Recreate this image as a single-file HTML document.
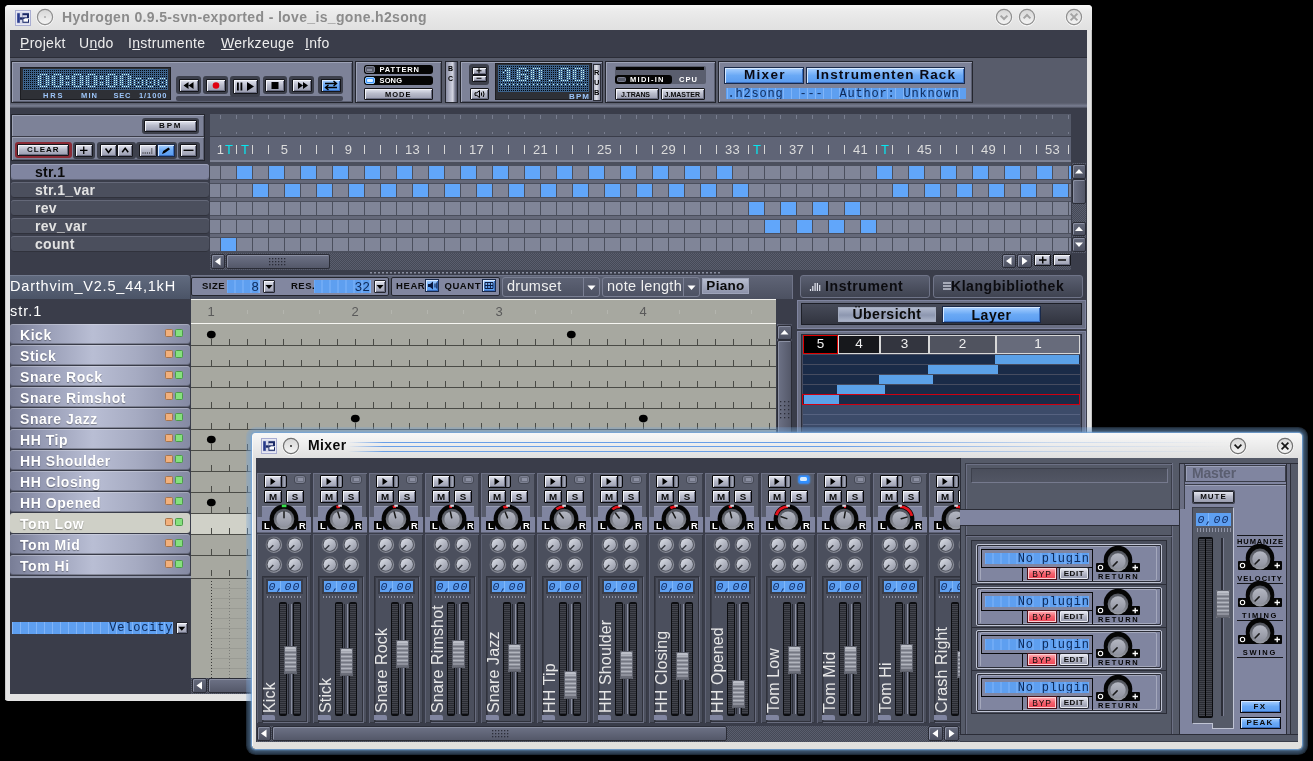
<!DOCTYPE html>
<html><head><meta charset="utf-8"><title>Hydrogen</title>
<style>
html,body{margin:0;padding:0;background:#000;}
body{width:1313px;height:761px;position:relative;overflow:hidden;font-family:"Liberation Sans",sans-serif;}
div,svg{position:absolute;box-sizing:border-box;}
.t{white-space:nowrap;line-height:1;}
.btn{background:linear-gradient(#e4e6f0,#b9bccb 45%,#9a9db0);border:1px solid #23252e;border-radius:1px;box-shadow:inset 1px 1px 0 #f4f5fa,inset -1px -1px 0 #6d7084;}
.bbtn{background:linear-gradient(#a9d0ff,#6aa9f5 50%,#5a9cf0);border:1px solid #1a2a4a;box-shadow:inset 1px 1px 0 #d6e8ff,inset -1px -1px 0 #3a6fc0;}
.px{font-weight:bold;font-size:8px;letter-spacing:1px;color:#0a0a0a;white-space:nowrap;line-height:1;text-align:center;}
.lcd{font-family:"Liberation Mono",monospace;color:#0d2a5a;white-space:nowrap;line-height:1;}
.panel{background:#7d8298;border:1px solid #24262e;box-shadow:inset 1px 1px 0 #9da2b6,inset -1px -1px 0 #5a5e70;}
</style></head>
<body>
<div id="w" style="left:0;top:0;width:1313px;height:761px;will-change:transform">
<svg width="0" height="0" style="left:0;top:0"><defs><linearGradient id="ko" x1="0" y1="0" x2="0" y2="1"><stop offset="0" stop-color="#50535c"/><stop offset="0.5" stop-color="#6a6d76"/><stop offset="1" stop-color="#9c9fa8"/></linearGradient><linearGradient id="ki" x1="0" y1="0" x2="0" y2="1"><stop offset="0" stop-color="#b4b7c2"/><stop offset="1" stop-color="#9093a0"/></linearGradient><linearGradient id="so" x1="0" y1="0" x2="1" y2="1"><stop offset="0" stop-color="#5a5d68"/><stop offset="1" stop-color="#9a9da8"/></linearGradient><linearGradient id="si" x1="0" y1="0" x2="1" y2="1"><stop offset="0" stop-color="#dfe2ea"/><stop offset="1" stop-color="#8f93a2"/></linearGradient></defs><defs><pattern id="dm" width="2" height="2" patternUnits="userSpaceOnUse"><rect width="1" height="1" fill="#04070b"/></pattern><pattern id="lit" width="2" height="2" patternUnits="userSpaceOnUse"><rect width="1" height="1" fill="#c8f6f6"/></pattern></defs></svg>
<div style="left:5px;top:5px;width:1087px;height:696px;background:#e3e3e3;border-radius:4px 4px 3px 3px;"></div>
<div style="left:5px;top:5px;width:1087px;height:25px;background:linear-gradient(#f8f8f8,#ebebeb 25%,#e6e6e6 60%,#e1e1e1);border-radius:4px 4px 0 0;"></div>
<div style="left:5px;top:30px;width:1px;height:670px;background:#c8c8c8;"></div>
<div style="left:1091px;top:30px;width:1px;height:670px;background:#c4c4c4;"></div>
<svg style="left:15px;top:10px;" width="16" height="16" viewBox="0 0 16 16"><rect x="0.5" y="0.5" width="15" height="15" fill="#d6d8ea" stroke="#a9add2"/><rect x="1.5" y="1.5" width="13" height="13" fill="none" stroke="#e8e9f4"/><rect x="2.2" y="3.2" width="2.6" height="9.6" fill="#283a8c"/><rect x="4.8" y="7.3" width="2.8" height="2.4" fill="#1a2866"/><rect x="7.4" y="3.2" width="6.6" height="9.6" fill="#1a2866"/><rect x="7.4" y="5.2" width="4.6" height="2.1" fill="#d6d8ea"/><rect x="8.4" y="8.9" width="4.6" height="2.8" fill="#ffffff"/><rect x="9.6" y="8.3" width="4.4" height="0.9" fill="#ffffff"/></svg>
<svg style="left:35px;top:7px;" width="20" height="21" viewBox="0 0 20 21"><defs><linearGradient id="cg4517" x1="0" y1="0" x2="0" y2="1"><stop offset="0" stop-color="#d6d6d6"/><stop offset="1" stop-color="#f6f6f6"/></linearGradient></defs><circle cx="10" cy="10.6" r="8.3" fill="none" stroke="#fafafa" stroke-width="1"/><circle cx="10" cy="10" r="7.6" fill="url(#cg4517)" stroke="#8e8e8e" stroke-width="1.2"/><circle cx="10" cy="10" r="0.9" fill="#a4a4a4"/></svg>
<div class="t" style="left:62px;top:10px;font-weight:bold;font-size:14px;color:#8b8b8b;letter-spacing:0.35px;">Hydrogen 0.9.5-svn-exported - love_is_gone.h2song</div>
<svg style="left:993.5px;top:7px;" width="20" height="21" viewBox="0 0 20 21"><defs><linearGradient id="cg100317" x1="0" y1="0" x2="0" y2="1"><stop offset="0" stop-color="#d6d6d6"/><stop offset="1" stop-color="#f6f6f6"/></linearGradient></defs><circle cx="10" cy="10.6" r="8.3" fill="none" stroke="#fafafa" stroke-width="1"/><circle cx="10" cy="10" r="7.6" fill="url(#cg100317)" stroke="#8e8e8e" stroke-width="1.2"/><path d="M6.6 8.6 L10 12 L13.4 8.6" fill="none" stroke="#a4a4a4" stroke-width="2.0"/></svg>
<svg style="left:1016.5px;top:7px;" width="20" height="21" viewBox="0 0 20 21"><defs><linearGradient id="cg102617" x1="0" y1="0" x2="0" y2="1"><stop offset="0" stop-color="#d6d6d6"/><stop offset="1" stop-color="#f6f6f6"/></linearGradient></defs><circle cx="10" cy="10.6" r="8.3" fill="none" stroke="#fafafa" stroke-width="1"/><circle cx="10" cy="10" r="7.6" fill="url(#cg102617)" stroke="#8e8e8e" stroke-width="1.2"/><path d="M6.6 11.4 L10 8 L13.4 11.4" fill="none" stroke="#a4a4a4" stroke-width="2.0"/></svg>
<svg style="left:1063.5px;top:7px;" width="20" height="21" viewBox="0 0 20 21"><defs><linearGradient id="cg107317" x1="0" y1="0" x2="0" y2="1"><stop offset="0" stop-color="#d6d6d6"/><stop offset="1" stop-color="#f6f6f6"/></linearGradient></defs><circle cx="10" cy="10.6" r="8.3" fill="none" stroke="#fafafa" stroke-width="1"/><circle cx="10" cy="10" r="7.6" fill="url(#cg107317)" stroke="#8e8e8e" stroke-width="1.2"/><path d="M6.6 6.6 L13.4 13.4 M13.4 6.6 L6.6 13.4" fill="none" stroke="#a4a4a4" stroke-width="2.0"/></svg>
<div style="left:10px;top:30px;width:1077px;height:664px;background:#3a3d4a;"></div>
<div class="t" style="left:20px;top:36px;font-size:14px;color:#eeeeee;letter-spacing:0.3px;"><u>P</u>rojekt</div>
<div class="t" style="left:79px;top:36px;font-size:14px;color:#eeeeee;letter-spacing:0.3px;">U<u>n</u>do</div>
<div class="t" style="left:128px;top:36px;font-size:14px;color:#eeeeee;letter-spacing:0.3px;">I<u>n</u>strumente</div>
<div class="t" style="left:221px;top:36px;font-size:14px;color:#eeeeee;letter-spacing:0.3px;"><u>W</u>erkzeuge</div>
<div class="t" style="left:305px;top:36px;font-size:14px;color:#eeeeee;letter-spacing:0.3px;"><u>I</u>nfo</div>
<div style="left:10px;top:57px;width:1077px;height:51px;background:#585c6b;"></div>
<div style="left:10px;top:57px;width:1077px;height:1px;background:#2b2d37;"></div>
<div style="left:10px;top:103px;width:1077px;height:5px;background:linear-gradient(#585c6b,#7a7f92 60%,#4a4e5c);"></div>
<div class="panel" style="left:11px;top:61px;width:342px;height:42px;"></div>
<div style="left:20px;top:67px;width:151px;height:33px;background:#2e3036;border:1px solid #1c1d22;"></div>
<div style="left:23px;top:69px;width:145px;height:21px;background:#3d628a;"></div>
<svg style="left:24px;top:70px;shape-rendering:crispEdges;" width="144" height="20" viewBox="0 0 144 20"><rect width="144" height="20" fill="url(#dm)"/><rect x="16" y="4" width="8" height="2" fill="url(#lit)"/><rect x="16" y="16" width="8" height="2" fill="url(#lit)"/><rect x="14" y="6" width="4" height="10" fill="url(#lit)"/><rect x="22" y="6" width="4" height="10" fill="url(#lit)"/><rect x="30" y="4" width="8" height="2" fill="url(#lit)"/><rect x="30" y="16" width="8" height="2" fill="url(#lit)"/><rect x="28" y="6" width="4" height="10" fill="url(#lit)"/><rect x="36" y="6" width="4" height="10" fill="url(#lit)"/><rect x="50" y="4" width="8" height="2" fill="url(#lit)"/><rect x="50" y="16" width="8" height="2" fill="url(#lit)"/><rect x="48" y="6" width="4" height="10" fill="url(#lit)"/><rect x="56" y="6" width="4" height="10" fill="url(#lit)"/><rect x="64" y="4" width="8" height="2" fill="url(#lit)"/><rect x="64" y="16" width="8" height="2" fill="url(#lit)"/><rect x="62" y="6" width="4" height="10" fill="url(#lit)"/><rect x="70" y="6" width="4" height="10" fill="url(#lit)"/><rect x="84" y="4" width="8" height="2" fill="url(#lit)"/><rect x="84" y="16" width="8" height="2" fill="url(#lit)"/><rect x="82" y="6" width="4" height="10" fill="url(#lit)"/><rect x="90" y="6" width="4" height="10" fill="url(#lit)"/><rect x="98" y="4" width="8" height="2" fill="url(#lit)"/><rect x="98" y="16" width="8" height="2" fill="url(#lit)"/><rect x="96" y="6" width="4" height="10" fill="url(#lit)"/><rect x="104" y="6" width="4" height="10" fill="url(#lit)"/><rect x="42" y="6" width="4" height="4" fill="url(#lit)"/><rect x="42" y="12" width="4" height="4" fill="url(#lit)"/><rect x="76" y="6" width="4" height="4" fill="url(#lit)"/><rect x="76" y="12" width="4" height="4" fill="url(#lit)"/><rect x="112" y="8" width="6" height="2" fill="url(#lit)"/><rect x="112" y="16" width="6" height="2" fill="url(#lit)"/><rect x="110" y="10" width="2" height="6" fill="url(#lit)"/><rect x="118" y="10" width="2" height="6" fill="url(#lit)"/><rect x="114" y="12" width="2" height="2" fill="url(#lit)"/><rect x="124" y="8" width="6" height="2" fill="url(#lit)"/><rect x="124" y="16" width="6" height="2" fill="url(#lit)"/><rect x="122" y="10" width="2" height="6" fill="url(#lit)"/><rect x="130" y="10" width="2" height="6" fill="url(#lit)"/><rect x="126" y="12" width="2" height="2" fill="url(#lit)"/><rect x="136" y="8" width="6" height="2" fill="url(#lit)"/><rect x="136" y="16" width="6" height="2" fill="url(#lit)"/><rect x="134" y="10" width="2" height="6" fill="url(#lit)"/><rect x="142" y="10" width="2" height="6" fill="url(#lit)"/><rect x="138" y="12" width="2" height="2" fill="url(#lit)"/></svg>
<div class="t" style="left:43px;top:92px;font-size:7.5px;font-weight:bold;color:#9cc4f8;letter-spacing:1.83px;">HRS</div>
<div class="t" style="left:81px;top:92px;font-size:7.5px;font-weight:bold;color:#9cc4f8;letter-spacing:1.13px;">MIN</div>
<div class="t" style="left:113.5px;top:92px;font-size:7.5px;font-weight:bold;color:#9cc4f8;letter-spacing:0.79px;">SEC</div>
<div class="t" style="left:139px;top:92px;font-size:7.5px;font-weight:bold;color:#9cc4f8;letter-spacing:0.91px;">1/1000</div>
<div style="left:176px;top:96px;width:167px;height:5px;background:#454857;border-radius:2px;"></div>
<div style="left:176.0px;top:76px;width:25px;height:18px;background:#3d404c;border-radius:3px;"></div>
<div class="btn" style="left:178.5px;top:79px;width:20px;height:13px;border-color:#15161b;"></div>
<svg style="left:178.5px;top:79px;" width="20" height="13" viewBox="0 0 20 13"><path d="M9.5 3 L9.5 10 L4.5 6.5z M14.5 3 L14.5 10 L9.5 6.5z" fill="#000"/></svg>
<div style="left:203.0px;top:76px;width:25px;height:18px;background:#3d404c;border-radius:3px;"></div>
<div class="btn" style="left:205.5px;top:79px;width:20px;height:13px;border-color:#15161b;"></div>
<svg style="left:205.5px;top:79px;" width="20" height="13" viewBox="0 0 20 13"><circle cx="10" cy="6.5" r="3.3" fill="#e00010"/></svg>
<div style="left:230.0px;top:76px;width:30px;height:21px;background:#3d404c;border-radius:3px;"></div>
<div class="btn" style="left:232.5px;top:79px;width:25px;height:15px;border-color:#15161b;"></div>
<svg style="left:232.5px;top:79px;" width="25" height="15" viewBox="0 0 25 15"><path d="M4 3.5h1.8v8H4z M7.5 3.5h1.8v8H7.5z M14 3 L21 7.5 L14 12z" fill="#000"/></svg>
<div style="left:262.5px;top:76px;width:24.5px;height:18px;background:#3d404c;border-radius:3px;"></div>
<div class="btn" style="left:265px;top:79px;width:19.5px;height:13px;border-color:#15161b;"></div>
<svg style="left:265px;top:79px;" width="19.5" height="13" viewBox="0 0 19.5 13"><rect x="6.5" y="3" width="7" height="7" fill="#000"/></svg>
<div style="left:289.0px;top:76px;width:25px;height:18px;background:#3d404c;border-radius:3px;"></div>
<div class="btn" style="left:291.5px;top:79px;width:20px;height:13px;border-color:#15161b;"></div>
<svg style="left:291.5px;top:79px;" width="20" height="13" viewBox="0 0 20 13"><path d="M6 3 L6 10 L11 6.5z M11 3 L11 10 L16 6.5z" fill="#000"/></svg>
<div style="left:318.0px;top:76px;width:25px;height:18px;background:#3d404c;border-radius:3px;"></div>
<div class="bbtn" style="left:320.5px;top:79px;width:20px;height:13px;border-color:#15161b;"></div>
<svg style="left:320.5px;top:79px;" width="20" height="13" viewBox="0 0 20 13"><path d="M4 4.5h10.5M12.5 2l3 2.5l-3 2.5 M16 8.5h-10.5M7.5 6l-3 2.5l3 2.5" fill="none" stroke="#000" stroke-width="1.4"/></svg>
<div class="panel" style="left:355px;top:61px;width:87px;height:42px;"></div>
<div style="left:364px;top:65px;width:69px;height:9px;background:#050505;border-radius:3px;"></div>
<div style="left:364px;top:76px;width:69px;height:9px;background:#050505;border-radius:3px;"></div>
<div style="left:364.5px;top:66px;width:10.5px;height:7px;background:#565a69;border:1px solid #7c8092;border-radius:2px;"></div>
<div style="left:367px;top:69px;width:5px;height:1.5px;background:#8a8ea0;"></div>
<div style="left:364.5px;top:77px;width:10.5px;height:7px;background:#3f98ff;border:1px solid #9fd0ff;border-radius:2px;"></div>
<div style="left:367px;top:79px;width:6px;height:3px;background:#dff0ff;border-radius:1px;"></div>
<div class="t" style="left:379.5px;top:66px;font-size:7.5px;font-weight:bold;color:#fff;letter-spacing:0.87px;">PATTERN</div>
<div class="t" style="left:379.5px;top:77px;font-size:7.5px;font-weight:bold;color:#fff;letter-spacing:0.14px;">SONG</div>
<div class="btn" style="left:364px;top:88px;width:69px;height:12px;border-color:#15161b;"></div>
<div class="t" style="left:385px;top:90.5px;font-size:7.5px;font-weight:bold;color:#0a0a0a;letter-spacing:1.00px;">MODE</div>
<div style="left:444.5px;top:61px;width:13px;height:42px;background:linear-gradient(90deg,#8a8ea4,#b4b7c8 35%,#d4d6e2 62%,#8a8da0 78%,#4d5062);border:1px solid #24262e;"></div>
<div class="t" style="left:448px;top:65px;font-size:7px;font-weight:bold;color:#000;">B</div>
<div class="t" style="left:448px;top:75px;font-size:7px;font-weight:bold;color:#000;">C</div>
<div class="panel" style="left:459.5px;top:61px;width:143px;height:42px;"></div>
<div style="left:469px;top:64px;width:20px;height:21px;background:#3d404c;border-radius:3px;"></div>
<div class="btn" style="left:471.5px;top:67px;width:15px;height:7.5px;border-color:#15161b;"></div>
<div class="btn" style="left:471.5px;top:74.5px;width:15px;height:7.5px;border-color:#15161b;"></div>
<svg style="left:471px;top:66px;" width="16" height="17" viewBox="0 0 16 17"><path d="M5.5 4.7h5M8 2.2v5M5.5 12.2h5" stroke="#000" stroke-width="1.1"/></svg>
<div class="btn" style="left:469.5px;top:88px;width:19px;height:12px;border-color:#15161b;"></div>
<svg style="left:469.5px;top:88px;" width="19" height="12" viewBox="0 0 19 12"><path d="M5 4.8h1.8l2.7-2.2v7L6.8 7.4H5z" fill="none" stroke="#000" stroke-width="1"/><path d="M11.5 4.5v3.2M13.2 3.2q1.6 2.8 0 5.8" fill="none" stroke="#000" stroke-width="1"/></svg>
<div style="left:495px;top:63px;width:97px;height:37px;background:#2e3036;border:1px solid #1c1d22;"></div>
<div style="left:498px;top:65px;width:91px;height:27px;background:#3d628a;"></div>
<svg style="left:499px;top:66px;shape-rendering:crispEdges;" width="90" height="26" viewBox="0 0 90 26"><rect width="90" height="26" fill="url(#dm)"/><rect x="8" y="2" width="4" height="12" fill="url(#lit)"/><rect x="6" y="4" width="2" height="2" fill="url(#lit)"/><rect x="4" y="6" width="2" height="2" fill="url(#lit)"/><rect x="4" y="14" width="12" height="2" fill="url(#lit)"/><rect x="20" y="2" width="8" height="2" fill="url(#lit)"/><rect x="18" y="4" width="4" height="10" fill="url(#lit)"/><rect x="26" y="4" width="4" height="2" fill="url(#lit)"/><rect x="22" y="8" width="6" height="2" fill="url(#lit)"/><rect x="26" y="10" width="4" height="4" fill="url(#lit)"/><rect x="20" y="14" width="8" height="2" fill="url(#lit)"/><rect x="34" y="2" width="8" height="2" fill="url(#lit)"/><rect x="34" y="14" width="8" height="2" fill="url(#lit)"/><rect x="32" y="4" width="4" height="10" fill="url(#lit)"/><rect x="40" y="4" width="4" height="10" fill="url(#lit)"/><rect x="50" y="14" width="4" height="2" fill="url(#lit)"/><rect x="62" y="2" width="8" height="2" fill="url(#lit)"/><rect x="62" y="14" width="8" height="2" fill="url(#lit)"/><rect x="60" y="4" width="4" height="10" fill="url(#lit)"/><rect x="68" y="4" width="4" height="10" fill="url(#lit)"/><rect x="76" y="2" width="8" height="2" fill="url(#lit)"/><rect x="76" y="14" width="8" height="2" fill="url(#lit)"/><rect x="74" y="4" width="4" height="10" fill="url(#lit)"/><rect x="82" y="4" width="4" height="10" fill="url(#lit)"/><rect x="2" y="18" width="2" height="2" fill="url(#lit)"/><rect x="6" y="18" width="2" height="2" fill="url(#lit)"/><rect x="10" y="18" width="2" height="2" fill="url(#lit)"/><rect x="14" y="18" width="2" height="2" fill="url(#lit)"/><rect x="18" y="18" width="2" height="2" fill="url(#lit)"/><rect x="22" y="18" width="2" height="2" fill="url(#lit)"/><rect x="26" y="18" width="2" height="2" fill="url(#lit)"/><rect x="30" y="18" width="2" height="2" fill="url(#lit)"/><rect x="34" y="18" width="2" height="2" fill="url(#lit)"/><rect x="38" y="18" width="2" height="2" fill="url(#lit)"/><rect x="42" y="18" width="2" height="2" fill="url(#lit)"/><rect x="46" y="18" width="2" height="2" fill="url(#lit)"/><rect x="50" y="18" width="2" height="2" fill="url(#lit)"/><rect x="54" y="18" width="2" height="2" fill="url(#lit)"/><rect x="58" y="18" width="2" height="2" fill="url(#lit)"/><rect x="62" y="18" width="2" height="2" fill="url(#lit)"/><rect x="66" y="18" width="2" height="2" fill="url(#lit)"/><rect x="70" y="18" width="2" height="2" fill="url(#lit)"/><rect x="74" y="18" width="2" height="2" fill="url(#lit)"/><rect x="78" y="18" width="2" height="2" fill="url(#lit)"/><rect x="82" y="18" width="2" height="2" fill="url(#lit)"/><rect x="86" y="18" width="2" height="2" fill="url(#lit)"/></svg>
<div class="t" style="left:569px;top:92.5px;font-size:8px;font-weight:bold;color:#9cc4f8;letter-spacing:1.11px;">BPM</div>
<div style="left:592.5px;top:64px;width:8px;height:36.5px;background:linear-gradient(90deg,#b9bccb,#e0e2ea 45%,#8f92a6);border:1px solid #2a2c36;"></div>
<div class="t" style="left:594px;top:69px;font-size:7.5px;font-weight:bold;color:#000;">R</div>
<div class="t" style="left:594px;top:79px;font-size:7.5px;font-weight:bold;color:#000;">U</div>
<div class="t" style="left:594px;top:89px;font-size:7.5px;font-weight:bold;color:#000;">B</div>
<div class="panel" style="left:604.5px;top:61px;width:111px;height:42px;"></div>
<div style="left:614.5px;top:65.5px;width:91px;height:18px;background:#5a5e6e;border-radius:2px;"></div>
<div style="left:616px;top:66.5px;width:88px;height:3.5px;background:#050505;"></div>
<div style="left:614.5px;top:74.5px;width:57px;height:9px;background:#050505;border-radius:3px;"></div>
<div style="left:617px;top:76.5px;width:8.5px;height:5.5px;background:#565a69;border:1px solid #7c8092;border-radius:1.5px;"></div>
<div class="t" style="left:630px;top:75.5px;font-size:7.5px;font-weight:bold;color:#fff;letter-spacing:1.28px;">MIDI-IN</div>
<div class="t" style="left:679px;top:75.5px;font-size:7.5px;font-weight:bold;color:#fff;letter-spacing:1.08px;">CPU</div>
<div class="btn" style="left:614.5px;top:88px;width:44px;height:11.5px;border-color:#15161b;"></div>
<div class="t" style="left:621px;top:90.5px;font-size:7px;font-weight:bold;color:#0a0a0a;letter-spacing:-0.16px;">J.TRANS</div>
<div class="btn" style="left:660.5px;top:88px;width:44px;height:11.5px;border-color:#15161b;"></div>
<div class="t" style="left:664.5px;top:90.5px;font-size:7px;font-weight:bold;color:#0a0a0a;letter-spacing:0.02px;">J.MASTER</div>
<div class="panel" style="left:717.5px;top:61px;width:255px;height:42px;"></div>
<div class="bbtn" style="left:724px;top:67px;width:80px;height:17px;"></div>
<div class="t" style="left:744px;top:68px;font-size:13.5px;font-weight:bold;color:#0a0a14;letter-spacing:1.31px;">Mixer</div>
<div class="bbtn" style="left:805.5px;top:67px;width:159.5px;height:17px;"></div>
<div class="t" style="left:816px;top:68px;font-size:13.5px;font-weight:bold;color:#0a0a14;letter-spacing:1.09px;">Instrumenten Rack</div>
<div style="left:726px;top:88px;width:239.5px;height:11px;background:#5e9ff0;background-image:repeating-linear-gradient(90deg,rgba(150,195,255,0.6) 0 1px,transparent 1px 8px);background-position:1.0px 0;overflow:hidden;"><div class="lcd" style="left:1.5px;right:0.7px;top:0.0px;font-size:12px;letter-spacing:0.8px;text-align:left">.h2song&nbsp;&nbsp;---&nbsp;&nbsp;Author:&nbsp;Unknown</div></div>
<div style="left:10px;top:108px;width:1077px;height:167px;background:#3a3d4a;"></div>
<div class="panel" style="left:11px;top:114px;width:194px;height:47px;"></div>
<div style="left:12px;top:136px;width:192px;height:1px;background:#3a3c48;"></div>
<div style="left:12px;top:137px;width:192px;height:1px;background:#9da2b6;"></div>
<div style="left:141.5px;top:117.5px;width:57px;height:16px;background:#3d404c;border-radius:3px;"></div>
<div class="btn" style="left:144px;top:120px;width:52.5px;height:11.5px;border-color:#15161b;"></div>
<div class="t" style="left:159px;top:122px;font-size:8px;font-weight:bold;color:#0a0a0a;letter-spacing:1.86px;">BPM</div>
<div style="left:14.5px;top:141.5px;width:57px;height:16px;background:#8a2b36;border-radius:3px;"></div>
<div class="btn" style="left:17px;top:144px;width:52px;height:11.5px;border-color:#15161b;"></div>
<div class="t" style="left:27px;top:146px;font-size:8px;font-weight:bold;color:#0a0a0a;letter-spacing:0.99px;">CLEAR</div>
<div style="left:72.5px;top:141.5px;width:22px;height:17px;background:#3d404c;border-radius:3px;"></div>
<div class="btn" style="left:75px;top:144px;width:17.5px;height:12.5px;border-color:#15161b;"></div>
<svg style="left:75px;top:144px;" width="17.5" height="12.5" viewBox="0 0 17.5 12.5"><path d="M5 6.3h7.5M8.75 2.6v7.4" stroke="#000" stroke-width="1.3"/></svg>
<div style="left:97px;top:141.5px;width:38.5px;height:17px;background:#3d404c;border-radius:3px;"></div>
<div class="btn" style="left:99.5px;top:144px;width:17px;height:12.5px;border-color:#15161b;"></div>
<div class="btn" style="left:116.5px;top:144px;width:16.5px;height:12.5px;border-color:#15161b;"></div>
<svg style="left:99.5px;top:144px;" width="17" height="12.5" viewBox="0 0 17 12.5"><path d="M5.5 4.5l3 4l3-4" fill="none" stroke="#000" stroke-width="1.5"/></svg>
<svg style="left:116.5px;top:144px;" width="16.5" height="12.5" viewBox="0 0 16.5 12.5"><path d="M5.2 8.3l3-4l3 4" fill="none" stroke="#000" stroke-width="1.5"/></svg>
<div style="left:136px;top:141.5px;width:41px;height:17px;background:#3d404c;border-radius:3px;"></div>
<div class="btn" style="left:138.5px;top:144px;width:18.5px;height:12.5px;border-color:#15161b;"></div>
<div class="bbtn" style="left:157px;top:144px;width:18px;height:12.5px;"></div>
<svg style="left:138.5px;top:144px;" width="18.5" height="12.5" viewBox="0 0 18.5 12.5"><path d="M3.5 9h1M5.7 9h1M7.9 9h1M10.1 9h1M12.3 9h1M12.3 7h1M12.3 5h1" stroke="#000" stroke-width="1.1"/></svg>
<svg style="left:157px;top:144px;" width="18" height="12.5" viewBox="0 0 18 12.5"><path d="M5 10l1.2-3l5.3-3.5l1.5 1.8l-5.3 3.6z" fill="#000"/></svg>
<div style="left:177.5px;top:141.5px;width:22px;height:17px;background:#3d404c;border-radius:3px;"></div>
<div class="btn" style="left:180px;top:144px;width:17px;height:12.5px;border-color:#15161b;"></div>
<svg style="left:180px;top:144px;" width="17" height="12.5" viewBox="0 0 17 12.5"><path d="M3.5 6.3h10" stroke="#000" stroke-width="1.3"/></svg>
<div style="left:210px;top:114px;width:861px;height:23px;background:#555a69;border-bottom:1px solid #3a3d4a;"></div>
<svg style="left:210px;top:114px;" width="861" height="23" viewBox="0 0 861 23"><path d="M10.5 1v4M10.5 18v2" stroke="#787d8e" stroke-width="1"/><path d="M26.5 1v4M26.5 18v2" stroke="#787d8e" stroke-width="1"/><path d="M42.5 1v4M42.5 18v2" stroke="#787d8e" stroke-width="1"/><path d="M58.5 1v4M58.5 18v2" stroke="#787d8e" stroke-width="1"/><path d="M74.5 1v4M74.5 18v2" stroke="#787d8e" stroke-width="1"/><path d="M90.5 1v4M90.5 18v2" stroke="#787d8e" stroke-width="1"/><path d="M106.5 1v4M106.5 18v2" stroke="#787d8e" stroke-width="1"/><path d="M122.5 1v4M122.5 18v2" stroke="#787d8e" stroke-width="1"/><path d="M138.5 1v4M138.5 18v2" stroke="#787d8e" stroke-width="1"/><path d="M154.5 1v4M154.5 18v2" stroke="#787d8e" stroke-width="1"/><path d="M170.5 1v4M170.5 18v2" stroke="#787d8e" stroke-width="1"/><path d="M186.5 1v4M186.5 18v2" stroke="#787d8e" stroke-width="1"/><path d="M202.5 1v4M202.5 18v2" stroke="#787d8e" stroke-width="1"/><path d="M218.5 1v4M218.5 18v2" stroke="#787d8e" stroke-width="1"/><path d="M234.5 1v4M234.5 18v2" stroke="#787d8e" stroke-width="1"/><path d="M250.5 1v4M250.5 18v2" stroke="#787d8e" stroke-width="1"/><path d="M266.5 1v4M266.5 18v2" stroke="#787d8e" stroke-width="1"/><path d="M282.5 1v4M282.5 18v2" stroke="#787d8e" stroke-width="1"/><path d="M298.5 1v4M298.5 18v2" stroke="#787d8e" stroke-width="1"/><path d="M314.5 1v4M314.5 18v2" stroke="#787d8e" stroke-width="1"/><path d="M330.5 1v4M330.5 18v2" stroke="#787d8e" stroke-width="1"/><path d="M346.5 1v4M346.5 18v2" stroke="#787d8e" stroke-width="1"/><path d="M362.5 1v4M362.5 18v2" stroke="#787d8e" stroke-width="1"/><path d="M378.5 1v4M378.5 18v2" stroke="#787d8e" stroke-width="1"/><path d="M394.5 1v4M394.5 18v2" stroke="#787d8e" stroke-width="1"/><path d="M410.5 1v4M410.5 18v2" stroke="#787d8e" stroke-width="1"/><path d="M426.5 1v4M426.5 18v2" stroke="#787d8e" stroke-width="1"/><path d="M442.5 1v4M442.5 18v2" stroke="#787d8e" stroke-width="1"/><path d="M458.5 1v4M458.5 18v2" stroke="#787d8e" stroke-width="1"/><path d="M474.5 1v4M474.5 18v2" stroke="#787d8e" stroke-width="1"/><path d="M490.5 1v4M490.5 18v2" stroke="#787d8e" stroke-width="1"/><path d="M506.5 1v4M506.5 18v2" stroke="#787d8e" stroke-width="1"/><path d="M522.5 1v4M522.5 18v2" stroke="#787d8e" stroke-width="1"/><path d="M538.5 1v4M538.5 18v2" stroke="#787d8e" stroke-width="1"/><path d="M554.5 1v4M554.5 18v2" stroke="#787d8e" stroke-width="1"/><path d="M570.5 1v4M570.5 18v2" stroke="#787d8e" stroke-width="1"/><path d="M586.5 1v4M586.5 18v2" stroke="#787d8e" stroke-width="1"/><path d="M602.5 1v4M602.5 18v2" stroke="#787d8e" stroke-width="1"/><path d="M618.5 1v4M618.5 18v2" stroke="#787d8e" stroke-width="1"/><path d="M634.5 1v4M634.5 18v2" stroke="#787d8e" stroke-width="1"/><path d="M650.5 1v4M650.5 18v2" stroke="#787d8e" stroke-width="1"/><path d="M666.5 1v4M666.5 18v2" stroke="#787d8e" stroke-width="1"/><path d="M682.5 1v4M682.5 18v2" stroke="#787d8e" stroke-width="1"/><path d="M698.5 1v4M698.5 18v2" stroke="#787d8e" stroke-width="1"/><path d="M714.5 1v4M714.5 18v2" stroke="#787d8e" stroke-width="1"/><path d="M730.5 1v4M730.5 18v2" stroke="#787d8e" stroke-width="1"/><path d="M746.5 1v4M746.5 18v2" stroke="#787d8e" stroke-width="1"/><path d="M762.5 1v4M762.5 18v2" stroke="#787d8e" stroke-width="1"/><path d="M778.5 1v4M778.5 18v2" stroke="#787d8e" stroke-width="1"/><path d="M794.5 1v4M794.5 18v2" stroke="#787d8e" stroke-width="1"/><path d="M810.5 1v4M810.5 18v2" stroke="#787d8e" stroke-width="1"/><path d="M826.5 1v4M826.5 18v2" stroke="#787d8e" stroke-width="1"/><path d="M842.5 1v4M842.5 18v2" stroke="#787d8e" stroke-width="1"/><path d="M858.5 1v4M858.5 18v2" stroke="#787d8e" stroke-width="1"/><path d="M874.5 1v4M874.5 18v2" stroke="#787d8e" stroke-width="1"/></svg>
<div style="left:210px;top:137px;width:861px;height:24px;background:#5f6476;"></div>
<div style="left:210px;top:160px;width:861px;height:2px;background:#7d8294;"></div>
<div class="t" style="left:204.5px;width:32px;text-align:center;top:143px;font-size:13px;color:#dcdcdc;letter-spacing:0.3px">1</div>
<div class="t" style="left:268.5px;width:32px;text-align:center;top:143px;font-size:13px;color:#dcdcdc;letter-spacing:0.3px">5</div>
<div class="t" style="left:332.5px;width:32px;text-align:center;top:143px;font-size:13px;color:#dcdcdc;letter-spacing:0.3px">9</div>
<div class="t" style="left:396.5px;width:32px;text-align:center;top:143px;font-size:13px;color:#dcdcdc;letter-spacing:0.3px">13</div>
<div class="t" style="left:460.5px;width:32px;text-align:center;top:143px;font-size:13px;color:#dcdcdc;letter-spacing:0.3px">17</div>
<div class="t" style="left:524.5px;width:32px;text-align:center;top:143px;font-size:13px;color:#dcdcdc;letter-spacing:0.3px">21</div>
<div class="t" style="left:588.5px;width:32px;text-align:center;top:143px;font-size:13px;color:#dcdcdc;letter-spacing:0.3px">25</div>
<div class="t" style="left:652.5px;width:32px;text-align:center;top:143px;font-size:13px;color:#dcdcdc;letter-spacing:0.3px">29</div>
<div class="t" style="left:716.5px;width:32px;text-align:center;top:143px;font-size:13px;color:#dcdcdc;letter-spacing:0.3px">33</div>
<div class="t" style="left:780.5px;width:32px;text-align:center;top:143px;font-size:13px;color:#dcdcdc;letter-spacing:0.3px">37</div>
<div class="t" style="left:844.5px;width:32px;text-align:center;top:143px;font-size:13px;color:#dcdcdc;letter-spacing:0.3px">41</div>
<div class="t" style="left:908.5px;width:32px;text-align:center;top:143px;font-size:13px;color:#dcdcdc;letter-spacing:0.3px">45</div>
<div class="t" style="left:972.5px;width:32px;text-align:center;top:143px;font-size:13px;color:#dcdcdc;letter-spacing:0.3px">49</div>
<div class="t" style="left:1036.5px;width:32px;text-align:center;top:143px;font-size:13px;color:#dcdcdc;letter-spacing:0.3px">53</div>
<svg style="left:210px;top:137px;" width="861" height="24" viewBox="0 0 861 24"><path d="M26.5 8v9" stroke="#d6d6d6" stroke-width="1"/><path d="M42.5 8v9" stroke="#d6d6d6" stroke-width="1"/><path d="M58.5 8v9" stroke="#d6d6d6" stroke-width="1"/><path d="M90.5 8v9" stroke="#d6d6d6" stroke-width="1"/><path d="M106.5 8v9" stroke="#d6d6d6" stroke-width="1"/><path d="M122.5 8v9" stroke="#d6d6d6" stroke-width="1"/><path d="M154.5 8v9" stroke="#d6d6d6" stroke-width="1"/><path d="M170.5 8v9" stroke="#d6d6d6" stroke-width="1"/><path d="M186.5 8v9" stroke="#d6d6d6" stroke-width="1"/><path d="M218.5 8v9" stroke="#d6d6d6" stroke-width="1"/><path d="M234.5 8v9" stroke="#d6d6d6" stroke-width="1"/><path d="M250.5 8v9" stroke="#d6d6d6" stroke-width="1"/><path d="M282.5 8v9" stroke="#d6d6d6" stroke-width="1"/><path d="M298.5 8v9" stroke="#d6d6d6" stroke-width="1"/><path d="M314.5 8v9" stroke="#d6d6d6" stroke-width="1"/><path d="M346.5 8v9" stroke="#d6d6d6" stroke-width="1"/><path d="M362.5 8v9" stroke="#d6d6d6" stroke-width="1"/><path d="M378.5 8v9" stroke="#d6d6d6" stroke-width="1"/><path d="M410.5 8v9" stroke="#d6d6d6" stroke-width="1"/><path d="M426.5 8v9" stroke="#d6d6d6" stroke-width="1"/><path d="M442.5 8v9" stroke="#d6d6d6" stroke-width="1"/><path d="M474.5 8v9" stroke="#d6d6d6" stroke-width="1"/><path d="M490.5 8v9" stroke="#d6d6d6" stroke-width="1"/><path d="M506.5 8v9" stroke="#d6d6d6" stroke-width="1"/><path d="M538.5 8v9" stroke="#d6d6d6" stroke-width="1"/><path d="M554.5 8v9" stroke="#d6d6d6" stroke-width="1"/><path d="M570.5 8v9" stroke="#d6d6d6" stroke-width="1"/><path d="M602.5 8v9" stroke="#d6d6d6" stroke-width="1"/><path d="M618.5 8v9" stroke="#d6d6d6" stroke-width="1"/><path d="M634.5 8v9" stroke="#d6d6d6" stroke-width="1"/><path d="M666.5 8v9" stroke="#d6d6d6" stroke-width="1"/><path d="M682.5 8v9" stroke="#d6d6d6" stroke-width="1"/><path d="M698.5 8v9" stroke="#d6d6d6" stroke-width="1"/><path d="M730.5 8v9" stroke="#d6d6d6" stroke-width="1"/><path d="M746.5 8v9" stroke="#d6d6d6" stroke-width="1"/><path d="M762.5 8v9" stroke="#d6d6d6" stroke-width="1"/><path d="M794.5 8v9" stroke="#d6d6d6" stroke-width="1"/><path d="M810.5 8v9" stroke="#d6d6d6" stroke-width="1"/><path d="M826.5 8v9" stroke="#d6d6d6" stroke-width="1"/><path d="M858.5 8v9" stroke="#d6d6d6" stroke-width="1"/></svg>
<div class="t" style="left:221px;width:16px;text-align:center;top:143px;font-size:13px;color:#08e6ee;">T</div>
<div class="t" style="left:237px;width:16px;text-align:center;top:143px;font-size:13px;color:#08e6ee;">T</div>
<div class="t" style="left:749px;width:16px;text-align:center;top:143px;font-size:13px;color:#08e6ee;">T</div>
<div class="t" style="left:877px;width:16px;text-align:center;top:143px;font-size:13px;color:#08e6ee;">T</div>
<div style="left:11px;top:164px;width:198px;height:16px;background:#8085a0;border-radius:3px;box-shadow:inset 0 1px 0 #9ba0b8,inset 0 -1px 0 #5c6074;"></div>
<div class="t" style="left:35px;top:165px;font-weight:bold;font-size:14px;color:#0a0a0a;letter-spacing:0.3px;">str.1</div>
<div style="left:11px;top:182px;width:198px;height:16px;background:#4b4f5d;border-radius:3px;box-shadow:inset 0 1px 0 #646878,inset 0 -1px 0 #30323c;"></div>
<div class="t" style="left:35px;top:183px;font-weight:bold;font-size:14px;color:#e2e2e2;letter-spacing:0.3px;">str.1_var</div>
<div style="left:11px;top:200px;width:198px;height:16px;background:#4b4f5d;border-radius:3px;box-shadow:inset 0 1px 0 #646878,inset 0 -1px 0 #30323c;"></div>
<div class="t" style="left:35px;top:201px;font-weight:bold;font-size:14px;color:#e2e2e2;letter-spacing:0.3px;">rev</div>
<div style="left:11px;top:218px;width:198px;height:16px;background:#4b4f5d;border-radius:3px;box-shadow:inset 0 1px 0 #646878,inset 0 -1px 0 #30323c;"></div>
<div class="t" style="left:35px;top:219px;font-weight:bold;font-size:14px;color:#e2e2e2;letter-spacing:0.3px;">rev_var</div>
<div style="left:11px;top:236px;width:198px;height:16px;background:#4b4f5d;border-radius:3px;box-shadow:inset 0 1px 0 #646878,inset 0 -1px 0 #30323c;"></div>
<div class="t" style="left:35px;top:237px;font-weight:bold;font-size:14px;color:#e2e2e2;letter-spacing:0.3px;">count</div>
<div style="left:210px;top:162px;width:861px;height:92px;background:#4b4f5d;"></div>
<svg style="left:210px;top:162px;" width="861" height="92" viewBox="0 0 861 92"><rect x="0" y="4" width="10" height="13" fill="#808598"/><rect x="11" y="4" width="15" height="13" fill="#808598"/><rect x="27" y="4" width="15" height="13" fill="#61a6fa"/><rect x="43" y="4" width="15" height="13" fill="#808598"/><rect x="59" y="4" width="15" height="13" fill="#61a6fa"/><rect x="75" y="4" width="15" height="13" fill="#808598"/><rect x="91" y="4" width="15" height="13" fill="#61a6fa"/><rect x="107" y="4" width="15" height="13" fill="#808598"/><rect x="123" y="4" width="15" height="13" fill="#61a6fa"/><rect x="139" y="4" width="15" height="13" fill="#808598"/><rect x="155" y="4" width="15" height="13" fill="#61a6fa"/><rect x="171" y="4" width="15" height="13" fill="#808598"/><rect x="187" y="4" width="15" height="13" fill="#61a6fa"/><rect x="203" y="4" width="15" height="13" fill="#808598"/><rect x="219" y="4" width="15" height="13" fill="#61a6fa"/><rect x="235" y="4" width="15" height="13" fill="#808598"/><rect x="251" y="4" width="15" height="13" fill="#61a6fa"/><rect x="267" y="4" width="15" height="13" fill="#808598"/><rect x="283" y="4" width="15" height="13" fill="#61a6fa"/><rect x="299" y="4" width="15" height="13" fill="#808598"/><rect x="315" y="4" width="15" height="13" fill="#61a6fa"/><rect x="331" y="4" width="15" height="13" fill="#808598"/><rect x="347" y="4" width="15" height="13" fill="#61a6fa"/><rect x="363" y="4" width="15" height="13" fill="#808598"/><rect x="379" y="4" width="15" height="13" fill="#61a6fa"/><rect x="395" y="4" width="15" height="13" fill="#808598"/><rect x="411" y="4" width="15" height="13" fill="#61a6fa"/><rect x="427" y="4" width="15" height="13" fill="#808598"/><rect x="443" y="4" width="15" height="13" fill="#61a6fa"/><rect x="459" y="4" width="15" height="13" fill="#808598"/><rect x="475" y="4" width="15" height="13" fill="#61a6fa"/><rect x="491" y="4" width="15" height="13" fill="#808598"/><rect x="507" y="4" width="15" height="13" fill="#61a6fa"/><rect x="523" y="4" width="15" height="13" fill="#808598"/><rect x="539" y="4" width="15" height="13" fill="#808598"/><rect x="555" y="4" width="15" height="13" fill="#808598"/><rect x="571" y="4" width="15" height="13" fill="#808598"/><rect x="587" y="4" width="15" height="13" fill="#808598"/><rect x="603" y="4" width="15" height="13" fill="#808598"/><rect x="619" y="4" width="15" height="13" fill="#808598"/><rect x="635" y="4" width="15" height="13" fill="#808598"/><rect x="651" y="4" width="15" height="13" fill="#808598"/><rect x="667" y="4" width="15" height="13" fill="#61a6fa"/><rect x="683" y="4" width="15" height="13" fill="#808598"/><rect x="699" y="4" width="15" height="13" fill="#61a6fa"/><rect x="715" y="4" width="15" height="13" fill="#808598"/><rect x="731" y="4" width="15" height="13" fill="#61a6fa"/><rect x="747" y="4" width="15" height="13" fill="#808598"/><rect x="763" y="4" width="15" height="13" fill="#61a6fa"/><rect x="779" y="4" width="15" height="13" fill="#808598"/><rect x="795" y="4" width="15" height="13" fill="#61a6fa"/><rect x="811" y="4" width="15" height="13" fill="#808598"/><rect x="827" y="4" width="15" height="13" fill="#61a6fa"/><rect x="843" y="4" width="15" height="13" fill="#808598"/><rect x="859" y="4" width="2" height="13" fill="#61a6fa"/><rect x="0" y="22" width="10" height="13" fill="#808598"/><rect x="11" y="22" width="15" height="13" fill="#808598"/><rect x="27" y="22" width="15" height="13" fill="#808598"/><rect x="43" y="22" width="15" height="13" fill="#61a6fa"/><rect x="59" y="22" width="15" height="13" fill="#808598"/><rect x="75" y="22" width="15" height="13" fill="#61a6fa"/><rect x="91" y="22" width="15" height="13" fill="#808598"/><rect x="107" y="22" width="15" height="13" fill="#61a6fa"/><rect x="123" y="22" width="15" height="13" fill="#808598"/><rect x="139" y="22" width="15" height="13" fill="#61a6fa"/><rect x="155" y="22" width="15" height="13" fill="#808598"/><rect x="171" y="22" width="15" height="13" fill="#61a6fa"/><rect x="187" y="22" width="15" height="13" fill="#808598"/><rect x="203" y="22" width="15" height="13" fill="#61a6fa"/><rect x="219" y="22" width="15" height="13" fill="#808598"/><rect x="235" y="22" width="15" height="13" fill="#61a6fa"/><rect x="251" y="22" width="15" height="13" fill="#808598"/><rect x="267" y="22" width="15" height="13" fill="#61a6fa"/><rect x="283" y="22" width="15" height="13" fill="#808598"/><rect x="299" y="22" width="15" height="13" fill="#61a6fa"/><rect x="315" y="22" width="15" height="13" fill="#808598"/><rect x="331" y="22" width="15" height="13" fill="#61a6fa"/><rect x="347" y="22" width="15" height="13" fill="#808598"/><rect x="363" y="22" width="15" height="13" fill="#61a6fa"/><rect x="379" y="22" width="15" height="13" fill="#808598"/><rect x="395" y="22" width="15" height="13" fill="#61a6fa"/><rect x="411" y="22" width="15" height="13" fill="#808598"/><rect x="427" y="22" width="15" height="13" fill="#61a6fa"/><rect x="443" y="22" width="15" height="13" fill="#808598"/><rect x="459" y="22" width="15" height="13" fill="#61a6fa"/><rect x="475" y="22" width="15" height="13" fill="#808598"/><rect x="491" y="22" width="15" height="13" fill="#61a6fa"/><rect x="507" y="22" width="15" height="13" fill="#808598"/><rect x="523" y="22" width="15" height="13" fill="#61a6fa"/><rect x="539" y="22" width="15" height="13" fill="#808598"/><rect x="555" y="22" width="15" height="13" fill="#808598"/><rect x="571" y="22" width="15" height="13" fill="#808598"/><rect x="587" y="22" width="15" height="13" fill="#808598"/><rect x="603" y="22" width="15" height="13" fill="#808598"/><rect x="619" y="22" width="15" height="13" fill="#808598"/><rect x="635" y="22" width="15" height="13" fill="#808598"/><rect x="651" y="22" width="15" height="13" fill="#808598"/><rect x="667" y="22" width="15" height="13" fill="#808598"/><rect x="683" y="22" width="15" height="13" fill="#61a6fa"/><rect x="699" y="22" width="15" height="13" fill="#808598"/><rect x="715" y="22" width="15" height="13" fill="#61a6fa"/><rect x="731" y="22" width="15" height="13" fill="#808598"/><rect x="747" y="22" width="15" height="13" fill="#61a6fa"/><rect x="763" y="22" width="15" height="13" fill="#808598"/><rect x="779" y="22" width="15" height="13" fill="#61a6fa"/><rect x="795" y="22" width="15" height="13" fill="#808598"/><rect x="811" y="22" width="15" height="13" fill="#61a6fa"/><rect x="827" y="22" width="15" height="13" fill="#808598"/><rect x="843" y="22" width="15" height="13" fill="#61a6fa"/><rect x="859" y="22" width="2" height="13" fill="#808598"/><rect x="0" y="40" width="10" height="13" fill="#808598"/><rect x="11" y="40" width="15" height="13" fill="#808598"/><rect x="27" y="40" width="15" height="13" fill="#808598"/><rect x="43" y="40" width="15" height="13" fill="#808598"/><rect x="59" y="40" width="15" height="13" fill="#808598"/><rect x="75" y="40" width="15" height="13" fill="#808598"/><rect x="91" y="40" width="15" height="13" fill="#808598"/><rect x="107" y="40" width="15" height="13" fill="#808598"/><rect x="123" y="40" width="15" height="13" fill="#808598"/><rect x="139" y="40" width="15" height="13" fill="#808598"/><rect x="155" y="40" width="15" height="13" fill="#808598"/><rect x="171" y="40" width="15" height="13" fill="#808598"/><rect x="187" y="40" width="15" height="13" fill="#808598"/><rect x="203" y="40" width="15" height="13" fill="#808598"/><rect x="219" y="40" width="15" height="13" fill="#808598"/><rect x="235" y="40" width="15" height="13" fill="#808598"/><rect x="251" y="40" width="15" height="13" fill="#808598"/><rect x="267" y="40" width="15" height="13" fill="#808598"/><rect x="283" y="40" width="15" height="13" fill="#808598"/><rect x="299" y="40" width="15" height="13" fill="#808598"/><rect x="315" y="40" width="15" height="13" fill="#808598"/><rect x="331" y="40" width="15" height="13" fill="#808598"/><rect x="347" y="40" width="15" height="13" fill="#808598"/><rect x="363" y="40" width="15" height="13" fill="#808598"/><rect x="379" y="40" width="15" height="13" fill="#808598"/><rect x="395" y="40" width="15" height="13" fill="#808598"/><rect x="411" y="40" width="15" height="13" fill="#808598"/><rect x="427" y="40" width="15" height="13" fill="#808598"/><rect x="443" y="40" width="15" height="13" fill="#808598"/><rect x="459" y="40" width="15" height="13" fill="#808598"/><rect x="475" y="40" width="15" height="13" fill="#808598"/><rect x="491" y="40" width="15" height="13" fill="#808598"/><rect x="507" y="40" width="15" height="13" fill="#808598"/><rect x="523" y="40" width="15" height="13" fill="#808598"/><rect x="539" y="40" width="15" height="13" fill="#61a6fa"/><rect x="555" y="40" width="15" height="13" fill="#808598"/><rect x="571" y="40" width="15" height="13" fill="#61a6fa"/><rect x="587" y="40" width="15" height="13" fill="#808598"/><rect x="603" y="40" width="15" height="13" fill="#61a6fa"/><rect x="619" y="40" width="15" height="13" fill="#808598"/><rect x="635" y="40" width="15" height="13" fill="#61a6fa"/><rect x="651" y="40" width="15" height="13" fill="#808598"/><rect x="667" y="40" width="15" height="13" fill="#808598"/><rect x="683" y="40" width="15" height="13" fill="#808598"/><rect x="699" y="40" width="15" height="13" fill="#808598"/><rect x="715" y="40" width="15" height="13" fill="#808598"/><rect x="731" y="40" width="15" height="13" fill="#808598"/><rect x="747" y="40" width="15" height="13" fill="#808598"/><rect x="763" y="40" width="15" height="13" fill="#808598"/><rect x="779" y="40" width="15" height="13" fill="#808598"/><rect x="795" y="40" width="15" height="13" fill="#808598"/><rect x="811" y="40" width="15" height="13" fill="#808598"/><rect x="827" y="40" width="15" height="13" fill="#808598"/><rect x="843" y="40" width="15" height="13" fill="#808598"/><rect x="859" y="40" width="2" height="13" fill="#808598"/><rect x="0" y="58" width="10" height="13" fill="#808598"/><rect x="11" y="58" width="15" height="13" fill="#808598"/><rect x="27" y="58" width="15" height="13" fill="#808598"/><rect x="43" y="58" width="15" height="13" fill="#808598"/><rect x="59" y="58" width="15" height="13" fill="#808598"/><rect x="75" y="58" width="15" height="13" fill="#808598"/><rect x="91" y="58" width="15" height="13" fill="#808598"/><rect x="107" y="58" width="15" height="13" fill="#808598"/><rect x="123" y="58" width="15" height="13" fill="#808598"/><rect x="139" y="58" width="15" height="13" fill="#808598"/><rect x="155" y="58" width="15" height="13" fill="#808598"/><rect x="171" y="58" width="15" height="13" fill="#808598"/><rect x="187" y="58" width="15" height="13" fill="#808598"/><rect x="203" y="58" width="15" height="13" fill="#808598"/><rect x="219" y="58" width="15" height="13" fill="#808598"/><rect x="235" y="58" width="15" height="13" fill="#808598"/><rect x="251" y="58" width="15" height="13" fill="#808598"/><rect x="267" y="58" width="15" height="13" fill="#808598"/><rect x="283" y="58" width="15" height="13" fill="#808598"/><rect x="299" y="58" width="15" height="13" fill="#808598"/><rect x="315" y="58" width="15" height="13" fill="#808598"/><rect x="331" y="58" width="15" height="13" fill="#808598"/><rect x="347" y="58" width="15" height="13" fill="#808598"/><rect x="363" y="58" width="15" height="13" fill="#808598"/><rect x="379" y="58" width="15" height="13" fill="#808598"/><rect x="395" y="58" width="15" height="13" fill="#808598"/><rect x="411" y="58" width="15" height="13" fill="#808598"/><rect x="427" y="58" width="15" height="13" fill="#808598"/><rect x="443" y="58" width="15" height="13" fill="#808598"/><rect x="459" y="58" width="15" height="13" fill="#808598"/><rect x="475" y="58" width="15" height="13" fill="#808598"/><rect x="491" y="58" width="15" height="13" fill="#808598"/><rect x="507" y="58" width="15" height="13" fill="#808598"/><rect x="523" y="58" width="15" height="13" fill="#808598"/><rect x="539" y="58" width="15" height="13" fill="#808598"/><rect x="555" y="58" width="15" height="13" fill="#61a6fa"/><rect x="571" y="58" width="15" height="13" fill="#808598"/><rect x="587" y="58" width="15" height="13" fill="#61a6fa"/><rect x="603" y="58" width="15" height="13" fill="#808598"/><rect x="619" y="58" width="15" height="13" fill="#61a6fa"/><rect x="635" y="58" width="15" height="13" fill="#808598"/><rect x="651" y="58" width="15" height="13" fill="#61a6fa"/><rect x="667" y="58" width="15" height="13" fill="#808598"/><rect x="683" y="58" width="15" height="13" fill="#808598"/><rect x="699" y="58" width="15" height="13" fill="#808598"/><rect x="715" y="58" width="15" height="13" fill="#808598"/><rect x="731" y="58" width="15" height="13" fill="#808598"/><rect x="747" y="58" width="15" height="13" fill="#808598"/><rect x="763" y="58" width="15" height="13" fill="#808598"/><rect x="779" y="58" width="15" height="13" fill="#808598"/><rect x="795" y="58" width="15" height="13" fill="#808598"/><rect x="811" y="58" width="15" height="13" fill="#808598"/><rect x="827" y="58" width="15" height="13" fill="#808598"/><rect x="843" y="58" width="15" height="13" fill="#808598"/><rect x="859" y="58" width="2" height="13" fill="#808598"/><rect x="0" y="76" width="10" height="13" fill="#808598"/><rect x="11" y="76" width="15" height="13" fill="#61a6fa"/><rect x="27" y="76" width="15" height="13" fill="#808598"/><rect x="43" y="76" width="15" height="13" fill="#808598"/><rect x="59" y="76" width="15" height="13" fill="#808598"/><rect x="75" y="76" width="15" height="13" fill="#808598"/><rect x="91" y="76" width="15" height="13" fill="#808598"/><rect x="107" y="76" width="15" height="13" fill="#808598"/><rect x="123" y="76" width="15" height="13" fill="#808598"/><rect x="139" y="76" width="15" height="13" fill="#808598"/><rect x="155" y="76" width="15" height="13" fill="#808598"/><rect x="171" y="76" width="15" height="13" fill="#808598"/><rect x="187" y="76" width="15" height="13" fill="#808598"/><rect x="203" y="76" width="15" height="13" fill="#808598"/><rect x="219" y="76" width="15" height="13" fill="#808598"/><rect x="235" y="76" width="15" height="13" fill="#808598"/><rect x="251" y="76" width="15" height="13" fill="#808598"/><rect x="267" y="76" width="15" height="13" fill="#808598"/><rect x="283" y="76" width="15" height="13" fill="#808598"/><rect x="299" y="76" width="15" height="13" fill="#808598"/><rect x="315" y="76" width="15" height="13" fill="#808598"/><rect x="331" y="76" width="15" height="13" fill="#808598"/><rect x="347" y="76" width="15" height="13" fill="#808598"/><rect x="363" y="76" width="15" height="13" fill="#808598"/><rect x="379" y="76" width="15" height="13" fill="#808598"/><rect x="395" y="76" width="15" height="13" fill="#808598"/><rect x="411" y="76" width="15" height="13" fill="#808598"/><rect x="427" y="76" width="15" height="13" fill="#808598"/><rect x="443" y="76" width="15" height="13" fill="#808598"/><rect x="459" y="76" width="15" height="13" fill="#808598"/><rect x="475" y="76" width="15" height="13" fill="#808598"/><rect x="491" y="76" width="15" height="13" fill="#808598"/><rect x="507" y="76" width="15" height="13" fill="#808598"/><rect x="523" y="76" width="15" height="13" fill="#808598"/><rect x="539" y="76" width="15" height="13" fill="#808598"/><rect x="555" y="76" width="15" height="13" fill="#808598"/><rect x="571" y="76" width="15" height="13" fill="#808598"/><rect x="587" y="76" width="15" height="13" fill="#808598"/><rect x="603" y="76" width="15" height="13" fill="#808598"/><rect x="619" y="76" width="15" height="13" fill="#808598"/><rect x="635" y="76" width="15" height="13" fill="#808598"/><rect x="651" y="76" width="15" height="13" fill="#808598"/><rect x="667" y="76" width="15" height="13" fill="#808598"/><rect x="683" y="76" width="15" height="13" fill="#808598"/><rect x="699" y="76" width="15" height="13" fill="#808598"/><rect x="715" y="76" width="15" height="13" fill="#808598"/><rect x="731" y="76" width="15" height="13" fill="#808598"/><rect x="747" y="76" width="15" height="13" fill="#808598"/><rect x="763" y="76" width="15" height="13" fill="#808598"/><rect x="779" y="76" width="15" height="13" fill="#808598"/><rect x="795" y="76" width="15" height="13" fill="#808598"/><rect x="811" y="76" width="15" height="13" fill="#808598"/><rect x="827" y="76" width="15" height="13" fill="#808598"/><rect x="843" y="76" width="15" height="13" fill="#808598"/><rect x="859" y="76" width="2" height="13" fill="#808598"/><rect x="0" y="18" width="861" height="3" fill="#646879"/><rect x="0" y="36" width="861" height="3" fill="#646879"/><rect x="0" y="54" width="861" height="3" fill="#646879"/><rect x="0" y="72" width="861" height="3" fill="#646879"/></svg>
<div style="left:210px;top:253px;width:861px;height:17px;background-color:#4c505e;background-image:repeating-conic-gradient(#5a5e6e 0 25%,#454956 0 50%);background-size:2px 2px;"></div>
<div style="left:211px;top:254px;width:14px;height:15px;background:linear-gradient(#666b7d,#4d5161);border:1px solid #2a2c36;border-radius:2px;box-shadow:inset 1px 1px 0 #8a8fa2;"></div>
<svg style="left:211px;top:254px;" width="14" height="15" viewBox="0 0 14 15"><path d="M9.5 3.5 L9.5 11.5 L4.0 7.5z" fill="#fff"/></svg>
<div style="left:226px;top:254px;width:104px;height:15px;background:linear-gradient(#6d7286,#545869);border:1px solid #2a2c36;border-radius:2px;box-shadow:inset 1px 1px 0 #8a8fa2;"></div>
<svg style="left:269px;top:258px;" width="18" height="9" viewBox="0 0 18 9"><rect x="0" y="0" width="1.3" height="1.3" fill="#2b2d38"/><rect x="3" y="0" width="1.3" height="1.3" fill="#2b2d38"/><rect x="6" y="0" width="1.3" height="1.3" fill="#2b2d38"/><rect x="9" y="0" width="1.3" height="1.3" fill="#2b2d38"/><rect x="12" y="0" width="1.3" height="1.3" fill="#2b2d38"/><rect x="15" y="0" width="1.3" height="1.3" fill="#2b2d38"/><rect x="0" y="3" width="1.3" height="1.3" fill="#2b2d38"/><rect x="3" y="3" width="1.3" height="1.3" fill="#2b2d38"/><rect x="6" y="3" width="1.3" height="1.3" fill="#2b2d38"/><rect x="9" y="3" width="1.3" height="1.3" fill="#2b2d38"/><rect x="12" y="3" width="1.3" height="1.3" fill="#2b2d38"/><rect x="15" y="3" width="1.3" height="1.3" fill="#2b2d38"/><rect x="0" y="6" width="1.3" height="1.3" fill="#2b2d38"/><rect x="3" y="6" width="1.3" height="1.3" fill="#2b2d38"/><rect x="6" y="6" width="1.3" height="1.3" fill="#2b2d38"/><rect x="9" y="6" width="1.3" height="1.3" fill="#2b2d38"/><rect x="12" y="6" width="1.3" height="1.3" fill="#2b2d38"/><rect x="15" y="6" width="1.3" height="1.3" fill="#2b2d38"/></svg>
<div style="left:1002px;top:254px;width:14px;height:14px;background:linear-gradient(#666b7d,#4d5161);border:1px solid #2a2c36;border-radius:2px;box-shadow:inset 1px 1px 0 #8a8fa2;"></div>
<svg style="left:1002px;top:254px;" width="14" height="14" viewBox="0 0 14 14"><path d="M9.5 3.0 L9.5 11.0 L4.0 7.0z" fill="#fff"/></svg>
<div style="left:1017px;top:254px;width:15px;height:14px;background:linear-gradient(#666b7d,#4d5161);border:1px solid #2a2c36;border-radius:2px;box-shadow:inset 1px 1px 0 #8a8fa2;"></div>
<svg style="left:1017px;top:254px;" width="15" height="14" viewBox="0 0 15 14"><path d="M5.0 3.0 L5.0 11.0 L10.5 7.0z" fill="#fff"/></svg>
<div class="btn" style="left:1034px;top:254px;width:17px;height:12px;border-color:#15161b;"></div>
<svg style="left:1034px;top:254px;" width="17" height="12" viewBox="0 0 17 12"><path d="M5 6h7.5M8.75 2.5v7" stroke="#000" stroke-width="1.4"/></svg>
<div class="btn" style="left:1053px;top:254px;width:18px;height:12px;border-color:#15161b;"></div>
<svg style="left:1053px;top:254px;" width="18" height="12" viewBox="0 0 18 12"><path d="M5 6h8" stroke="#000" stroke-width="1.4"/></svg>
<div style="left:1072px;top:163px;width:14px;height:90px;background-color:#4c505e;background-image:repeating-conic-gradient(#5a5e6e 0 25%,#454956 0 50%);background-size:2px 2px;"></div>
<div style="left:1072px;top:164px;width:14px;height:15px;background:linear-gradient(#666b7d,#4d5161);border:1px solid #2a2c36;border-radius:2px;box-shadow:inset 1px 1px 0 #8a8fa2;"></div>
<svg style="left:1072px;top:164px;" width="14" height="15" viewBox="0 0 14 15"><path d="M3.0 9.5 L11.0 9.5 L7.0 5.0z" fill="#fff"/></svg>
<div style="left:1072px;top:179px;width:14px;height:25px;background:linear-gradient(90deg,#6d7286,#545869);border:1px solid #2a2c36;border-radius:2px;box-shadow:inset 1px 1px 0 #8a8fa2;"></div>
<div style="left:1072px;top:222px;width:14px;height:14px;background:linear-gradient(#666b7d,#4d5161);border:1px solid #2a2c36;border-radius:2px;box-shadow:inset 1px 1px 0 #8a8fa2;"></div>
<svg style="left:1072px;top:222px;" width="14" height="14" viewBox="0 0 14 14"><path d="M3.0 9.0 L11.0 9.0 L7.0 4.5z" fill="#fff"/></svg>
<div style="left:1072px;top:237px;width:14px;height:15px;background:linear-gradient(#666b7d,#4d5161);border:1px solid #2a2c36;border-radius:2px;box-shadow:inset 1px 1px 0 #8a8fa2;"></div>
<svg style="left:1072px;top:237px;" width="14" height="15" viewBox="0 0 14 15"><path d="M3.0 5.5 L11.0 5.5 L7.0 10.0z" fill="#fff"/></svg>
<svg style="left:370px;top:272px;" width="352" height="2" viewBox="0 0 352 2"><rect x="0" y="0" width="2" height="1.5" fill="#8a8fa0"/><rect x="4" y="0" width="2" height="1.5" fill="#8a8fa0"/><rect x="8" y="0" width="2" height="1.5" fill="#8a8fa0"/><rect x="12" y="0" width="2" height="1.5" fill="#8a8fa0"/><rect x="16" y="0" width="2" height="1.5" fill="#8a8fa0"/><rect x="20" y="0" width="2" height="1.5" fill="#8a8fa0"/><rect x="24" y="0" width="2" height="1.5" fill="#8a8fa0"/><rect x="28" y="0" width="2" height="1.5" fill="#8a8fa0"/><rect x="32" y="0" width="2" height="1.5" fill="#8a8fa0"/><rect x="36" y="0" width="2" height="1.5" fill="#8a8fa0"/><rect x="40" y="0" width="2" height="1.5" fill="#8a8fa0"/><rect x="44" y="0" width="2" height="1.5" fill="#8a8fa0"/><rect x="48" y="0" width="2" height="1.5" fill="#8a8fa0"/><rect x="52" y="0" width="2" height="1.5" fill="#8a8fa0"/><rect x="56" y="0" width="2" height="1.5" fill="#8a8fa0"/><rect x="60" y="0" width="2" height="1.5" fill="#8a8fa0"/><rect x="64" y="0" width="2" height="1.5" fill="#8a8fa0"/><rect x="68" y="0" width="2" height="1.5" fill="#8a8fa0"/><rect x="72" y="0" width="2" height="1.5" fill="#8a8fa0"/><rect x="76" y="0" width="2" height="1.5" fill="#8a8fa0"/><rect x="80" y="0" width="2" height="1.5" fill="#8a8fa0"/><rect x="84" y="0" width="2" height="1.5" fill="#8a8fa0"/><rect x="88" y="0" width="2" height="1.5" fill="#8a8fa0"/><rect x="92" y="0" width="2" height="1.5" fill="#8a8fa0"/><rect x="96" y="0" width="2" height="1.5" fill="#8a8fa0"/><rect x="100" y="0" width="2" height="1.5" fill="#8a8fa0"/><rect x="104" y="0" width="2" height="1.5" fill="#8a8fa0"/><rect x="108" y="0" width="2" height="1.5" fill="#8a8fa0"/><rect x="112" y="0" width="2" height="1.5" fill="#8a8fa0"/><rect x="116" y="0" width="2" height="1.5" fill="#8a8fa0"/><rect x="120" y="0" width="2" height="1.5" fill="#8a8fa0"/><rect x="124" y="0" width="2" height="1.5" fill="#8a8fa0"/><rect x="128" y="0" width="2" height="1.5" fill="#8a8fa0"/><rect x="132" y="0" width="2" height="1.5" fill="#8a8fa0"/><rect x="136" y="0" width="2" height="1.5" fill="#8a8fa0"/><rect x="140" y="0" width="2" height="1.5" fill="#8a8fa0"/><rect x="144" y="0" width="2" height="1.5" fill="#8a8fa0"/><rect x="148" y="0" width="2" height="1.5" fill="#8a8fa0"/><rect x="152" y="0" width="2" height="1.5" fill="#8a8fa0"/><rect x="156" y="0" width="2" height="1.5" fill="#8a8fa0"/><rect x="160" y="0" width="2" height="1.5" fill="#8a8fa0"/><rect x="164" y="0" width="2" height="1.5" fill="#8a8fa0"/><rect x="168" y="0" width="2" height="1.5" fill="#8a8fa0"/><rect x="172" y="0" width="2" height="1.5" fill="#8a8fa0"/><rect x="176" y="0" width="2" height="1.5" fill="#8a8fa0"/><rect x="180" y="0" width="2" height="1.5" fill="#8a8fa0"/><rect x="184" y="0" width="2" height="1.5" fill="#8a8fa0"/><rect x="188" y="0" width="2" height="1.5" fill="#8a8fa0"/><rect x="192" y="0" width="2" height="1.5" fill="#8a8fa0"/><rect x="196" y="0" width="2" height="1.5" fill="#8a8fa0"/><rect x="200" y="0" width="2" height="1.5" fill="#8a8fa0"/><rect x="204" y="0" width="2" height="1.5" fill="#8a8fa0"/><rect x="208" y="0" width="2" height="1.5" fill="#8a8fa0"/><rect x="212" y="0" width="2" height="1.5" fill="#8a8fa0"/><rect x="216" y="0" width="2" height="1.5" fill="#8a8fa0"/><rect x="220" y="0" width="2" height="1.5" fill="#8a8fa0"/><rect x="224" y="0" width="2" height="1.5" fill="#8a8fa0"/><rect x="228" y="0" width="2" height="1.5" fill="#8a8fa0"/><rect x="232" y="0" width="2" height="1.5" fill="#8a8fa0"/><rect x="236" y="0" width="2" height="1.5" fill="#8a8fa0"/><rect x="240" y="0" width="2" height="1.5" fill="#8a8fa0"/><rect x="244" y="0" width="2" height="1.5" fill="#8a8fa0"/><rect x="248" y="0" width="2" height="1.5" fill="#8a8fa0"/><rect x="252" y="0" width="2" height="1.5" fill="#8a8fa0"/><rect x="256" y="0" width="2" height="1.5" fill="#8a8fa0"/><rect x="260" y="0" width="2" height="1.5" fill="#8a8fa0"/><rect x="264" y="0" width="2" height="1.5" fill="#8a8fa0"/><rect x="268" y="0" width="2" height="1.5" fill="#8a8fa0"/><rect x="272" y="0" width="2" height="1.5" fill="#8a8fa0"/><rect x="276" y="0" width="2" height="1.5" fill="#8a8fa0"/><rect x="280" y="0" width="2" height="1.5" fill="#8a8fa0"/><rect x="284" y="0" width="2" height="1.5" fill="#8a8fa0"/><rect x="288" y="0" width="2" height="1.5" fill="#8a8fa0"/><rect x="292" y="0" width="2" height="1.5" fill="#8a8fa0"/><rect x="296" y="0" width="2" height="1.5" fill="#8a8fa0"/><rect x="300" y="0" width="2" height="1.5" fill="#8a8fa0"/><rect x="304" y="0" width="2" height="1.5" fill="#8a8fa0"/><rect x="308" y="0" width="2" height="1.5" fill="#8a8fa0"/><rect x="312" y="0" width="2" height="1.5" fill="#8a8fa0"/><rect x="316" y="0" width="2" height="1.5" fill="#8a8fa0"/><rect x="320" y="0" width="2" height="1.5" fill="#8a8fa0"/><rect x="324" y="0" width="2" height="1.5" fill="#8a8fa0"/><rect x="328" y="0" width="2" height="1.5" fill="#8a8fa0"/><rect x="332" y="0" width="2" height="1.5" fill="#8a8fa0"/><rect x="336" y="0" width="2" height="1.5" fill="#8a8fa0"/><rect x="340" y="0" width="2" height="1.5" fill="#8a8fa0"/><rect x="344" y="0" width="2" height="1.5" fill="#8a8fa0"/><rect x="348" y="0" width="2" height="1.5" fill="#8a8fa0"/></svg>
<div style="left:10px;top:275px;width:1077px;height:419px;background:#3a3d4a;"></div>
<div style="left:10px;top:275px;width:180px;height:24px;background:linear-gradient(#606a7e,#4b5467);border-top:1px solid #737c90;border-radius:0 3px 0 0;"></div>
<div class="t" style="left:10px;top:279px;font-size:14.5px;color:#fff;letter-spacing:0.8px;">Darthvim_V2.5_44,1kH</div>
<div class="t" style="left:10px;top:304px;font-size:14.5px;color:#fff;letter-spacing:1px;">str.1</div>
<div style="left:191px;top:275px;width:602px;height:24px;background:linear-gradient(#5f6476,#4c5161);border-top:1px solid #6f7488;border-right:1px solid #6f7488;"></div>
<div style="left:191px;top:277px;width:198px;height:19px;background:#8287a0;border:1px solid #24262e;border-radius:2px;"></div>
<div class="t" style="left:202px;top:281px;font-size:9.5px;font-weight:bold;color:#0a0a0a;letter-spacing:0.5px;">SIZE</div>
<div style="left:227px;top:280px;width:33px;height:13px;background:#5e9ff0;background-image:repeating-linear-gradient(90deg,rgba(150,195,255,0.6) 0 1px,transparent 1px 8px);background-position:-0.5px 0;overflow:hidden;"><div class="lcd" style="left:1px;right:1px;top:0.5px;font-size:13px;letter-spacing:0px;text-align:right">8</div></div>
<div class="btn" style="left:263px;top:280px;width:12px;height:13px;"></div>
<svg style="left:263px;top:280px;" width="12" height="13" viewBox="0 0 12 13"><path d="M2.5 5.0 L9.5 5.0 L6.0 9.0z" fill="#000"/></svg>
<div class="t" style="left:291px;top:281px;font-size:9.5px;font-weight:bold;color:#0a0a0a;letter-spacing:0.5px;">RES.</div>
<div style="left:314px;top:280px;width:57px;height:13px;background:#5e9ff0;background-image:repeating-linear-gradient(90deg,rgba(150,195,255,0.6) 0 1px,transparent 1px 8px);background-position:-0.5px 0;overflow:hidden;"><div class="lcd" style="left:1px;right:1px;top:0.5px;font-size:13px;letter-spacing:0px;text-align:right">32</div></div>
<div class="btn" style="left:374px;top:280px;width:12px;height:13px;"></div>
<svg style="left:374px;top:280px;" width="12" height="13" viewBox="0 0 12 13"><path d="M2.5 5.0 L9.5 5.0 L6.0 9.0z" fill="#000"/></svg>
<div style="left:391px;top:277px;width:109px;height:19px;background:#8287a0;border:1px solid #24262e;border-radius:2px;"></div>
<div class="t" style="left:396px;top:281px;font-size:9.5px;font-weight:bold;color:#0a0a0a;letter-spacing:0.6px;">HEAR</div>
<div class="bbtn" style="left:425px;top:279px;width:14px;height:13px;"></div>
<svg style="left:425px;top:279px;" width="14" height="13" viewBox="0 0 14 13"><path d="M3 5h2l3-2.5v8L5 8H3z" fill="#0a1a40"/><path d="M10 4.5v4M11.8 3.5v6" stroke="#0a1a40" stroke-width="1"/></svg>
<div class="t" style="left:444.5px;top:281px;font-size:9.5px;font-weight:bold;color:#0a0a0a;letter-spacing:0.55px;">QUANT</div>
<div class="bbtn" style="left:482px;top:279px;width:14px;height:13px;"></div>
<svg style="left:482px;top:279px;" width="14" height="13" viewBox="0 0 14 13"><path d="M3 3.5h8v6h-8zM3 6.5h8M5.7 3.5v6M8.4 3.5v6" fill="none" stroke="#0a1a40" stroke-width="1"/></svg>
<div style="left:502px;top:277px;width:98px;height:20px;background:linear-gradient(#5d6274,#4d5263);border:1px solid #7b8094;border-radius:3px;"></div>
<div style="left:583px;top:278px;width:1px;height:18px;background:#7b8094;"></div>
<svg style="left:584px;top:277px;" width="16" height="20" viewBox="0 0 16 20"><path d="M3.5 8.5h8l-4 4.5z" fill="#fff"/></svg>
<div class="t" style="left:507px;top:279px;font-size:14.5px;color:#f0f0f0;letter-spacing:0.3px;">drumset</div>
<div style="left:602px;top:277px;width:98px;height:20px;background:linear-gradient(#5d6274,#4d5263);border:1px solid #7b8094;border-radius:3px;"></div>
<div style="left:683px;top:278px;width:1px;height:18px;background:#7b8094;"></div>
<svg style="left:684px;top:277px;" width="16" height="20" viewBox="0 0 16 20"><path d="M3.5 8.5h8l-4 4.5z" fill="#fff"/></svg>
<div class="t" style="left:607px;top:279px;font-size:14.5px;color:#f0f0f0;letter-spacing:0.3px;">note length</div>
<div style="left:702px;top:278px;width:47px;height:16px;background:linear-gradient(#b8bed0,#8d93aa);border:1px solid #9fa5ba;"><div class="t" style="left:0;width:45px;text-align:center;top:0px;font-weight:bold;font-size:13.5px;color:#0a0a0a;letter-spacing:0.3px">Piano</div></div>
<div style="left:191px;top:299px;width:585px;height:25px;background:#a7a8a0;border-top:1px solid #f0f0ec;"></div>
<div style="left:191px;top:323px;width:585px;height:1px;background:#f6f6f2;"></div>
<div class="t" style="left:201px;width:20px;text-align:center;top:305px;font-size:13px;color:#5a5a5a;">1</div>
<div class="t" style="left:345px;width:20px;text-align:center;top:305px;font-size:13px;color:#5a5a5a;">2</div>
<div class="t" style="left:489px;width:20px;text-align:center;top:305px;font-size:13px;color:#5a5a5a;">3</div>
<div class="t" style="left:633px;width:20px;text-align:center;top:305px;font-size:13px;color:#5a5a5a;">4</div>
<svg style="left:191px;top:299px;" width="585" height="25" viewBox="0 0 585 25"><path d="M56.5 11v4" stroke="#b4b5ae" stroke-width="1"/><path d="M92.5 11v4" stroke="#b4b5ae" stroke-width="1"/><path d="M128.5 11v4" stroke="#b4b5ae" stroke-width="1"/><path d="M200.5 11v4" stroke="#b4b5ae" stroke-width="1"/><path d="M236.5 11v4" stroke="#b4b5ae" stroke-width="1"/><path d="M272.5 11v4" stroke="#b4b5ae" stroke-width="1"/><path d="M344.5 11v4" stroke="#b4b5ae" stroke-width="1"/><path d="M380.5 11v4" stroke="#b4b5ae" stroke-width="1"/><path d="M416.5 11v4" stroke="#b4b5ae" stroke-width="1"/><path d="M488.5 11v4" stroke="#b4b5ae" stroke-width="1"/><path d="M524.5 11v4" stroke="#b4b5ae" stroke-width="1"/><path d="M560.5 11v4" stroke="#b4b5ae" stroke-width="1"/></svg>
<div style="left:10px;top:324px;width:180px;height:20px;background:linear-gradient(90deg,#787d96,#969bb4 18%,#b9bed4 46%,#a6abc2 70%,#858aa3);border-radius:3px;box-shadow:inset 0 1px 0 rgba(255,255,255,0.25),inset 0 -1px 0 rgba(0,0,0,0.25);"></div>
<div class="t" style="left:20px;top:328px;font-weight:bold;font-size:14px;color:#fff;letter-spacing:0.55px;text-shadow:0 1px 1px rgba(0,0,0,0.35);">Kick</div>
<div style="left:165px;top:329px;width:8px;height:8px;background:#f2b07c;border:1px solid #a8754c;border-radius:1.5px;"></div>
<div style="left:175px;top:329px;width:8px;height:8px;background:#86e07e;border:1px solid #4c9a4a;border-radius:1.5px;"></div>
<div style="left:10px;top:345px;width:180px;height:20px;background:linear-gradient(90deg,#787d96,#969bb4 18%,#b9bed4 46%,#a6abc2 70%,#858aa3);border-radius:3px;box-shadow:inset 0 1px 0 rgba(255,255,255,0.25),inset 0 -1px 0 rgba(0,0,0,0.25);"></div>
<div class="t" style="left:20px;top:349px;font-weight:bold;font-size:14px;color:#fff;letter-spacing:0.55px;text-shadow:0 1px 1px rgba(0,0,0,0.35);">Stick</div>
<div style="left:165px;top:350px;width:8px;height:8px;background:#f2b07c;border:1px solid #a8754c;border-radius:1.5px;"></div>
<div style="left:175px;top:350px;width:8px;height:8px;background:#86e07e;border:1px solid #4c9a4a;border-radius:1.5px;"></div>
<div style="left:10px;top:366px;width:180px;height:20px;background:linear-gradient(90deg,#787d96,#969bb4 18%,#b9bed4 46%,#a6abc2 70%,#858aa3);border-radius:3px;box-shadow:inset 0 1px 0 rgba(255,255,255,0.25),inset 0 -1px 0 rgba(0,0,0,0.25);"></div>
<div class="t" style="left:20px;top:370px;font-weight:bold;font-size:14px;color:#fff;letter-spacing:0.55px;text-shadow:0 1px 1px rgba(0,0,0,0.35);">Snare Rock</div>
<div style="left:165px;top:371px;width:8px;height:8px;background:#f2b07c;border:1px solid #a8754c;border-radius:1.5px;"></div>
<div style="left:175px;top:371px;width:8px;height:8px;background:#86e07e;border:1px solid #4c9a4a;border-radius:1.5px;"></div>
<div style="left:10px;top:387px;width:180px;height:20px;background:linear-gradient(90deg,#787d96,#969bb4 18%,#b9bed4 46%,#a6abc2 70%,#858aa3);border-radius:3px;box-shadow:inset 0 1px 0 rgba(255,255,255,0.25),inset 0 -1px 0 rgba(0,0,0,0.25);"></div>
<div class="t" style="left:20px;top:391px;font-weight:bold;font-size:14px;color:#fff;letter-spacing:0.55px;text-shadow:0 1px 1px rgba(0,0,0,0.35);">Snare Rimshot</div>
<div style="left:165px;top:392px;width:8px;height:8px;background:#f2b07c;border:1px solid #a8754c;border-radius:1.5px;"></div>
<div style="left:175px;top:392px;width:8px;height:8px;background:#86e07e;border:1px solid #4c9a4a;border-radius:1.5px;"></div>
<div style="left:10px;top:408px;width:180px;height:20px;background:linear-gradient(90deg,#787d96,#969bb4 18%,#b9bed4 46%,#a6abc2 70%,#858aa3);border-radius:3px;box-shadow:inset 0 1px 0 rgba(255,255,255,0.25),inset 0 -1px 0 rgba(0,0,0,0.25);"></div>
<div class="t" style="left:20px;top:412px;font-weight:bold;font-size:14px;color:#fff;letter-spacing:0.55px;text-shadow:0 1px 1px rgba(0,0,0,0.35);">Snare Jazz</div>
<div style="left:165px;top:413px;width:8px;height:8px;background:#f2b07c;border:1px solid #a8754c;border-radius:1.5px;"></div>
<div style="left:175px;top:413px;width:8px;height:8px;background:#86e07e;border:1px solid #4c9a4a;border-radius:1.5px;"></div>
<div style="left:10px;top:429px;width:180px;height:20px;background:linear-gradient(90deg,#787d96,#969bb4 18%,#b9bed4 46%,#a6abc2 70%,#858aa3);border-radius:3px;box-shadow:inset 0 1px 0 rgba(255,255,255,0.25),inset 0 -1px 0 rgba(0,0,0,0.25);"></div>
<div class="t" style="left:20px;top:433px;font-weight:bold;font-size:14px;color:#fff;letter-spacing:0.55px;text-shadow:0 1px 1px rgba(0,0,0,0.35);">HH Tip</div>
<div style="left:165px;top:434px;width:8px;height:8px;background:#f2b07c;border:1px solid #a8754c;border-radius:1.5px;"></div>
<div style="left:175px;top:434px;width:8px;height:8px;background:#86e07e;border:1px solid #4c9a4a;border-radius:1.5px;"></div>
<div style="left:10px;top:450px;width:180px;height:20px;background:linear-gradient(90deg,#787d96,#969bb4 18%,#b9bed4 46%,#a6abc2 70%,#858aa3);border-radius:3px;box-shadow:inset 0 1px 0 rgba(255,255,255,0.25),inset 0 -1px 0 rgba(0,0,0,0.25);"></div>
<div class="t" style="left:20px;top:454px;font-weight:bold;font-size:14px;color:#fff;letter-spacing:0.55px;text-shadow:0 1px 1px rgba(0,0,0,0.35);">HH Shoulder</div>
<div style="left:165px;top:455px;width:8px;height:8px;background:#f2b07c;border:1px solid #a8754c;border-radius:1.5px;"></div>
<div style="left:175px;top:455px;width:8px;height:8px;background:#86e07e;border:1px solid #4c9a4a;border-radius:1.5px;"></div>
<div style="left:10px;top:471px;width:180px;height:20px;background:linear-gradient(90deg,#787d96,#969bb4 18%,#b9bed4 46%,#a6abc2 70%,#858aa3);border-radius:3px;box-shadow:inset 0 1px 0 rgba(255,255,255,0.25),inset 0 -1px 0 rgba(0,0,0,0.25);"></div>
<div class="t" style="left:20px;top:475px;font-weight:bold;font-size:14px;color:#fff;letter-spacing:0.55px;text-shadow:0 1px 1px rgba(0,0,0,0.35);">HH Closing</div>
<div style="left:165px;top:476px;width:8px;height:8px;background:#f2b07c;border:1px solid #a8754c;border-radius:1.5px;"></div>
<div style="left:175px;top:476px;width:8px;height:8px;background:#86e07e;border:1px solid #4c9a4a;border-radius:1.5px;"></div>
<div style="left:10px;top:492px;width:180px;height:20px;background:linear-gradient(90deg,#787d96,#969bb4 18%,#b9bed4 46%,#a6abc2 70%,#858aa3);border-radius:3px;box-shadow:inset 0 1px 0 rgba(255,255,255,0.25),inset 0 -1px 0 rgba(0,0,0,0.25);"></div>
<div class="t" style="left:20px;top:496px;font-weight:bold;font-size:14px;color:#fff;letter-spacing:0.55px;text-shadow:0 1px 1px rgba(0,0,0,0.35);">HH Opened</div>
<div style="left:165px;top:497px;width:8px;height:8px;background:#f2b07c;border:1px solid #a8754c;border-radius:1.5px;"></div>
<div style="left:175px;top:497px;width:8px;height:8px;background:#86e07e;border:1px solid #4c9a4a;border-radius:1.5px;"></div>
<div style="left:10px;top:513px;width:180px;height:20px;background:#cfd0c7;border-radius:3px;"></div>
<div class="t" style="left:20px;top:517px;font-weight:bold;font-size:14px;color:#fff;letter-spacing:0.55px;text-shadow:0 1px 1px rgba(0,0,0,0.35);">Tom Low</div>
<div style="left:165px;top:518px;width:8px;height:8px;background:#f2b07c;border:1px solid #a8754c;border-radius:1.5px;"></div>
<div style="left:175px;top:518px;width:8px;height:8px;background:#86e07e;border:1px solid #4c9a4a;border-radius:1.5px;"></div>
<div style="left:10px;top:534px;width:180px;height:20px;background:linear-gradient(90deg,#787d96,#969bb4 18%,#b9bed4 46%,#a6abc2 70%,#858aa3);border-radius:3px;box-shadow:inset 0 1px 0 rgba(255,255,255,0.25),inset 0 -1px 0 rgba(0,0,0,0.25);"></div>
<div class="t" style="left:20px;top:538px;font-weight:bold;font-size:14px;color:#fff;letter-spacing:0.55px;text-shadow:0 1px 1px rgba(0,0,0,0.35);">Tom Mid</div>
<div style="left:165px;top:539px;width:8px;height:8px;background:#f2b07c;border:1px solid #a8754c;border-radius:1.5px;"></div>
<div style="left:175px;top:539px;width:8px;height:8px;background:#86e07e;border:1px solid #4c9a4a;border-radius:1.5px;"></div>
<div style="left:10px;top:555px;width:180px;height:20px;background:linear-gradient(90deg,#787d96,#969bb4 18%,#b9bed4 46%,#a6abc2 70%,#858aa3);border-radius:3px;box-shadow:inset 0 1px 0 rgba(255,255,255,0.25),inset 0 -1px 0 rgba(0,0,0,0.25);"></div>
<div class="t" style="left:20px;top:559px;font-weight:bold;font-size:14px;color:#fff;letter-spacing:0.55px;text-shadow:0 1px 1px rgba(0,0,0,0.35);">Tom Hi</div>
<div style="left:165px;top:560px;width:8px;height:8px;background:#f2b07c;border:1px solid #a8754c;border-radius:1.5px;"></div>
<div style="left:175px;top:560px;width:8px;height:8px;background:#86e07e;border:1px solid #4c9a4a;border-radius:1.5px;"></div>
<div style="left:10px;top:576px;width:181px;height:2px;background:#9096aa;"></div>
<svg style="left:191px;top:324px;" width="585" height="253" viewBox="0 0 585 253"><rect x="0" y="0" width="586" height="253" fill="#a7a8a0"/><rect x="0" y="190" width="586" height="20" fill="#d0d1c8"/><rect x="0" y="21" width="586" height="1" fill="#4a4b46"/><rect x="20" y="15" width="1" height="6" fill="#4a4b46"/><rect x="38" y="15" width="1" height="6" fill="#4a4b46"/><rect x="56" y="15" width="1" height="6" fill="#4a4b46"/><rect x="74" y="15" width="1" height="6" fill="#4a4b46"/><rect x="92" y="15" width="1" height="6" fill="#4a4b46"/><rect x="110" y="15" width="1" height="6" fill="#4a4b46"/><rect x="128" y="15" width="1" height="6" fill="#4a4b46"/><rect x="146" y="15" width="1" height="6" fill="#4a4b46"/><rect x="164" y="15" width="1" height="6" fill="#4a4b46"/><rect x="182" y="15" width="1" height="6" fill="#4a4b46"/><rect x="200" y="15" width="1" height="6" fill="#4a4b46"/><rect x="218" y="15" width="1" height="6" fill="#4a4b46"/><rect x="236" y="15" width="1" height="6" fill="#4a4b46"/><rect x="254" y="15" width="1" height="6" fill="#4a4b46"/><rect x="272" y="15" width="1" height="6" fill="#4a4b46"/><rect x="290" y="15" width="1" height="6" fill="#4a4b46"/><rect x="308" y="15" width="1" height="6" fill="#4a4b46"/><rect x="326" y="15" width="1" height="6" fill="#4a4b46"/><rect x="344" y="15" width="1" height="6" fill="#4a4b46"/><rect x="362" y="15" width="1" height="6" fill="#4a4b46"/><rect x="380" y="15" width="1" height="6" fill="#4a4b46"/><rect x="398" y="15" width="1" height="6" fill="#4a4b46"/><rect x="416" y="15" width="1" height="6" fill="#4a4b46"/><rect x="434" y="15" width="1" height="6" fill="#4a4b46"/><rect x="452" y="15" width="1" height="6" fill="#4a4b46"/><rect x="470" y="15" width="1" height="6" fill="#4a4b46"/><rect x="488" y="15" width="1" height="6" fill="#4a4b46"/><rect x="506" y="15" width="1" height="6" fill="#4a4b46"/><rect x="524" y="15" width="1" height="6" fill="#4a4b46"/><rect x="542" y="15" width="1" height="6" fill="#4a4b46"/><rect x="560" y="15" width="1" height="6" fill="#4a4b46"/><rect x="578" y="15" width="1" height="6" fill="#4a4b46"/><rect x="0" y="42" width="586" height="1" fill="#4a4b46"/><rect x="20" y="36" width="1" height="6" fill="#4a4b46"/><rect x="38" y="36" width="1" height="6" fill="#4a4b46"/><rect x="56" y="36" width="1" height="6" fill="#4a4b46"/><rect x="74" y="36" width="1" height="6" fill="#4a4b46"/><rect x="92" y="36" width="1" height="6" fill="#4a4b46"/><rect x="110" y="36" width="1" height="6" fill="#4a4b46"/><rect x="128" y="36" width="1" height="6" fill="#4a4b46"/><rect x="146" y="36" width="1" height="6" fill="#4a4b46"/><rect x="164" y="36" width="1" height="6" fill="#4a4b46"/><rect x="182" y="36" width="1" height="6" fill="#4a4b46"/><rect x="200" y="36" width="1" height="6" fill="#4a4b46"/><rect x="218" y="36" width="1" height="6" fill="#4a4b46"/><rect x="236" y="36" width="1" height="6" fill="#4a4b46"/><rect x="254" y="36" width="1" height="6" fill="#4a4b46"/><rect x="272" y="36" width="1" height="6" fill="#4a4b46"/><rect x="290" y="36" width="1" height="6" fill="#4a4b46"/><rect x="308" y="36" width="1" height="6" fill="#4a4b46"/><rect x="326" y="36" width="1" height="6" fill="#4a4b46"/><rect x="344" y="36" width="1" height="6" fill="#4a4b46"/><rect x="362" y="36" width="1" height="6" fill="#4a4b46"/><rect x="380" y="36" width="1" height="6" fill="#4a4b46"/><rect x="398" y="36" width="1" height="6" fill="#4a4b46"/><rect x="416" y="36" width="1" height="6" fill="#4a4b46"/><rect x="434" y="36" width="1" height="6" fill="#4a4b46"/><rect x="452" y="36" width="1" height="6" fill="#4a4b46"/><rect x="470" y="36" width="1" height="6" fill="#4a4b46"/><rect x="488" y="36" width="1" height="6" fill="#4a4b46"/><rect x="506" y="36" width="1" height="6" fill="#4a4b46"/><rect x="524" y="36" width="1" height="6" fill="#4a4b46"/><rect x="542" y="36" width="1" height="6" fill="#4a4b46"/><rect x="560" y="36" width="1" height="6" fill="#4a4b46"/><rect x="578" y="36" width="1" height="6" fill="#4a4b46"/><rect x="0" y="63" width="586" height="1" fill="#4a4b46"/><rect x="20" y="57" width="1" height="6" fill="#4a4b46"/><rect x="38" y="57" width="1" height="6" fill="#4a4b46"/><rect x="56" y="57" width="1" height="6" fill="#4a4b46"/><rect x="74" y="57" width="1" height="6" fill="#4a4b46"/><rect x="92" y="57" width="1" height="6" fill="#4a4b46"/><rect x="110" y="57" width="1" height="6" fill="#4a4b46"/><rect x="128" y="57" width="1" height="6" fill="#4a4b46"/><rect x="146" y="57" width="1" height="6" fill="#4a4b46"/><rect x="164" y="57" width="1" height="6" fill="#4a4b46"/><rect x="182" y="57" width="1" height="6" fill="#4a4b46"/><rect x="200" y="57" width="1" height="6" fill="#4a4b46"/><rect x="218" y="57" width="1" height="6" fill="#4a4b46"/><rect x="236" y="57" width="1" height="6" fill="#4a4b46"/><rect x="254" y="57" width="1" height="6" fill="#4a4b46"/><rect x="272" y="57" width="1" height="6" fill="#4a4b46"/><rect x="290" y="57" width="1" height="6" fill="#4a4b46"/><rect x="308" y="57" width="1" height="6" fill="#4a4b46"/><rect x="326" y="57" width="1" height="6" fill="#4a4b46"/><rect x="344" y="57" width="1" height="6" fill="#4a4b46"/><rect x="362" y="57" width="1" height="6" fill="#4a4b46"/><rect x="380" y="57" width="1" height="6" fill="#4a4b46"/><rect x="398" y="57" width="1" height="6" fill="#4a4b46"/><rect x="416" y="57" width="1" height="6" fill="#4a4b46"/><rect x="434" y="57" width="1" height="6" fill="#4a4b46"/><rect x="452" y="57" width="1" height="6" fill="#4a4b46"/><rect x="470" y="57" width="1" height="6" fill="#4a4b46"/><rect x="488" y="57" width="1" height="6" fill="#4a4b46"/><rect x="506" y="57" width="1" height="6" fill="#4a4b46"/><rect x="524" y="57" width="1" height="6" fill="#4a4b46"/><rect x="542" y="57" width="1" height="6" fill="#4a4b46"/><rect x="560" y="57" width="1" height="6" fill="#4a4b46"/><rect x="578" y="57" width="1" height="6" fill="#4a4b46"/><rect x="0" y="84" width="586" height="1" fill="#4a4b46"/><rect x="20" y="78" width="1" height="6" fill="#4a4b46"/><rect x="38" y="78" width="1" height="6" fill="#4a4b46"/><rect x="56" y="78" width="1" height="6" fill="#4a4b46"/><rect x="74" y="78" width="1" height="6" fill="#4a4b46"/><rect x="92" y="78" width="1" height="6" fill="#4a4b46"/><rect x="110" y="78" width="1" height="6" fill="#4a4b46"/><rect x="128" y="78" width="1" height="6" fill="#4a4b46"/><rect x="146" y="78" width="1" height="6" fill="#4a4b46"/><rect x="164" y="78" width="1" height="6" fill="#4a4b46"/><rect x="182" y="78" width="1" height="6" fill="#4a4b46"/><rect x="200" y="78" width="1" height="6" fill="#4a4b46"/><rect x="218" y="78" width="1" height="6" fill="#4a4b46"/><rect x="236" y="78" width="1" height="6" fill="#4a4b46"/><rect x="254" y="78" width="1" height="6" fill="#4a4b46"/><rect x="272" y="78" width="1" height="6" fill="#4a4b46"/><rect x="290" y="78" width="1" height="6" fill="#4a4b46"/><rect x="308" y="78" width="1" height="6" fill="#4a4b46"/><rect x="326" y="78" width="1" height="6" fill="#4a4b46"/><rect x="344" y="78" width="1" height="6" fill="#4a4b46"/><rect x="362" y="78" width="1" height="6" fill="#4a4b46"/><rect x="380" y="78" width="1" height="6" fill="#4a4b46"/><rect x="398" y="78" width="1" height="6" fill="#4a4b46"/><rect x="416" y="78" width="1" height="6" fill="#4a4b46"/><rect x="434" y="78" width="1" height="6" fill="#4a4b46"/><rect x="452" y="78" width="1" height="6" fill="#4a4b46"/><rect x="470" y="78" width="1" height="6" fill="#4a4b46"/><rect x="488" y="78" width="1" height="6" fill="#4a4b46"/><rect x="506" y="78" width="1" height="6" fill="#4a4b46"/><rect x="524" y="78" width="1" height="6" fill="#4a4b46"/><rect x="542" y="78" width="1" height="6" fill="#4a4b46"/><rect x="560" y="78" width="1" height="6" fill="#4a4b46"/><rect x="578" y="78" width="1" height="6" fill="#4a4b46"/><rect x="0" y="105" width="586" height="1" fill="#4a4b46"/><rect x="20" y="99" width="1" height="6" fill="#4a4b46"/><rect x="38" y="99" width="1" height="6" fill="#4a4b46"/><rect x="56" y="99" width="1" height="6" fill="#4a4b46"/><rect x="74" y="99" width="1" height="6" fill="#4a4b46"/><rect x="92" y="99" width="1" height="6" fill="#4a4b46"/><rect x="110" y="99" width="1" height="6" fill="#4a4b46"/><rect x="128" y="99" width="1" height="6" fill="#4a4b46"/><rect x="146" y="99" width="1" height="6" fill="#4a4b46"/><rect x="164" y="99" width="1" height="6" fill="#4a4b46"/><rect x="182" y="99" width="1" height="6" fill="#4a4b46"/><rect x="200" y="99" width="1" height="6" fill="#4a4b46"/><rect x="218" y="99" width="1" height="6" fill="#4a4b46"/><rect x="236" y="99" width="1" height="6" fill="#4a4b46"/><rect x="254" y="99" width="1" height="6" fill="#4a4b46"/><rect x="272" y="99" width="1" height="6" fill="#4a4b46"/><rect x="290" y="99" width="1" height="6" fill="#4a4b46"/><rect x="308" y="99" width="1" height="6" fill="#4a4b46"/><rect x="326" y="99" width="1" height="6" fill="#4a4b46"/><rect x="344" y="99" width="1" height="6" fill="#4a4b46"/><rect x="362" y="99" width="1" height="6" fill="#4a4b46"/><rect x="380" y="99" width="1" height="6" fill="#4a4b46"/><rect x="398" y="99" width="1" height="6" fill="#4a4b46"/><rect x="416" y="99" width="1" height="6" fill="#4a4b46"/><rect x="434" y="99" width="1" height="6" fill="#4a4b46"/><rect x="452" y="99" width="1" height="6" fill="#4a4b46"/><rect x="470" y="99" width="1" height="6" fill="#4a4b46"/><rect x="488" y="99" width="1" height="6" fill="#4a4b46"/><rect x="506" y="99" width="1" height="6" fill="#4a4b46"/><rect x="524" y="99" width="1" height="6" fill="#4a4b46"/><rect x="542" y="99" width="1" height="6" fill="#4a4b46"/><rect x="560" y="99" width="1" height="6" fill="#4a4b46"/><rect x="578" y="99" width="1" height="6" fill="#4a4b46"/><rect x="0" y="126" width="586" height="1" fill="#4a4b46"/><rect x="20" y="120" width="1" height="6" fill="#4a4b46"/><rect x="38" y="120" width="1" height="6" fill="#4a4b46"/><rect x="56" y="120" width="1" height="6" fill="#4a4b46"/><rect x="74" y="120" width="1" height="6" fill="#4a4b46"/><rect x="92" y="120" width="1" height="6" fill="#4a4b46"/><rect x="110" y="120" width="1" height="6" fill="#4a4b46"/><rect x="128" y="120" width="1" height="6" fill="#4a4b46"/><rect x="146" y="120" width="1" height="6" fill="#4a4b46"/><rect x="164" y="120" width="1" height="6" fill="#4a4b46"/><rect x="182" y="120" width="1" height="6" fill="#4a4b46"/><rect x="200" y="120" width="1" height="6" fill="#4a4b46"/><rect x="218" y="120" width="1" height="6" fill="#4a4b46"/><rect x="236" y="120" width="1" height="6" fill="#4a4b46"/><rect x="254" y="120" width="1" height="6" fill="#4a4b46"/><rect x="272" y="120" width="1" height="6" fill="#4a4b46"/><rect x="290" y="120" width="1" height="6" fill="#4a4b46"/><rect x="308" y="120" width="1" height="6" fill="#4a4b46"/><rect x="326" y="120" width="1" height="6" fill="#4a4b46"/><rect x="344" y="120" width="1" height="6" fill="#4a4b46"/><rect x="362" y="120" width="1" height="6" fill="#4a4b46"/><rect x="380" y="120" width="1" height="6" fill="#4a4b46"/><rect x="398" y="120" width="1" height="6" fill="#4a4b46"/><rect x="416" y="120" width="1" height="6" fill="#4a4b46"/><rect x="434" y="120" width="1" height="6" fill="#4a4b46"/><rect x="452" y="120" width="1" height="6" fill="#4a4b46"/><rect x="470" y="120" width="1" height="6" fill="#4a4b46"/><rect x="488" y="120" width="1" height="6" fill="#4a4b46"/><rect x="506" y="120" width="1" height="6" fill="#4a4b46"/><rect x="524" y="120" width="1" height="6" fill="#4a4b46"/><rect x="542" y="120" width="1" height="6" fill="#4a4b46"/><rect x="560" y="120" width="1" height="6" fill="#4a4b46"/><rect x="578" y="120" width="1" height="6" fill="#4a4b46"/><rect x="0" y="147" width="586" height="1" fill="#4a4b46"/><rect x="20" y="141" width="1" height="6" fill="#4a4b46"/><rect x="38" y="141" width="1" height="6" fill="#4a4b46"/><rect x="56" y="141" width="1" height="6" fill="#4a4b46"/><rect x="74" y="141" width="1" height="6" fill="#4a4b46"/><rect x="92" y="141" width="1" height="6" fill="#4a4b46"/><rect x="110" y="141" width="1" height="6" fill="#4a4b46"/><rect x="128" y="141" width="1" height="6" fill="#4a4b46"/><rect x="146" y="141" width="1" height="6" fill="#4a4b46"/><rect x="164" y="141" width="1" height="6" fill="#4a4b46"/><rect x="182" y="141" width="1" height="6" fill="#4a4b46"/><rect x="200" y="141" width="1" height="6" fill="#4a4b46"/><rect x="218" y="141" width="1" height="6" fill="#4a4b46"/><rect x="236" y="141" width="1" height="6" fill="#4a4b46"/><rect x="254" y="141" width="1" height="6" fill="#4a4b46"/><rect x="272" y="141" width="1" height="6" fill="#4a4b46"/><rect x="290" y="141" width="1" height="6" fill="#4a4b46"/><rect x="308" y="141" width="1" height="6" fill="#4a4b46"/><rect x="326" y="141" width="1" height="6" fill="#4a4b46"/><rect x="344" y="141" width="1" height="6" fill="#4a4b46"/><rect x="362" y="141" width="1" height="6" fill="#4a4b46"/><rect x="380" y="141" width="1" height="6" fill="#4a4b46"/><rect x="398" y="141" width="1" height="6" fill="#4a4b46"/><rect x="416" y="141" width="1" height="6" fill="#4a4b46"/><rect x="434" y="141" width="1" height="6" fill="#4a4b46"/><rect x="452" y="141" width="1" height="6" fill="#4a4b46"/><rect x="470" y="141" width="1" height="6" fill="#4a4b46"/><rect x="488" y="141" width="1" height="6" fill="#4a4b46"/><rect x="506" y="141" width="1" height="6" fill="#4a4b46"/><rect x="524" y="141" width="1" height="6" fill="#4a4b46"/><rect x="542" y="141" width="1" height="6" fill="#4a4b46"/><rect x="560" y="141" width="1" height="6" fill="#4a4b46"/><rect x="578" y="141" width="1" height="6" fill="#4a4b46"/><rect x="0" y="168" width="586" height="1" fill="#4a4b46"/><rect x="20" y="162" width="1" height="6" fill="#4a4b46"/><rect x="38" y="162" width="1" height="6" fill="#4a4b46"/><rect x="56" y="162" width="1" height="6" fill="#4a4b46"/><rect x="74" y="162" width="1" height="6" fill="#4a4b46"/><rect x="92" y="162" width="1" height="6" fill="#4a4b46"/><rect x="110" y="162" width="1" height="6" fill="#4a4b46"/><rect x="128" y="162" width="1" height="6" fill="#4a4b46"/><rect x="146" y="162" width="1" height="6" fill="#4a4b46"/><rect x="164" y="162" width="1" height="6" fill="#4a4b46"/><rect x="182" y="162" width="1" height="6" fill="#4a4b46"/><rect x="200" y="162" width="1" height="6" fill="#4a4b46"/><rect x="218" y="162" width="1" height="6" fill="#4a4b46"/><rect x="236" y="162" width="1" height="6" fill="#4a4b46"/><rect x="254" y="162" width="1" height="6" fill="#4a4b46"/><rect x="272" y="162" width="1" height="6" fill="#4a4b46"/><rect x="290" y="162" width="1" height="6" fill="#4a4b46"/><rect x="308" y="162" width="1" height="6" fill="#4a4b46"/><rect x="326" y="162" width="1" height="6" fill="#4a4b46"/><rect x="344" y="162" width="1" height="6" fill="#4a4b46"/><rect x="362" y="162" width="1" height="6" fill="#4a4b46"/><rect x="380" y="162" width="1" height="6" fill="#4a4b46"/><rect x="398" y="162" width="1" height="6" fill="#4a4b46"/><rect x="416" y="162" width="1" height="6" fill="#4a4b46"/><rect x="434" y="162" width="1" height="6" fill="#4a4b46"/><rect x="452" y="162" width="1" height="6" fill="#4a4b46"/><rect x="470" y="162" width="1" height="6" fill="#4a4b46"/><rect x="488" y="162" width="1" height="6" fill="#4a4b46"/><rect x="506" y="162" width="1" height="6" fill="#4a4b46"/><rect x="524" y="162" width="1" height="6" fill="#4a4b46"/><rect x="542" y="162" width="1" height="6" fill="#4a4b46"/><rect x="560" y="162" width="1" height="6" fill="#4a4b46"/><rect x="578" y="162" width="1" height="6" fill="#4a4b46"/><rect x="0" y="189" width="586" height="1" fill="#4a4b46"/><rect x="20" y="183" width="1" height="6" fill="#4a4b46"/><rect x="38" y="183" width="1" height="6" fill="#4a4b46"/><rect x="56" y="183" width="1" height="6" fill="#4a4b46"/><rect x="74" y="183" width="1" height="6" fill="#4a4b46"/><rect x="92" y="183" width="1" height="6" fill="#4a4b46"/><rect x="110" y="183" width="1" height="6" fill="#4a4b46"/><rect x="128" y="183" width="1" height="6" fill="#4a4b46"/><rect x="146" y="183" width="1" height="6" fill="#4a4b46"/><rect x="164" y="183" width="1" height="6" fill="#4a4b46"/><rect x="182" y="183" width="1" height="6" fill="#4a4b46"/><rect x="200" y="183" width="1" height="6" fill="#4a4b46"/><rect x="218" y="183" width="1" height="6" fill="#4a4b46"/><rect x="236" y="183" width="1" height="6" fill="#4a4b46"/><rect x="254" y="183" width="1" height="6" fill="#4a4b46"/><rect x="272" y="183" width="1" height="6" fill="#4a4b46"/><rect x="290" y="183" width="1" height="6" fill="#4a4b46"/><rect x="308" y="183" width="1" height="6" fill="#4a4b46"/><rect x="326" y="183" width="1" height="6" fill="#4a4b46"/><rect x="344" y="183" width="1" height="6" fill="#4a4b46"/><rect x="362" y="183" width="1" height="6" fill="#4a4b46"/><rect x="380" y="183" width="1" height="6" fill="#4a4b46"/><rect x="398" y="183" width="1" height="6" fill="#4a4b46"/><rect x="416" y="183" width="1" height="6" fill="#4a4b46"/><rect x="434" y="183" width="1" height="6" fill="#4a4b46"/><rect x="452" y="183" width="1" height="6" fill="#4a4b46"/><rect x="470" y="183" width="1" height="6" fill="#4a4b46"/><rect x="488" y="183" width="1" height="6" fill="#4a4b46"/><rect x="506" y="183" width="1" height="6" fill="#4a4b46"/><rect x="524" y="183" width="1" height="6" fill="#4a4b46"/><rect x="542" y="183" width="1" height="6" fill="#4a4b46"/><rect x="560" y="183" width="1" height="6" fill="#4a4b46"/><rect x="578" y="183" width="1" height="6" fill="#4a4b46"/><rect x="0" y="210" width="586" height="1" fill="#4a4b46"/><rect x="20" y="204" width="1" height="6" fill="#4a4b46"/><rect x="38" y="204" width="1" height="6" fill="#4a4b46"/><rect x="56" y="204" width="1" height="6" fill="#4a4b46"/><rect x="74" y="204" width="1" height="6" fill="#4a4b46"/><rect x="92" y="204" width="1" height="6" fill="#4a4b46"/><rect x="110" y="204" width="1" height="6" fill="#4a4b46"/><rect x="128" y="204" width="1" height="6" fill="#4a4b46"/><rect x="146" y="204" width="1" height="6" fill="#4a4b46"/><rect x="164" y="204" width="1" height="6" fill="#4a4b46"/><rect x="182" y="204" width="1" height="6" fill="#4a4b46"/><rect x="200" y="204" width="1" height="6" fill="#4a4b46"/><rect x="218" y="204" width="1" height="6" fill="#4a4b46"/><rect x="236" y="204" width="1" height="6" fill="#4a4b46"/><rect x="254" y="204" width="1" height="6" fill="#4a4b46"/><rect x="272" y="204" width="1" height="6" fill="#4a4b46"/><rect x="290" y="204" width="1" height="6" fill="#4a4b46"/><rect x="308" y="204" width="1" height="6" fill="#4a4b46"/><rect x="326" y="204" width="1" height="6" fill="#4a4b46"/><rect x="344" y="204" width="1" height="6" fill="#4a4b46"/><rect x="362" y="204" width="1" height="6" fill="#4a4b46"/><rect x="380" y="204" width="1" height="6" fill="#4a4b46"/><rect x="398" y="204" width="1" height="6" fill="#4a4b46"/><rect x="416" y="204" width="1" height="6" fill="#4a4b46"/><rect x="434" y="204" width="1" height="6" fill="#4a4b46"/><rect x="452" y="204" width="1" height="6" fill="#4a4b46"/><rect x="470" y="204" width="1" height="6" fill="#4a4b46"/><rect x="488" y="204" width="1" height="6" fill="#4a4b46"/><rect x="506" y="204" width="1" height="6" fill="#4a4b46"/><rect x="524" y="204" width="1" height="6" fill="#4a4b46"/><rect x="542" y="204" width="1" height="6" fill="#4a4b46"/><rect x="560" y="204" width="1" height="6" fill="#4a4b46"/><rect x="578" y="204" width="1" height="6" fill="#4a4b46"/><rect x="0" y="231" width="586" height="1" fill="#4a4b46"/><rect x="20" y="225" width="1" height="6" fill="#4a4b46"/><rect x="38" y="225" width="1" height="6" fill="#4a4b46"/><rect x="56" y="225" width="1" height="6" fill="#4a4b46"/><rect x="74" y="225" width="1" height="6" fill="#4a4b46"/><rect x="92" y="225" width="1" height="6" fill="#4a4b46"/><rect x="110" y="225" width="1" height="6" fill="#4a4b46"/><rect x="128" y="225" width="1" height="6" fill="#4a4b46"/><rect x="146" y="225" width="1" height="6" fill="#4a4b46"/><rect x="164" y="225" width="1" height="6" fill="#4a4b46"/><rect x="182" y="225" width="1" height="6" fill="#4a4b46"/><rect x="200" y="225" width="1" height="6" fill="#4a4b46"/><rect x="218" y="225" width="1" height="6" fill="#4a4b46"/><rect x="236" y="225" width="1" height="6" fill="#4a4b46"/><rect x="254" y="225" width="1" height="6" fill="#4a4b46"/><rect x="272" y="225" width="1" height="6" fill="#4a4b46"/><rect x="290" y="225" width="1" height="6" fill="#4a4b46"/><rect x="308" y="225" width="1" height="6" fill="#4a4b46"/><rect x="326" y="225" width="1" height="6" fill="#4a4b46"/><rect x="344" y="225" width="1" height="6" fill="#4a4b46"/><rect x="362" y="225" width="1" height="6" fill="#4a4b46"/><rect x="380" y="225" width="1" height="6" fill="#4a4b46"/><rect x="398" y="225" width="1" height="6" fill="#4a4b46"/><rect x="416" y="225" width="1" height="6" fill="#4a4b46"/><rect x="434" y="225" width="1" height="6" fill="#4a4b46"/><rect x="452" y="225" width="1" height="6" fill="#4a4b46"/><rect x="470" y="225" width="1" height="6" fill="#4a4b46"/><rect x="488" y="225" width="1" height="6" fill="#4a4b46"/><rect x="506" y="225" width="1" height="6" fill="#4a4b46"/><rect x="524" y="225" width="1" height="6" fill="#4a4b46"/><rect x="542" y="225" width="1" height="6" fill="#4a4b46"/><rect x="560" y="225" width="1" height="6" fill="#4a4b46"/><rect x="578" y="225" width="1" height="6" fill="#4a4b46"/><rect x="0" y="252" width="586" height="1" fill="#4a4b46"/><rect x="20" y="246" width="1" height="6" fill="#4a4b46"/><rect x="38" y="246" width="1" height="6" fill="#4a4b46"/><rect x="56" y="246" width="1" height="6" fill="#4a4b46"/><rect x="74" y="246" width="1" height="6" fill="#4a4b46"/><rect x="92" y="246" width="1" height="6" fill="#4a4b46"/><rect x="110" y="246" width="1" height="6" fill="#4a4b46"/><rect x="128" y="246" width="1" height="6" fill="#4a4b46"/><rect x="146" y="246" width="1" height="6" fill="#4a4b46"/><rect x="164" y="246" width="1" height="6" fill="#4a4b46"/><rect x="182" y="246" width="1" height="6" fill="#4a4b46"/><rect x="200" y="246" width="1" height="6" fill="#4a4b46"/><rect x="218" y="246" width="1" height="6" fill="#4a4b46"/><rect x="236" y="246" width="1" height="6" fill="#4a4b46"/><rect x="254" y="246" width="1" height="6" fill="#4a4b46"/><rect x="272" y="246" width="1" height="6" fill="#4a4b46"/><rect x="290" y="246" width="1" height="6" fill="#4a4b46"/><rect x="308" y="246" width="1" height="6" fill="#4a4b46"/><rect x="326" y="246" width="1" height="6" fill="#4a4b46"/><rect x="344" y="246" width="1" height="6" fill="#4a4b46"/><rect x="362" y="246" width="1" height="6" fill="#4a4b46"/><rect x="380" y="246" width="1" height="6" fill="#4a4b46"/><rect x="398" y="246" width="1" height="6" fill="#4a4b46"/><rect x="416" y="246" width="1" height="6" fill="#4a4b46"/><rect x="434" y="246" width="1" height="6" fill="#4a4b46"/><rect x="452" y="246" width="1" height="6" fill="#4a4b46"/><rect x="470" y="246" width="1" height="6" fill="#4a4b46"/><rect x="488" y="246" width="1" height="6" fill="#4a4b46"/><rect x="506" y="246" width="1" height="6" fill="#4a4b46"/><rect x="524" y="246" width="1" height="6" fill="#4a4b46"/><rect x="542" y="246" width="1" height="6" fill="#4a4b46"/><rect x="560" y="246" width="1" height="6" fill="#4a4b46"/><rect x="578" y="246" width="1" height="6" fill="#4a4b46"/><ellipse cx="20.3" cy="10.6" rx="4.4" ry="3.8" fill="#000"/><ellipse cx="380.3" cy="10.6" rx="4.4" ry="3.8" fill="#000"/><ellipse cx="164.3" cy="94.6" rx="4.4" ry="3.8" fill="#000"/><ellipse cx="452.3" cy="94.6" rx="4.4" ry="3.8" fill="#000"/><ellipse cx="20.3" cy="115.6" rx="4.4" ry="3.8" fill="#000"/><ellipse cx="20.3" cy="178.6" rx="4.4" ry="3.8" fill="#000"/></svg>
<div style="left:777px;top:324px;width:15px;height:370px;background:linear-gradient(90deg,#646879,#4c5060);"></div>
<div style="left:777px;top:325px;width:15px;height:15px;background:linear-gradient(#666b7d,#4d5161);border:1px solid #2a2c36;border-radius:2px;box-shadow:inset 1px 1px 0 #8a8fa2;"></div>
<svg style="left:777px;top:325px;" width="15" height="15" viewBox="0 0 15 15"><path d="M3.5 9.5 L11.5 9.5 L7.5 5.0z" fill="#fff"/></svg>
<div style="left:777px;top:340px;width:15px;height:340px;background:linear-gradient(90deg,#6d7286,#545869);border:1px solid #2a2c36;border-radius:2px;box-shadow:inset 1px 1px 0 #8a8fa2;"></div>
<svg style="left:780px;top:401px;" width="12" height="20" viewBox="0 0 12 20"><rect x="0" y="0" width="1.3" height="1.3" fill="#2b2d38"/><rect x="4" y="0" width="1.3" height="1.3" fill="#2b2d38"/><rect x="8" y="0" width="1.3" height="1.3" fill="#2b2d38"/><rect x="0" y="4" width="1.3" height="1.3" fill="#2b2d38"/><rect x="4" y="4" width="1.3" height="1.3" fill="#2b2d38"/><rect x="8" y="4" width="1.3" height="1.3" fill="#2b2d38"/><rect x="0" y="8" width="1.3" height="1.3" fill="#2b2d38"/><rect x="4" y="8" width="1.3" height="1.3" fill="#2b2d38"/><rect x="8" y="8" width="1.3" height="1.3" fill="#2b2d38"/><rect x="0" y="12" width="1.3" height="1.3" fill="#2b2d38"/><rect x="4" y="12" width="1.3" height="1.3" fill="#2b2d38"/><rect x="8" y="12" width="1.3" height="1.3" fill="#2b2d38"/><rect x="0" y="16" width="1.3" height="1.3" fill="#2b2d38"/><rect x="4" y="16" width="1.3" height="1.3" fill="#2b2d38"/><rect x="8" y="16" width="1.3" height="1.3" fill="#2b2d38"/></svg>
<div style="left:191px;top:576px;width:585px;height:102px;background:#a7a8a0;"></div>
<div style="left:191px;top:578px;width:585px;height:1px;background:#4a4b46;"></div>
<svg style="left:191px;top:576px;shape-rendering:crispEdges;" width="585" height="102" viewBox="0 0 585 102"><path d="M20 12.5h566" stroke="#9a9b94" stroke-width="1"/><path d="M20 22.5h566" stroke="#9a9b94" stroke-width="1"/><path d="M20 32.5h566" stroke="#9a9b94" stroke-width="1"/><path d="M20 42.5h566" stroke="#9a9b94" stroke-width="1"/><path d="M20 52.5h566" stroke="#9a9b94" stroke-width="1"/><path d="M20 62.5h566" stroke="#9a9b94" stroke-width="1"/><path d="M20 72.5h566" stroke="#9a9b94" stroke-width="1"/><path d="M20 82.5h566" stroke="#9a9b94" stroke-width="1"/><path d="M20 92.5h566" stroke="#9a9b94" stroke-width="1"/><path d="M20.5 5v97" stroke="#3a3a38" stroke-width="1" stroke-dasharray="1 2"/><path d="M38.5 5v97" stroke="#7b7c78" stroke-width="1" stroke-dasharray="1 2"/><path d="M56.5 5v97" stroke="#7b7c78" stroke-width="1" stroke-dasharray="1 2"/><path d="M74.5 5v97" stroke="#7b7c78" stroke-width="1" stroke-dasharray="1 2"/><path d="M92.5 5v97" stroke="#7b7c78" stroke-width="1" stroke-dasharray="1 2"/><path d="M110.5 5v97" stroke="#7b7c78" stroke-width="1" stroke-dasharray="1 2"/><path d="M128.5 5v97" stroke="#7b7c78" stroke-width="1" stroke-dasharray="1 2"/><path d="M146.5 5v97" stroke="#7b7c78" stroke-width="1" stroke-dasharray="1 2"/><path d="M164.5 5v97" stroke="#3a3a38" stroke-width="1" stroke-dasharray="1 2"/><path d="M182.5 5v97" stroke="#7b7c78" stroke-width="1" stroke-dasharray="1 2"/><path d="M200.5 5v97" stroke="#7b7c78" stroke-width="1" stroke-dasharray="1 2"/><path d="M218.5 5v97" stroke="#7b7c78" stroke-width="1" stroke-dasharray="1 2"/><path d="M236.5 5v97" stroke="#7b7c78" stroke-width="1" stroke-dasharray="1 2"/><path d="M254.5 5v97" stroke="#7b7c78" stroke-width="1" stroke-dasharray="1 2"/><path d="M272.5 5v97" stroke="#7b7c78" stroke-width="1" stroke-dasharray="1 2"/><path d="M290.5 5v97" stroke="#7b7c78" stroke-width="1" stroke-dasharray="1 2"/><path d="M308.5 5v97" stroke="#3a3a38" stroke-width="1" stroke-dasharray="1 2"/><path d="M326.5 5v97" stroke="#7b7c78" stroke-width="1" stroke-dasharray="1 2"/><path d="M344.5 5v97" stroke="#7b7c78" stroke-width="1" stroke-dasharray="1 2"/><path d="M362.5 5v97" stroke="#7b7c78" stroke-width="1" stroke-dasharray="1 2"/><path d="M380.5 5v97" stroke="#7b7c78" stroke-width="1" stroke-dasharray="1 2"/><path d="M398.5 5v97" stroke="#7b7c78" stroke-width="1" stroke-dasharray="1 2"/><path d="M416.5 5v97" stroke="#7b7c78" stroke-width="1" stroke-dasharray="1 2"/><path d="M434.5 5v97" stroke="#7b7c78" stroke-width="1" stroke-dasharray="1 2"/><path d="M452.5 5v97" stroke="#3a3a38" stroke-width="1" stroke-dasharray="1 2"/><path d="M470.5 5v97" stroke="#7b7c78" stroke-width="1" stroke-dasharray="1 2"/><path d="M488.5 5v97" stroke="#7b7c78" stroke-width="1" stroke-dasharray="1 2"/><path d="M506.5 5v97" stroke="#7b7c78" stroke-width="1" stroke-dasharray="1 2"/><path d="M524.5 5v97" stroke="#7b7c78" stroke-width="1" stroke-dasharray="1 2"/><path d="M542.5 5v97" stroke="#7b7c78" stroke-width="1" stroke-dasharray="1 2"/><path d="M560.5 5v97" stroke="#7b7c78" stroke-width="1" stroke-dasharray="1 2"/><path d="M578.5 5v97" stroke="#7b7c78" stroke-width="1" stroke-dasharray="1 2"/></svg>
<div style="left:12px;top:622px;width:161px;height:11.5px;background:#5e9ff0;background-image:repeating-linear-gradient(90deg,rgba(150,195,255,0.6) 0 1px,transparent 1px 8px);background-position:0.0px 0;overflow:hidden;"><div class="lcd" style="left:0.5px;right:-0.30000000000000004px;top:0.25px;font-size:12px;letter-spacing:0.8px;text-align:right">Velocity</div></div>
<div class="btn" style="left:176px;top:621.5px;width:11.5px;height:12.5px;"></div>
<svg style="left:176px;top:621.5px;" width="11.5" height="12.5" viewBox="0 0 11.5 12.5"><path d="M2.25 4.75 L9.25 4.75 L5.75 8.75z" fill="#000"/></svg>
<div style="left:191px;top:678px;width:586px;height:16px;background-color:#4c505e;background-image:repeating-conic-gradient(#5a5e6e 0 25%,#454956 0 50%);background-size:2px 2px;"></div>
<div style="left:192px;top:678px;width:15px;height:15px;background:linear-gradient(#666b7d,#4d5161);border:1px solid #2a2c36;border-radius:2px;box-shadow:inset 1px 1px 0 #8a8fa2;"></div>
<svg style="left:192px;top:678px;" width="15" height="15" viewBox="0 0 15 15"><path d="M10.0 3.5 L10.0 11.5 L4.5 7.5z" fill="#fff"/></svg>
<div style="left:208px;top:678px;width:500px;height:15px;background:linear-gradient(#6d7286,#545869);border:1px solid #2a2c36;border-radius:2px;box-shadow:inset 1px 1px 0 #8a8fa2;"></div>
<div style="left:795px;top:275px;width:292px;height:419px;background:#3a3d4a;"></div>
<div style="left:800px;top:275px;width:130px;height:23px;background:linear-gradient(#5a5f70,#3f4351);border:1px solid #6f7488;border-radius:3px;"></div>
<svg style="left:809px;top:280px;" width="14" height="14" viewBox="0 0 14 14"><path d="M1.5 11v-2M3.8 11v-5M6.1 11v-8M8.4 11v-8M10.7 11v-6" stroke="#e4e6f0" stroke-width="1.2"/></svg>
<div class="t" style="left:825px;top:279px;font-weight:bold;font-size:14px;color:#0c0c10;letter-spacing:0.6px;">Instrument</div>
<div style="left:933px;top:275px;width:150px;height:23px;background:linear-gradient(#5a5f70,#3f4351);border:1px solid #6f7488;border-radius:3px;"></div>
<svg style="left:943px;top:281px;" width="9" height="12" viewBox="0 0 9 12"><path d="M0 2h8M0 5h8M0 8h8" stroke="#c4c7d4" stroke-width="1.7"/></svg>
<div class="t" style="left:951px;top:279px;font-weight:bold;font-size:14px;color:#0c0c10;letter-spacing:0.55px;">Klangbibliothek</div>
<div style="left:797px;top:300px;width:289px;height:29px;background:#6a6f83;border:1px solid #8085a0;"></div>
<div style="left:801px;top:303px;width:281px;height:22px;background:linear-gradient(#474b59,#31343f);border:1px solid #1d1f27;"></div>
<div style="left:838px;top:307px;width:97.5px;height:14.5px;background:linear-gradient(#b0b8cc,#8d97b0 55%,#aab3c8);border:1px solid #a3abbf;"><div class="t" style="left:0;width:96px;text-align:center;top:-1px;font-weight:bold;font-size:14px;color:#0a0a0a;letter-spacing:0.5px">Übersicht</div></div>
<div class="bbtn" style="left:942px;top:306px;width:99px;height:17px;"><div class="t" style="left:0;width:97px;text-align:center;top:0.5px;font-weight:bold;font-size:14px;color:#0a0a0a;letter-spacing:0.5px">Layer</div></div>
<div style="left:797px;top:331px;width:289px;height:120px;background:#6a6f83;border:1px solid #8085a0;border-bottom:none;"></div>
<div style="left:801px;top:334px;width:281px;height:117px;background:#464c60;border:1px solid #2a2d3a;border-bottom:none;"></div>
<div style="left:803px;top:335px;width:35px;height:19px;background:#000;border:1px solid #d00;"><div class="t" style="left:0;width:33px;text-align:center;top:1px;font-size:13.5px;color:#f0f0f0">5</div></div>
<div style="left:838px;top:335px;width:42px;height:19px;background:#17181c;border:1px solid #d8d8d8;"><div class="t" style="left:0;width:40px;text-align:center;top:1px;font-size:13.5px;color:#f0f0f0">4</div></div>
<div style="left:880px;top:335px;width:49px;height:19px;background:#33353f;border:1px solid #d8d8d8;"><div class="t" style="left:0;width:47px;text-align:center;top:1px;font-size:13.5px;color:#f0f0f0">3</div></div>
<div style="left:929px;top:335px;width:67px;height:19px;background:#50535f;border:1px solid #d8d8d8;"><div class="t" style="left:0;width:65px;text-align:center;top:1px;font-size:13.5px;color:#f0f0f0">2</div></div>
<div style="left:996px;top:335px;width:84px;height:19px;background:#676b7b;border:1px solid #d8d8d8;"><div class="t" style="left:0;width:82px;text-align:center;top:1px;font-size:13.5px;color:#f0f0f0">1</div></div>
<div style="left:803px;top:355px;width:277px;height:9px;background:#1a2b48;"></div>
<div style="left:995px;top:355px;width:84px;height:9px;background:#5ba1e8;"></div>
<div style="left:803px;top:365px;width:277px;height:9px;background:#1a2b48;"></div>
<div style="left:928px;top:365px;width:70px;height:9px;background:#5ba1e8;"></div>
<div style="left:803px;top:375px;width:277px;height:9px;background:#1a2b48;"></div>
<div style="left:879px;top:375px;width:54px;height:9px;background:#5ba1e8;"></div>
<div style="left:803px;top:385px;width:277px;height:9px;background:#1a2b48;"></div>
<div style="left:837px;top:385px;width:48px;height:9px;background:#5ba1e8;"></div>
<div style="left:803px;top:395px;width:277px;height:9px;background:#1a2b48;"></div>
<div style="left:804px;top:395px;width:35px;height:9px;background:#5ba1e8;"></div>
<div style="left:802px;top:394px;width:278px;height:11px;border:1px solid #d00010;"></div>
<div style="left:803px;top:405px;width:277px;height:9px;background:#3c4b69;"></div>
<div style="left:803px;top:414px;width:277px;height:1px;background:#566280;"></div>
<div style="left:803px;top:415px;width:277px;height:9px;background:#3c4b69;"></div>
<div style="left:803px;top:424px;width:277px;height:1px;background:#566280;"></div>
<div style="left:803px;top:425px;width:277px;height:9px;background:#3c4b69;"></div>
<div style="left:803px;top:434px;width:277px;height:1px;background:#566280;"></div>
<div style="left:803px;top:435px;width:277px;height:9px;background:#3c4b69;"></div>
<div style="left:803px;top:444px;width:277px;height:1px;background:#566280;"></div>
<div style="left:803px;top:445px;width:277px;height:9px;background:#3c4b69;"></div>
<div style="left:803px;top:454px;width:277px;height:1px;background:#566280;"></div>
<div style="left:252px;top:433px;width:1050px;height:316px;border-radius:4px;box-shadow:0 0 0 1px rgba(118,165,216,.74),0 0 0 2px rgba(118,165,216,.27),0 0 0 3px rgba(118,165,216,.10),0 0 0 4px rgba(118,165,216,.09),0 0 0 5px rgba(118,165,216,.135),0 0 0 6px rgba(118,165,216,.26);"></div>
<div style="left:252px;top:433px;width:1050px;height:316px;background:#e1e0de;border-radius:4px;"></div>
<div style="left:252px;top:433px;width:1050px;height:25px;background:linear-gradient(#f8f8f8,#ececec 50%,#e0e0e0);border-radius:4px 4px 0 0;"></div>
<div style="left:252px;top:436px;width:1px;height:310px;background:#fbfaf8;"></div>
<div style="left:348px;top:442px;width:882px;height:1px;background:linear-gradient(90deg,rgba(90,150,230,0),rgba(90,150,230,0.9) 4%,rgba(90,150,230,0.9) 55%,rgba(90,150,230,0.25) 80%,rgba(90,150,230,0));"></div>
<div style="left:348px;top:446px;width:882px;height:1px;background:linear-gradient(90deg,rgba(90,150,230,0),rgba(90,150,230,0.9) 4%,rgba(90,150,230,0.9) 55%,rgba(90,150,230,0.25) 80%,rgba(90,150,230,0));"></div>
<div style="left:348px;top:451px;width:882px;height:1px;background:linear-gradient(90deg,rgba(90,150,230,0),rgba(90,150,230,0.9) 4%,rgba(90,150,230,0.9) 55%,rgba(90,150,230,0.25) 80%,rgba(90,150,230,0));"></div>
<svg style="left:261px;top:438px;" width="16" height="16" viewBox="0 0 16 16"><rect x="0.5" y="0.5" width="15" height="15" fill="#d6d8ea" stroke="#a9add2"/><rect x="1.5" y="1.5" width="13" height="13" fill="none" stroke="#e8e9f4"/><rect x="2.2" y="3.2" width="2.6" height="9.6" fill="#283a8c"/><rect x="4.8" y="7.3" width="2.8" height="2.4" fill="#1a2866"/><rect x="7.4" y="3.2" width="6.6" height="9.6" fill="#1a2866"/><rect x="7.4" y="5.2" width="4.6" height="2.1" fill="#d6d8ea"/><rect x="8.4" y="8.9" width="4.6" height="2.8" fill="#ffffff"/><rect x="9.6" y="8.3" width="4.4" height="0.9" fill="#ffffff"/></svg>
<svg style="left:281px;top:435.5px;" width="20" height="21" viewBox="0 0 20 21"><defs><linearGradient id="cg291445" x1="0" y1="0" x2="0" y2="1"><stop offset="0" stop-color="#d6d6d6"/><stop offset="1" stop-color="#f6f6f6"/></linearGradient></defs><circle cx="10" cy="10.6" r="8.3" fill="none" stroke="#fafafa" stroke-width="1"/><circle cx="10" cy="10" r="7.6" fill="url(#cg291445)" stroke="#707070" stroke-width="1.2"/><circle cx="10" cy="10" r="0.9" fill="#161616"/></svg>
<div class="t" style="left:308px;top:438px;font-weight:bold;font-size:14px;color:#0a0a0a;letter-spacing:0.4px;">Mixer</div>
<svg style="left:1228px;top:435.5px;" width="20" height="21" viewBox="0 0 20 21"><defs><linearGradient id="cg1238445" x1="0" y1="0" x2="0" y2="1"><stop offset="0" stop-color="#d6d6d6"/><stop offset="1" stop-color="#f6f6f6"/></linearGradient></defs><circle cx="10" cy="10.6" r="8.3" fill="none" stroke="#fafafa" stroke-width="1"/><circle cx="10" cy="10" r="7.6" fill="url(#cg1238445)" stroke="#707070" stroke-width="1.2"/><path d="M6.6 8.6 L10 12 L13.4 8.6" fill="none" stroke="#161616" stroke-width="1.7"/></svg>
<svg style="left:1274.5px;top:435.5px;" width="20" height="21" viewBox="0 0 20 21"><defs><linearGradient id="cg1284445" x1="0" y1="0" x2="0" y2="1"><stop offset="0" stop-color="#d6d6d6"/><stop offset="1" stop-color="#f6f6f6"/></linearGradient></defs><circle cx="10" cy="10.6" r="8.3" fill="none" stroke="#fafafa" stroke-width="1"/><circle cx="10" cy="10" r="7.6" fill="url(#cg1284445)" stroke="#707070" stroke-width="1.2"/><path d="M6.6 6.6 L13.4 13.4 M13.4 6.6 L6.6 13.4" fill="none" stroke="#161616" stroke-width="1.7"/></svg>
<div style="left:256px;top:458px;width:1042px;height:284px;background:#3a3d4a;"></div>
<div style="left:257px;top:473px;width:54px;height:250px;overflow:hidden;">
<div style="left:0px;top:0px;width:54px;height:60px;background:#585c6b;box-shadow:inset 1px 1px 0 #6c7084,inset -1px -1px 0 #3c3f4b;"></div>
<div class="btn" style="left:7px;top:2px;width:18px;height:13px;border-color:#08080a;"></div>
<svg style="left:7px;top:2px;" width="18" height="13" viewBox="0 0 18 13"><path d="M6.5 3L11.5 6.5L6.5 10z" fill="#000"/></svg>
<div style="left:24px;top:2px;width:6px;height:13px;background:linear-gradient(90deg,#5d6172,#a9adbd 55%,#6c7082);border:1px solid #08080a;border-radius:0 2px 2px 0;"></div>
<div style="left:37px;top:2px;width:12px;height:9px;background:#6a6e7e;border:1px solid #444854;border-radius:3px;box-shadow:inset 0 0 0 1px #7c8092;"></div>
<div style="left:41px;top:5px;width:5px;height:3px;background:#8c90a2;"></div>
<div class="btn" style="left:7px;top:17px;width:18px;height:13px;border-color:#08080a;"><div class="px" style="left:0;top:1.5px;width:16px;letter-spacing:0;font-weight:bold;font-size:8.5px;transform:scaleX(1.15)">M</div></div>
<div class="btn" style="left:29px;top:17px;width:18px;height:13px;border-color:#08080a;"><div class="px" style="left:0;top:1.5px;width:16px;letter-spacing:0;font-weight:bold;font-size:8.5px;transform:scaleX(1.15)">S</div></div>
<div style="left:5px;top:33px;width:44px;height:12px;background:#8085a0;border-top:1px solid #969bb2;"></div>
<div style="left:0px;top:44px;width:54px;height:15px;background:#8085a0;"></div>
<div style="left:0px;top:59px;width:54px;height:1px;background:#5e6276;"></div>
<svg style="left:0px;top:0px;" width="54" height="62" viewBox="0 0 54 62"><clipPath id="pc0"><rect x="0" y="30" width="54" height="26.8"/></clipPath><circle cx="27" cy="46" r="14.4" fill="#050505" clip-path="url(#pc0)"/><circle cx="27" cy="46" r="10.3" fill="url(#ko)"/><circle cx="27" cy="46" r="7.62" fill="url(#ki)"/><path d="M27.00 44.76L27.00 38.80" stroke="#1a1a1a" stroke-width="1.5" stroke-linecap="round"/><rect x="24.8" y="31.6" width="4.6" height="2.6" fill="#35e04a"/></svg>
<div style="left:5px;top:48px;width:9px;height:9px;background:#050505;"><div class="t" style="left:1.5px;top:0.5px;font-size:8.5px;font-weight:bold;color:#fff;transform:scaleX(1.1);transform-origin:0 0">L</div></div>
<div style="left:40px;top:48px;width:9px;height:9px;background:#050505;"><div class="t" style="left:1.5px;top:0.5px;font-size:8.5px;font-weight:bold;color:#fff;transform:scaleX(1.1);transform-origin:0 0">R</div></div>
<div style="left:0px;top:61px;width:54px;height:189px;background:#4b4f5d;box-shadow:inset 1px 1px 0 #5e6274,inset -1px -1px 0 #363944;"></div>
<svg style="left:0px;top:0px;" width="54" height="110" viewBox="0 0 54 110"><circle cx="16.8" cy="71.7" r="8.3" fill="url(#so)"/><circle cx="16.8" cy="71.7" r="7" fill="#474a54"/><circle cx="16.8" cy="71.7" r="6.2" fill="url(#si)"/><path d="M16.3 72.2L12.200000000000001 76.3" stroke="#33363e" stroke-width="1.4"/><circle cx="37.8" cy="71.7" r="8.3" fill="url(#so)"/><circle cx="37.8" cy="71.7" r="7" fill="#474a54"/><circle cx="37.8" cy="71.7" r="6.2" fill="url(#si)"/><path d="M37.3 72.2L33.199999999999996 76.3" stroke="#33363e" stroke-width="1.4"/><circle cx="16.8" cy="91.6" r="8.3" fill="url(#so)"/><circle cx="16.8" cy="91.6" r="7" fill="#474a54"/><circle cx="16.8" cy="91.6" r="6.2" fill="url(#si)"/><path d="M16.3 92.1L12.200000000000001 96.19999999999999" stroke="#33363e" stroke-width="1.4"/><circle cx="37.8" cy="91.6" r="8.3" fill="url(#so)"/><circle cx="37.8" cy="91.6" r="7" fill="#474a54"/><circle cx="37.8" cy="91.6" r="6.2" fill="url(#si)"/><path d="M37.3 92.1L33.199999999999996 96.19999999999999" stroke="#33363e" stroke-width="1.4"/></svg>
<div style="left:5px;top:103px;width:45px;height:146px;border:1px solid #30323c;box-shadow:inset 1px 1px 0 #3a3d48, 1px 1px 0 #686c7e;background:#4b4f5d;"></div>
<div style="left:9px;top:106px;width:37px;height:15px;background:#3a3d49;"></div>
<div style="left:11px;top:108px;width:33px;height:11px;background:#5ea0f2;overflow:hidden;background-image:linear-gradient(90deg,transparent 12px,rgba(160,205,255,.5) 12px 13px,transparent 13px);"><div class="lcd" style="left:0;width:33px;text-align:center;top:0.0px;font-size:11.5px;letter-spacing:1.1px;font-style:italic;color:#12306a">0,00</div></div>
<div style="left:10px;top:123px;width:35px;height:2px;background:repeating-linear-gradient(90deg,#8d91a3 0 1px,transparent 1px 3px);"></div>
<div style="left:22px;top:129px;width:8px;height:114px;background:#0c0d10;border-radius:2px;"></div>
<div style="left:23px;top:131px;width:6px;height:110px;background:repeating-linear-gradient(#42444c 0 1px,#2a2c33 1px 2px);"></div>
<div style="left:36px;top:129px;width:8px;height:114px;background:#0c0d10;border-radius:2px;"></div>
<div style="left:37px;top:131px;width:6px;height:110px;background:repeating-linear-gradient(#42444c 0 1px,#2a2c33 1px 2px);"></div>
<div style="left:31px;top:131px;width:1px;height:110px;background:#2a2c35;"></div>
<div style="left:34px;top:131px;width:1px;height:110px;background:#8a8ea0;"></div>
</div>
<svg style="left:284px;top:646px;" width="13" height="28" viewBox="0 0 13 28"><rect x="0" y="0" width="13" height="28" rx="1.5" fill="#8e919c"/><rect x="1" y="4" width="11" height="1" fill="#b2b5be"/><rect x="1" y="6" width="11" height="1" fill="#747782"/><rect x="1" y="8" width="11" height="1" fill="#b2b5be"/><rect x="1" y="10" width="11" height="1" fill="#747782"/><rect x="1" y="12" width="11" height="1" fill="#b2b5be"/><rect x="1" y="14" width="11" height="1" fill="#747782"/><rect x="1" y="16" width="11" height="1" fill="#b2b5be"/><rect x="1" y="18" width="11" height="1" fill="#747782"/><rect x="1" y="20" width="11" height="1" fill="#b2b5be"/><rect x="1" y="22" width="11" height="1" fill="#747782"/><rect x="1" y="24" width="11" height="1" fill="#b2b5be"/><rect x="1" y="1" width="11" height="2.5" fill="#bcbfc8"/><rect x="1" y="24.5" width="11" height="2.5" fill="#6c6f7a"/><rect x="0.5" y="0.5" width="12" height="27" rx="1.5" fill="none" stroke="#5c5f6a" stroke-width="1"/></svg>
<div style="left:257px;top:473px;width:54px;height:250px;overflow:hidden;pointer-events:none">
<div class="t" style="left:5px;top:240px;transform-origin:0 0;transform:rotate(-90deg);font-size:16px;color:#e6e6e6;letter-spacing:0.15px;">Kick</div>
<div style="left:5px;top:242px;width:13px;height:5px;background:#8085a0;border-radius:0 2px 0 0;"></div>
</div>
<div style="left:313px;top:473px;width:54px;height:250px;overflow:hidden;">
<div style="left:0px;top:0px;width:54px;height:60px;background:#585c6b;box-shadow:inset 1px 1px 0 #6c7084,inset -1px -1px 0 #3c3f4b;"></div>
<div class="btn" style="left:7px;top:2px;width:18px;height:13px;border-color:#08080a;"></div>
<svg style="left:7px;top:2px;" width="18" height="13" viewBox="0 0 18 13"><path d="M6.5 3L11.5 6.5L6.5 10z" fill="#000"/></svg>
<div style="left:24px;top:2px;width:6px;height:13px;background:linear-gradient(90deg,#5d6172,#a9adbd 55%,#6c7082);border:1px solid #08080a;border-radius:0 2px 2px 0;"></div>
<div style="left:37px;top:2px;width:12px;height:9px;background:#6a6e7e;border:1px solid #444854;border-radius:3px;box-shadow:inset 0 0 0 1px #7c8092;"></div>
<div style="left:41px;top:5px;width:5px;height:3px;background:#8c90a2;"></div>
<div class="btn" style="left:7px;top:17px;width:18px;height:13px;border-color:#08080a;"><div class="px" style="left:0;top:1.5px;width:16px;letter-spacing:0;font-weight:bold;font-size:8.5px;transform:scaleX(1.15)">M</div></div>
<div class="btn" style="left:29px;top:17px;width:18px;height:13px;border-color:#08080a;"><div class="px" style="left:0;top:1.5px;width:16px;letter-spacing:0;font-weight:bold;font-size:8.5px;transform:scaleX(1.15)">S</div></div>
<div style="left:5px;top:33px;width:44px;height:12px;background:#8085a0;border-top:1px solid #969bb2;"></div>
<div style="left:0px;top:44px;width:54px;height:15px;background:#8085a0;"></div>
<div style="left:0px;top:59px;width:54px;height:1px;background:#5e6276;"></div>
<svg style="left:0px;top:0px;" width="54" height="62" viewBox="0 0 54 62"><clipPath id="pc1"><rect x="0" y="30" width="54" height="26.8"/></clipPath><circle cx="27" cy="46" r="14.4" fill="#050505" clip-path="url(#pc1)"/><path d="M27.00 33.60A12.4 12.4 0 0 0 23.37 34.14" fill="none" stroke="#e3121c" stroke-width="2.8"/><circle cx="27" cy="46" r="10.3" fill="url(#ko)"/><circle cx="27" cy="46" r="7.62" fill="url(#ki)"/><path d="M26.64 44.82L24.89 39.11" stroke="#1a1a1a" stroke-width="1.5" stroke-linecap="round"/><rect x="25.3" y="31.6" width="3.6" height="2.2" fill="#d8dae4"/></svg>
<div style="left:5px;top:48px;width:9px;height:9px;background:#050505;"><div class="t" style="left:1.5px;top:0.5px;font-size:8.5px;font-weight:bold;color:#fff;transform:scaleX(1.1);transform-origin:0 0">L</div></div>
<div style="left:40px;top:48px;width:9px;height:9px;background:#050505;"><div class="t" style="left:1.5px;top:0.5px;font-size:8.5px;font-weight:bold;color:#fff;transform:scaleX(1.1);transform-origin:0 0">R</div></div>
<div style="left:0px;top:61px;width:54px;height:189px;background:#4b4f5d;box-shadow:inset 1px 1px 0 #5e6274,inset -1px -1px 0 #363944;"></div>
<svg style="left:0px;top:0px;" width="54" height="110" viewBox="0 0 54 110"><circle cx="16.8" cy="71.7" r="8.3" fill="url(#so)"/><circle cx="16.8" cy="71.7" r="7" fill="#474a54"/><circle cx="16.8" cy="71.7" r="6.2" fill="url(#si)"/><path d="M16.3 72.2L12.200000000000001 76.3" stroke="#33363e" stroke-width="1.4"/><circle cx="37.8" cy="71.7" r="8.3" fill="url(#so)"/><circle cx="37.8" cy="71.7" r="7" fill="#474a54"/><circle cx="37.8" cy="71.7" r="6.2" fill="url(#si)"/><path d="M37.3 72.2L33.199999999999996 76.3" stroke="#33363e" stroke-width="1.4"/><circle cx="16.8" cy="91.6" r="8.3" fill="url(#so)"/><circle cx="16.8" cy="91.6" r="7" fill="#474a54"/><circle cx="16.8" cy="91.6" r="6.2" fill="url(#si)"/><path d="M16.3 92.1L12.200000000000001 96.19999999999999" stroke="#33363e" stroke-width="1.4"/><circle cx="37.8" cy="91.6" r="8.3" fill="url(#so)"/><circle cx="37.8" cy="91.6" r="7" fill="#474a54"/><circle cx="37.8" cy="91.6" r="6.2" fill="url(#si)"/><path d="M37.3 92.1L33.199999999999996 96.19999999999999" stroke="#33363e" stroke-width="1.4"/></svg>
<div style="left:5px;top:103px;width:45px;height:146px;border:1px solid #30323c;box-shadow:inset 1px 1px 0 #3a3d48, 1px 1px 0 #686c7e;background:#4b4f5d;"></div>
<div style="left:9px;top:106px;width:37px;height:15px;background:#3a3d49;"></div>
<div style="left:11px;top:108px;width:33px;height:11px;background:#5ea0f2;overflow:hidden;background-image:linear-gradient(90deg,transparent 12px,rgba(160,205,255,.5) 12px 13px,transparent 13px);"><div class="lcd" style="left:0;width:33px;text-align:center;top:0.0px;font-size:11.5px;letter-spacing:1.1px;font-style:italic;color:#12306a">0,00</div></div>
<div style="left:10px;top:123px;width:35px;height:2px;background:repeating-linear-gradient(90deg,#8d91a3 0 1px,transparent 1px 3px);"></div>
<div style="left:22px;top:129px;width:8px;height:114px;background:#0c0d10;border-radius:2px;"></div>
<div style="left:23px;top:131px;width:6px;height:110px;background:repeating-linear-gradient(#42444c 0 1px,#2a2c33 1px 2px);"></div>
<div style="left:36px;top:129px;width:8px;height:114px;background:#0c0d10;border-radius:2px;"></div>
<div style="left:37px;top:131px;width:6px;height:110px;background:repeating-linear-gradient(#42444c 0 1px,#2a2c33 1px 2px);"></div>
<div style="left:31px;top:131px;width:1px;height:110px;background:#2a2c35;"></div>
<div style="left:34px;top:131px;width:1px;height:110px;background:#8a8ea0;"></div>
</div>
<svg style="left:340px;top:648px;" width="13" height="28" viewBox="0 0 13 28"><rect x="0" y="0" width="13" height="28" rx="1.5" fill="#8e919c"/><rect x="1" y="4" width="11" height="1" fill="#b2b5be"/><rect x="1" y="6" width="11" height="1" fill="#747782"/><rect x="1" y="8" width="11" height="1" fill="#b2b5be"/><rect x="1" y="10" width="11" height="1" fill="#747782"/><rect x="1" y="12" width="11" height="1" fill="#b2b5be"/><rect x="1" y="14" width="11" height="1" fill="#747782"/><rect x="1" y="16" width="11" height="1" fill="#b2b5be"/><rect x="1" y="18" width="11" height="1" fill="#747782"/><rect x="1" y="20" width="11" height="1" fill="#b2b5be"/><rect x="1" y="22" width="11" height="1" fill="#747782"/><rect x="1" y="24" width="11" height="1" fill="#b2b5be"/><rect x="1" y="1" width="11" height="2.5" fill="#bcbfc8"/><rect x="1" y="24.5" width="11" height="2.5" fill="#6c6f7a"/><rect x="0.5" y="0.5" width="12" height="27" rx="1.5" fill="none" stroke="#5c5f6a" stroke-width="1"/></svg>
<div style="left:313px;top:473px;width:54px;height:250px;overflow:hidden;pointer-events:none">
<div class="t" style="left:5px;top:240px;transform-origin:0 0;transform:rotate(-90deg);font-size:16px;color:#e6e6e6;letter-spacing:0.15px;">Stick</div>
<div style="left:5px;top:242px;width:13px;height:5px;background:#8085a0;border-radius:0 2px 0 0;"></div>
</div>
<div style="left:369px;top:473px;width:54px;height:250px;overflow:hidden;">
<div style="left:0px;top:0px;width:54px;height:60px;background:#585c6b;box-shadow:inset 1px 1px 0 #6c7084,inset -1px -1px 0 #3c3f4b;"></div>
<div class="btn" style="left:7px;top:2px;width:18px;height:13px;border-color:#08080a;"></div>
<svg style="left:7px;top:2px;" width="18" height="13" viewBox="0 0 18 13"><path d="M6.5 3L11.5 6.5L6.5 10z" fill="#000"/></svg>
<div style="left:24px;top:2px;width:6px;height:13px;background:linear-gradient(90deg,#5d6172,#a9adbd 55%,#6c7082);border:1px solid #08080a;border-radius:0 2px 2px 0;"></div>
<div style="left:37px;top:2px;width:12px;height:9px;background:#6a6e7e;border:1px solid #444854;border-radius:3px;box-shadow:inset 0 0 0 1px #7c8092;"></div>
<div style="left:41px;top:5px;width:5px;height:3px;background:#8c90a2;"></div>
<div class="btn" style="left:7px;top:17px;width:18px;height:13px;border-color:#08080a;"><div class="px" style="left:0;top:1.5px;width:16px;letter-spacing:0;font-weight:bold;font-size:8.5px;transform:scaleX(1.15)">M</div></div>
<div class="btn" style="left:29px;top:17px;width:18px;height:13px;border-color:#08080a;"><div class="px" style="left:0;top:1.5px;width:16px;letter-spacing:0;font-weight:bold;font-size:8.5px;transform:scaleX(1.15)">S</div></div>
<div style="left:5px;top:33px;width:44px;height:12px;background:#8085a0;border-top:1px solid #969bb2;"></div>
<div style="left:0px;top:44px;width:54px;height:15px;background:#8085a0;"></div>
<div style="left:0px;top:59px;width:54px;height:1px;background:#5e6276;"></div>
<svg style="left:0px;top:0px;" width="54" height="62" viewBox="0 0 54 62"><clipPath id="pc2"><rect x="0" y="30" width="54" height="26.8"/></clipPath><circle cx="27" cy="46" r="14.4" fill="#050505" clip-path="url(#pc2)"/><path d="M27.00 33.60A12.4 12.4 0 0 0 23.79 34.02" fill="none" stroke="#e3121c" stroke-width="2.8"/><circle cx="27" cy="46" r="10.3" fill="url(#ko)"/><circle cx="27" cy="46" r="7.62" fill="url(#ki)"/><path d="M26.68 44.81L25.14 39.05" stroke="#1a1a1a" stroke-width="1.5" stroke-linecap="round"/><rect x="25.3" y="31.6" width="3.6" height="2.2" fill="#d8dae4"/></svg>
<div style="left:5px;top:48px;width:9px;height:9px;background:#050505;"><div class="t" style="left:1.5px;top:0.5px;font-size:8.5px;font-weight:bold;color:#fff;transform:scaleX(1.1);transform-origin:0 0">L</div></div>
<div style="left:40px;top:48px;width:9px;height:9px;background:#050505;"><div class="t" style="left:1.5px;top:0.5px;font-size:8.5px;font-weight:bold;color:#fff;transform:scaleX(1.1);transform-origin:0 0">R</div></div>
<div style="left:0px;top:61px;width:54px;height:189px;background:#4b4f5d;box-shadow:inset 1px 1px 0 #5e6274,inset -1px -1px 0 #363944;"></div>
<svg style="left:0px;top:0px;" width="54" height="110" viewBox="0 0 54 110"><circle cx="16.8" cy="71.7" r="8.3" fill="url(#so)"/><circle cx="16.8" cy="71.7" r="7" fill="#474a54"/><circle cx="16.8" cy="71.7" r="6.2" fill="url(#si)"/><path d="M16.3 72.2L12.200000000000001 76.3" stroke="#33363e" stroke-width="1.4"/><circle cx="37.8" cy="71.7" r="8.3" fill="url(#so)"/><circle cx="37.8" cy="71.7" r="7" fill="#474a54"/><circle cx="37.8" cy="71.7" r="6.2" fill="url(#si)"/><path d="M37.3 72.2L33.199999999999996 76.3" stroke="#33363e" stroke-width="1.4"/><circle cx="16.8" cy="91.6" r="8.3" fill="url(#so)"/><circle cx="16.8" cy="91.6" r="7" fill="#474a54"/><circle cx="16.8" cy="91.6" r="6.2" fill="url(#si)"/><path d="M16.3 92.1L12.200000000000001 96.19999999999999" stroke="#33363e" stroke-width="1.4"/><circle cx="37.8" cy="91.6" r="8.3" fill="url(#so)"/><circle cx="37.8" cy="91.6" r="7" fill="#474a54"/><circle cx="37.8" cy="91.6" r="6.2" fill="url(#si)"/><path d="M37.3 92.1L33.199999999999996 96.19999999999999" stroke="#33363e" stroke-width="1.4"/></svg>
<div style="left:5px;top:103px;width:45px;height:146px;border:1px solid #30323c;box-shadow:inset 1px 1px 0 #3a3d48, 1px 1px 0 #686c7e;background:#4b4f5d;"></div>
<div style="left:9px;top:106px;width:37px;height:15px;background:#3a3d49;"></div>
<div style="left:11px;top:108px;width:33px;height:11px;background:#5ea0f2;overflow:hidden;background-image:linear-gradient(90deg,transparent 12px,rgba(160,205,255,.5) 12px 13px,transparent 13px);"><div class="lcd" style="left:0;width:33px;text-align:center;top:0.0px;font-size:11.5px;letter-spacing:1.1px;font-style:italic;color:#12306a">0,00</div></div>
<div style="left:10px;top:123px;width:35px;height:2px;background:repeating-linear-gradient(90deg,#8d91a3 0 1px,transparent 1px 3px);"></div>
<div style="left:22px;top:129px;width:8px;height:114px;background:#0c0d10;border-radius:2px;"></div>
<div style="left:23px;top:131px;width:6px;height:110px;background:repeating-linear-gradient(#42444c 0 1px,#2a2c33 1px 2px);"></div>
<div style="left:36px;top:129px;width:8px;height:114px;background:#0c0d10;border-radius:2px;"></div>
<div style="left:37px;top:131px;width:6px;height:110px;background:repeating-linear-gradient(#42444c 0 1px,#2a2c33 1px 2px);"></div>
<div style="left:31px;top:131px;width:1px;height:110px;background:#2a2c35;"></div>
<div style="left:34px;top:131px;width:1px;height:110px;background:#8a8ea0;"></div>
</div>
<svg style="left:396px;top:640px;" width="13" height="28" viewBox="0 0 13 28"><rect x="0" y="0" width="13" height="28" rx="1.5" fill="#8e919c"/><rect x="1" y="4" width="11" height="1" fill="#b2b5be"/><rect x="1" y="6" width="11" height="1" fill="#747782"/><rect x="1" y="8" width="11" height="1" fill="#b2b5be"/><rect x="1" y="10" width="11" height="1" fill="#747782"/><rect x="1" y="12" width="11" height="1" fill="#b2b5be"/><rect x="1" y="14" width="11" height="1" fill="#747782"/><rect x="1" y="16" width="11" height="1" fill="#b2b5be"/><rect x="1" y="18" width="11" height="1" fill="#747782"/><rect x="1" y="20" width="11" height="1" fill="#b2b5be"/><rect x="1" y="22" width="11" height="1" fill="#747782"/><rect x="1" y="24" width="11" height="1" fill="#b2b5be"/><rect x="1" y="1" width="11" height="2.5" fill="#bcbfc8"/><rect x="1" y="24.5" width="11" height="2.5" fill="#6c6f7a"/><rect x="0.5" y="0.5" width="12" height="27" rx="1.5" fill="none" stroke="#5c5f6a" stroke-width="1"/></svg>
<div style="left:369px;top:473px;width:54px;height:250px;overflow:hidden;pointer-events:none">
<div class="t" style="left:5px;top:240px;transform-origin:0 0;transform:rotate(-90deg);font-size:16px;color:#e6e6e6;letter-spacing:0.15px;">Snare Rock</div>
<div style="left:5px;top:242px;width:13px;height:5px;background:#8085a0;border-radius:0 2px 0 0;"></div>
</div>
<div style="left:425px;top:473px;width:54px;height:250px;overflow:hidden;">
<div style="left:0px;top:0px;width:54px;height:60px;background:#585c6b;box-shadow:inset 1px 1px 0 #6c7084,inset -1px -1px 0 #3c3f4b;"></div>
<div class="btn" style="left:7px;top:2px;width:18px;height:13px;border-color:#08080a;"></div>
<svg style="left:7px;top:2px;" width="18" height="13" viewBox="0 0 18 13"><path d="M6.5 3L11.5 6.5L6.5 10z" fill="#000"/></svg>
<div style="left:24px;top:2px;width:6px;height:13px;background:linear-gradient(90deg,#5d6172,#a9adbd 55%,#6c7082);border:1px solid #08080a;border-radius:0 2px 2px 0;"></div>
<div style="left:37px;top:2px;width:12px;height:9px;background:#6a6e7e;border:1px solid #444854;border-radius:3px;box-shadow:inset 0 0 0 1px #7c8092;"></div>
<div style="left:41px;top:5px;width:5px;height:3px;background:#8c90a2;"></div>
<div class="btn" style="left:7px;top:17px;width:18px;height:13px;border-color:#08080a;"><div class="px" style="left:0;top:1.5px;width:16px;letter-spacing:0;font-weight:bold;font-size:8.5px;transform:scaleX(1.15)">M</div></div>
<div class="btn" style="left:29px;top:17px;width:18px;height:13px;border-color:#08080a;"><div class="px" style="left:0;top:1.5px;width:16px;letter-spacing:0;font-weight:bold;font-size:8.5px;transform:scaleX(1.15)">S</div></div>
<div style="left:5px;top:33px;width:44px;height:12px;background:#8085a0;border-top:1px solid #969bb2;"></div>
<div style="left:0px;top:44px;width:54px;height:15px;background:#8085a0;"></div>
<div style="left:0px;top:59px;width:54px;height:1px;background:#5e6276;"></div>
<svg style="left:0px;top:0px;" width="54" height="62" viewBox="0 0 54 62"><clipPath id="pc3"><rect x="0" y="30" width="54" height="26.8"/></clipPath><circle cx="27" cy="46" r="14.4" fill="#050505" clip-path="url(#pc3)"/><path d="M27.00 33.60A12.4 12.4 0 0 0 24.21 33.92" fill="none" stroke="#e3121c" stroke-width="2.8"/><circle cx="27" cy="46" r="10.3" fill="url(#ko)"/><circle cx="27" cy="46" r="7.62" fill="url(#ki)"/><path d="M26.72 44.80L25.38 38.98" stroke="#1a1a1a" stroke-width="1.5" stroke-linecap="round"/><rect x="25.3" y="31.6" width="3.6" height="2.2" fill="#d8dae4"/></svg>
<div style="left:5px;top:48px;width:9px;height:9px;background:#050505;"><div class="t" style="left:1.5px;top:0.5px;font-size:8.5px;font-weight:bold;color:#fff;transform:scaleX(1.1);transform-origin:0 0">L</div></div>
<div style="left:40px;top:48px;width:9px;height:9px;background:#050505;"><div class="t" style="left:1.5px;top:0.5px;font-size:8.5px;font-weight:bold;color:#fff;transform:scaleX(1.1);transform-origin:0 0">R</div></div>
<div style="left:0px;top:61px;width:54px;height:189px;background:#4b4f5d;box-shadow:inset 1px 1px 0 #5e6274,inset -1px -1px 0 #363944;"></div>
<svg style="left:0px;top:0px;" width="54" height="110" viewBox="0 0 54 110"><circle cx="16.8" cy="71.7" r="8.3" fill="url(#so)"/><circle cx="16.8" cy="71.7" r="7" fill="#474a54"/><circle cx="16.8" cy="71.7" r="6.2" fill="url(#si)"/><path d="M16.3 72.2L12.200000000000001 76.3" stroke="#33363e" stroke-width="1.4"/><circle cx="37.8" cy="71.7" r="8.3" fill="url(#so)"/><circle cx="37.8" cy="71.7" r="7" fill="#474a54"/><circle cx="37.8" cy="71.7" r="6.2" fill="url(#si)"/><path d="M37.3 72.2L33.199999999999996 76.3" stroke="#33363e" stroke-width="1.4"/><circle cx="16.8" cy="91.6" r="8.3" fill="url(#so)"/><circle cx="16.8" cy="91.6" r="7" fill="#474a54"/><circle cx="16.8" cy="91.6" r="6.2" fill="url(#si)"/><path d="M16.3 92.1L12.200000000000001 96.19999999999999" stroke="#33363e" stroke-width="1.4"/><circle cx="37.8" cy="91.6" r="8.3" fill="url(#so)"/><circle cx="37.8" cy="91.6" r="7" fill="#474a54"/><circle cx="37.8" cy="91.6" r="6.2" fill="url(#si)"/><path d="M37.3 92.1L33.199999999999996 96.19999999999999" stroke="#33363e" stroke-width="1.4"/></svg>
<div style="left:5px;top:103px;width:45px;height:146px;border:1px solid #30323c;box-shadow:inset 1px 1px 0 #3a3d48, 1px 1px 0 #686c7e;background:#4b4f5d;"></div>
<div style="left:9px;top:106px;width:37px;height:15px;background:#3a3d49;"></div>
<div style="left:11px;top:108px;width:33px;height:11px;background:#5ea0f2;overflow:hidden;background-image:linear-gradient(90deg,transparent 12px,rgba(160,205,255,.5) 12px 13px,transparent 13px);"><div class="lcd" style="left:0;width:33px;text-align:center;top:0.0px;font-size:11.5px;letter-spacing:1.1px;font-style:italic;color:#12306a">0,00</div></div>
<div style="left:10px;top:123px;width:35px;height:2px;background:repeating-linear-gradient(90deg,#8d91a3 0 1px,transparent 1px 3px);"></div>
<div style="left:22px;top:129px;width:8px;height:114px;background:#0c0d10;border-radius:2px;"></div>
<div style="left:23px;top:131px;width:6px;height:110px;background:repeating-linear-gradient(#42444c 0 1px,#2a2c33 1px 2px);"></div>
<div style="left:36px;top:129px;width:8px;height:114px;background:#0c0d10;border-radius:2px;"></div>
<div style="left:37px;top:131px;width:6px;height:110px;background:repeating-linear-gradient(#42444c 0 1px,#2a2c33 1px 2px);"></div>
<div style="left:31px;top:131px;width:1px;height:110px;background:#2a2c35;"></div>
<div style="left:34px;top:131px;width:1px;height:110px;background:#8a8ea0;"></div>
</div>
<svg style="left:452px;top:640px;" width="13" height="28" viewBox="0 0 13 28"><rect x="0" y="0" width="13" height="28" rx="1.5" fill="#8e919c"/><rect x="1" y="4" width="11" height="1" fill="#b2b5be"/><rect x="1" y="6" width="11" height="1" fill="#747782"/><rect x="1" y="8" width="11" height="1" fill="#b2b5be"/><rect x="1" y="10" width="11" height="1" fill="#747782"/><rect x="1" y="12" width="11" height="1" fill="#b2b5be"/><rect x="1" y="14" width="11" height="1" fill="#747782"/><rect x="1" y="16" width="11" height="1" fill="#b2b5be"/><rect x="1" y="18" width="11" height="1" fill="#747782"/><rect x="1" y="20" width="11" height="1" fill="#b2b5be"/><rect x="1" y="22" width="11" height="1" fill="#747782"/><rect x="1" y="24" width="11" height="1" fill="#b2b5be"/><rect x="1" y="1" width="11" height="2.5" fill="#bcbfc8"/><rect x="1" y="24.5" width="11" height="2.5" fill="#6c6f7a"/><rect x="0.5" y="0.5" width="12" height="27" rx="1.5" fill="none" stroke="#5c5f6a" stroke-width="1"/></svg>
<div style="left:425px;top:473px;width:54px;height:250px;overflow:hidden;pointer-events:none">
<div class="t" style="left:5px;top:240px;transform-origin:0 0;transform:rotate(-90deg);font-size:16px;color:#e6e6e6;letter-spacing:0.15px;">Snare Rimshot</div>
<div style="left:5px;top:242px;width:13px;height:5px;background:#8085a0;border-radius:0 2px 0 0;"></div>
</div>
<div style="left:481px;top:473px;width:54px;height:250px;overflow:hidden;">
<div style="left:0px;top:0px;width:54px;height:60px;background:#585c6b;box-shadow:inset 1px 1px 0 #6c7084,inset -1px -1px 0 #3c3f4b;"></div>
<div class="btn" style="left:7px;top:2px;width:18px;height:13px;border-color:#08080a;"></div>
<svg style="left:7px;top:2px;" width="18" height="13" viewBox="0 0 18 13"><path d="M6.5 3L11.5 6.5L6.5 10z" fill="#000"/></svg>
<div style="left:24px;top:2px;width:6px;height:13px;background:linear-gradient(90deg,#5d6172,#a9adbd 55%,#6c7082);border:1px solid #08080a;border-radius:0 2px 2px 0;"></div>
<div style="left:37px;top:2px;width:12px;height:9px;background:#6a6e7e;border:1px solid #444854;border-radius:3px;box-shadow:inset 0 0 0 1px #7c8092;"></div>
<div style="left:41px;top:5px;width:5px;height:3px;background:#8c90a2;"></div>
<div class="btn" style="left:7px;top:17px;width:18px;height:13px;border-color:#08080a;"><div class="px" style="left:0;top:1.5px;width:16px;letter-spacing:0;font-weight:bold;font-size:8.5px;transform:scaleX(1.15)">M</div></div>
<div class="btn" style="left:29px;top:17px;width:18px;height:13px;border-color:#08080a;"><div class="px" style="left:0;top:1.5px;width:16px;letter-spacing:0;font-weight:bold;font-size:8.5px;transform:scaleX(1.15)">S</div></div>
<div style="left:5px;top:33px;width:44px;height:12px;background:#8085a0;border-top:1px solid #969bb2;"></div>
<div style="left:0px;top:44px;width:54px;height:15px;background:#8085a0;"></div>
<div style="left:0px;top:59px;width:54px;height:1px;background:#5e6276;"></div>
<svg style="left:0px;top:0px;" width="54" height="62" viewBox="0 0 54 62"><clipPath id="pc4"><rect x="0" y="30" width="54" height="26.8"/></clipPath><circle cx="27" cy="46" r="14.4" fill="#050505" clip-path="url(#pc4)"/><path d="M27.00 33.60A12.4 12.4 0 0 0 22.35 34.50" fill="none" stroke="#e3121c" stroke-width="2.8"/><circle cx="27" cy="46" r="10.3" fill="url(#ko)"/><circle cx="27" cy="46" r="7.62" fill="url(#ki)"/><path d="M26.54 44.85L24.30 39.32" stroke="#1a1a1a" stroke-width="1.5" stroke-linecap="round"/><rect x="25.3" y="31.6" width="3.6" height="2.2" fill="#d8dae4"/></svg>
<div style="left:5px;top:48px;width:9px;height:9px;background:#050505;"><div class="t" style="left:1.5px;top:0.5px;font-size:8.5px;font-weight:bold;color:#fff;transform:scaleX(1.1);transform-origin:0 0">L</div></div>
<div style="left:40px;top:48px;width:9px;height:9px;background:#050505;"><div class="t" style="left:1.5px;top:0.5px;font-size:8.5px;font-weight:bold;color:#fff;transform:scaleX(1.1);transform-origin:0 0">R</div></div>
<div style="left:0px;top:61px;width:54px;height:189px;background:#4b4f5d;box-shadow:inset 1px 1px 0 #5e6274,inset -1px -1px 0 #363944;"></div>
<svg style="left:0px;top:0px;" width="54" height="110" viewBox="0 0 54 110"><circle cx="16.8" cy="71.7" r="8.3" fill="url(#so)"/><circle cx="16.8" cy="71.7" r="7" fill="#474a54"/><circle cx="16.8" cy="71.7" r="6.2" fill="url(#si)"/><path d="M16.3 72.2L12.200000000000001 76.3" stroke="#33363e" stroke-width="1.4"/><circle cx="37.8" cy="71.7" r="8.3" fill="url(#so)"/><circle cx="37.8" cy="71.7" r="7" fill="#474a54"/><circle cx="37.8" cy="71.7" r="6.2" fill="url(#si)"/><path d="M37.3 72.2L33.199999999999996 76.3" stroke="#33363e" stroke-width="1.4"/><circle cx="16.8" cy="91.6" r="8.3" fill="url(#so)"/><circle cx="16.8" cy="91.6" r="7" fill="#474a54"/><circle cx="16.8" cy="91.6" r="6.2" fill="url(#si)"/><path d="M16.3 92.1L12.200000000000001 96.19999999999999" stroke="#33363e" stroke-width="1.4"/><circle cx="37.8" cy="91.6" r="8.3" fill="url(#so)"/><circle cx="37.8" cy="91.6" r="7" fill="#474a54"/><circle cx="37.8" cy="91.6" r="6.2" fill="url(#si)"/><path d="M37.3 92.1L33.199999999999996 96.19999999999999" stroke="#33363e" stroke-width="1.4"/></svg>
<div style="left:5px;top:103px;width:45px;height:146px;border:1px solid #30323c;box-shadow:inset 1px 1px 0 #3a3d48, 1px 1px 0 #686c7e;background:#4b4f5d;"></div>
<div style="left:9px;top:106px;width:37px;height:15px;background:#3a3d49;"></div>
<div style="left:11px;top:108px;width:33px;height:11px;background:#5ea0f2;overflow:hidden;background-image:linear-gradient(90deg,transparent 12px,rgba(160,205,255,.5) 12px 13px,transparent 13px);"><div class="lcd" style="left:0;width:33px;text-align:center;top:0.0px;font-size:11.5px;letter-spacing:1.1px;font-style:italic;color:#12306a">0,00</div></div>
<div style="left:10px;top:123px;width:35px;height:2px;background:repeating-linear-gradient(90deg,#8d91a3 0 1px,transparent 1px 3px);"></div>
<div style="left:22px;top:129px;width:8px;height:114px;background:#0c0d10;border-radius:2px;"></div>
<div style="left:23px;top:131px;width:6px;height:110px;background:repeating-linear-gradient(#42444c 0 1px,#2a2c33 1px 2px);"></div>
<div style="left:36px;top:129px;width:8px;height:114px;background:#0c0d10;border-radius:2px;"></div>
<div style="left:37px;top:131px;width:6px;height:110px;background:repeating-linear-gradient(#42444c 0 1px,#2a2c33 1px 2px);"></div>
<div style="left:31px;top:131px;width:1px;height:110px;background:#2a2c35;"></div>
<div style="left:34px;top:131px;width:1px;height:110px;background:#8a8ea0;"></div>
</div>
<svg style="left:508px;top:644px;" width="13" height="28" viewBox="0 0 13 28"><rect x="0" y="0" width="13" height="28" rx="1.5" fill="#8e919c"/><rect x="1" y="4" width="11" height="1" fill="#b2b5be"/><rect x="1" y="6" width="11" height="1" fill="#747782"/><rect x="1" y="8" width="11" height="1" fill="#b2b5be"/><rect x="1" y="10" width="11" height="1" fill="#747782"/><rect x="1" y="12" width="11" height="1" fill="#b2b5be"/><rect x="1" y="14" width="11" height="1" fill="#747782"/><rect x="1" y="16" width="11" height="1" fill="#b2b5be"/><rect x="1" y="18" width="11" height="1" fill="#747782"/><rect x="1" y="20" width="11" height="1" fill="#b2b5be"/><rect x="1" y="22" width="11" height="1" fill="#747782"/><rect x="1" y="24" width="11" height="1" fill="#b2b5be"/><rect x="1" y="1" width="11" height="2.5" fill="#bcbfc8"/><rect x="1" y="24.5" width="11" height="2.5" fill="#6c6f7a"/><rect x="0.5" y="0.5" width="12" height="27" rx="1.5" fill="none" stroke="#5c5f6a" stroke-width="1"/></svg>
<div style="left:481px;top:473px;width:54px;height:250px;overflow:hidden;pointer-events:none">
<div class="t" style="left:5px;top:240px;transform-origin:0 0;transform:rotate(-90deg);font-size:16px;color:#e6e6e6;letter-spacing:0.15px;">Snare Jazz</div>
<div style="left:5px;top:242px;width:13px;height:5px;background:#8085a0;border-radius:0 2px 0 0;"></div>
</div>
<div style="left:537px;top:473px;width:54px;height:250px;overflow:hidden;">
<div style="left:0px;top:0px;width:54px;height:60px;background:#585c6b;box-shadow:inset 1px 1px 0 #6c7084,inset -1px -1px 0 #3c3f4b;"></div>
<div class="btn" style="left:7px;top:2px;width:18px;height:13px;border-color:#08080a;"></div>
<svg style="left:7px;top:2px;" width="18" height="13" viewBox="0 0 18 13"><path d="M6.5 3L11.5 6.5L6.5 10z" fill="#000"/></svg>
<div style="left:24px;top:2px;width:6px;height:13px;background:linear-gradient(90deg,#5d6172,#a9adbd 55%,#6c7082);border:1px solid #08080a;border-radius:0 2px 2px 0;"></div>
<div style="left:37px;top:2px;width:12px;height:9px;background:#6a6e7e;border:1px solid #444854;border-radius:3px;box-shadow:inset 0 0 0 1px #7c8092;"></div>
<div style="left:41px;top:5px;width:5px;height:3px;background:#8c90a2;"></div>
<div class="btn" style="left:7px;top:17px;width:18px;height:13px;border-color:#08080a;"><div class="px" style="left:0;top:1.5px;width:16px;letter-spacing:0;font-weight:bold;font-size:8.5px;transform:scaleX(1.15)">M</div></div>
<div class="btn" style="left:29px;top:17px;width:18px;height:13px;border-color:#08080a;"><div class="px" style="left:0;top:1.5px;width:16px;letter-spacing:0;font-weight:bold;font-size:8.5px;transform:scaleX(1.15)">S</div></div>
<div style="left:5px;top:33px;width:44px;height:12px;background:#8085a0;border-top:1px solid #969bb2;"></div>
<div style="left:0px;top:44px;width:54px;height:15px;background:#8085a0;"></div>
<div style="left:0px;top:59px;width:54px;height:1px;background:#5e6276;"></div>
<svg style="left:0px;top:0px;" width="54" height="62" viewBox="0 0 54 62"><clipPath id="pc5"><rect x="0" y="30" width="54" height="26.8"/></clipPath><circle cx="27" cy="46" r="14.4" fill="#050505" clip-path="url(#pc5)"/><path d="M27.00 33.60A12.4 12.4 0 0 0 19.37 36.23" fill="none" stroke="#e3121c" stroke-width="2.8"/><circle cx="27" cy="46" r="10.3" fill="url(#ko)"/><circle cx="27" cy="46" r="7.62" fill="url(#ki)"/><path d="M26.24 45.03L22.57 40.33" stroke="#1a1a1a" stroke-width="1.5" stroke-linecap="round"/><rect x="25.3" y="31.6" width="3.6" height="2.2" fill="#d8dae4"/></svg>
<div style="left:5px;top:48px;width:9px;height:9px;background:#050505;"><div class="t" style="left:1.5px;top:0.5px;font-size:8.5px;font-weight:bold;color:#fff;transform:scaleX(1.1);transform-origin:0 0">L</div></div>
<div style="left:40px;top:48px;width:9px;height:9px;background:#050505;"><div class="t" style="left:1.5px;top:0.5px;font-size:8.5px;font-weight:bold;color:#fff;transform:scaleX(1.1);transform-origin:0 0">R</div></div>
<div style="left:0px;top:61px;width:54px;height:189px;background:#4b4f5d;box-shadow:inset 1px 1px 0 #5e6274,inset -1px -1px 0 #363944;"></div>
<svg style="left:0px;top:0px;" width="54" height="110" viewBox="0 0 54 110"><circle cx="16.8" cy="71.7" r="8.3" fill="url(#so)"/><circle cx="16.8" cy="71.7" r="7" fill="#474a54"/><circle cx="16.8" cy="71.7" r="6.2" fill="url(#si)"/><path d="M16.3 72.2L12.200000000000001 76.3" stroke="#33363e" stroke-width="1.4"/><circle cx="37.8" cy="71.7" r="8.3" fill="url(#so)"/><circle cx="37.8" cy="71.7" r="7" fill="#474a54"/><circle cx="37.8" cy="71.7" r="6.2" fill="url(#si)"/><path d="M37.3 72.2L33.199999999999996 76.3" stroke="#33363e" stroke-width="1.4"/><circle cx="16.8" cy="91.6" r="8.3" fill="url(#so)"/><circle cx="16.8" cy="91.6" r="7" fill="#474a54"/><circle cx="16.8" cy="91.6" r="6.2" fill="url(#si)"/><path d="M16.3 92.1L12.200000000000001 96.19999999999999" stroke="#33363e" stroke-width="1.4"/><circle cx="37.8" cy="91.6" r="8.3" fill="url(#so)"/><circle cx="37.8" cy="91.6" r="7" fill="#474a54"/><circle cx="37.8" cy="91.6" r="6.2" fill="url(#si)"/><path d="M37.3 92.1L33.199999999999996 96.19999999999999" stroke="#33363e" stroke-width="1.4"/></svg>
<div style="left:5px;top:103px;width:45px;height:146px;border:1px solid #30323c;box-shadow:inset 1px 1px 0 #3a3d48, 1px 1px 0 #686c7e;background:#4b4f5d;"></div>
<div style="left:9px;top:106px;width:37px;height:15px;background:#3a3d49;"></div>
<div style="left:11px;top:108px;width:33px;height:11px;background:#5ea0f2;overflow:hidden;background-image:linear-gradient(90deg,transparent 12px,rgba(160,205,255,.5) 12px 13px,transparent 13px);"><div class="lcd" style="left:0;width:33px;text-align:center;top:0.0px;font-size:11.5px;letter-spacing:1.1px;font-style:italic;color:#12306a">0,00</div></div>
<div style="left:10px;top:123px;width:35px;height:2px;background:repeating-linear-gradient(90deg,#8d91a3 0 1px,transparent 1px 3px);"></div>
<div style="left:22px;top:129px;width:8px;height:114px;background:#0c0d10;border-radius:2px;"></div>
<div style="left:23px;top:131px;width:6px;height:110px;background:repeating-linear-gradient(#42444c 0 1px,#2a2c33 1px 2px);"></div>
<div style="left:36px;top:129px;width:8px;height:114px;background:#0c0d10;border-radius:2px;"></div>
<div style="left:37px;top:131px;width:6px;height:110px;background:repeating-linear-gradient(#42444c 0 1px,#2a2c33 1px 2px);"></div>
<div style="left:31px;top:131px;width:1px;height:110px;background:#2a2c35;"></div>
<div style="left:34px;top:131px;width:1px;height:110px;background:#8a8ea0;"></div>
</div>
<svg style="left:564px;top:671px;" width="13" height="28" viewBox="0 0 13 28"><rect x="0" y="0" width="13" height="28" rx="1.5" fill="#8e919c"/><rect x="1" y="4" width="11" height="1" fill="#b2b5be"/><rect x="1" y="6" width="11" height="1" fill="#747782"/><rect x="1" y="8" width="11" height="1" fill="#b2b5be"/><rect x="1" y="10" width="11" height="1" fill="#747782"/><rect x="1" y="12" width="11" height="1" fill="#b2b5be"/><rect x="1" y="14" width="11" height="1" fill="#747782"/><rect x="1" y="16" width="11" height="1" fill="#b2b5be"/><rect x="1" y="18" width="11" height="1" fill="#747782"/><rect x="1" y="20" width="11" height="1" fill="#b2b5be"/><rect x="1" y="22" width="11" height="1" fill="#747782"/><rect x="1" y="24" width="11" height="1" fill="#b2b5be"/><rect x="1" y="1" width="11" height="2.5" fill="#bcbfc8"/><rect x="1" y="24.5" width="11" height="2.5" fill="#6c6f7a"/><rect x="0.5" y="0.5" width="12" height="27" rx="1.5" fill="none" stroke="#5c5f6a" stroke-width="1"/></svg>
<div style="left:537px;top:473px;width:54px;height:250px;overflow:hidden;pointer-events:none">
<div class="t" style="left:5px;top:240px;transform-origin:0 0;transform:rotate(-90deg);font-size:16px;color:#e6e6e6;letter-spacing:0.15px;">HH Tip</div>
<div style="left:5px;top:242px;width:13px;height:5px;background:#8085a0;border-radius:0 2px 0 0;"></div>
</div>
<div style="left:593px;top:473px;width:54px;height:250px;overflow:hidden;">
<div style="left:0px;top:0px;width:54px;height:60px;background:#585c6b;box-shadow:inset 1px 1px 0 #6c7084,inset -1px -1px 0 #3c3f4b;"></div>
<div class="btn" style="left:7px;top:2px;width:18px;height:13px;border-color:#08080a;"></div>
<svg style="left:7px;top:2px;" width="18" height="13" viewBox="0 0 18 13"><path d="M6.5 3L11.5 6.5L6.5 10z" fill="#000"/></svg>
<div style="left:24px;top:2px;width:6px;height:13px;background:linear-gradient(90deg,#5d6172,#a9adbd 55%,#6c7082);border:1px solid #08080a;border-radius:0 2px 2px 0;"></div>
<div style="left:37px;top:2px;width:12px;height:9px;background:#6a6e7e;border:1px solid #444854;border-radius:3px;box-shadow:inset 0 0 0 1px #7c8092;"></div>
<div style="left:41px;top:5px;width:5px;height:3px;background:#8c90a2;"></div>
<div class="btn" style="left:7px;top:17px;width:18px;height:13px;border-color:#08080a;"><div class="px" style="left:0;top:1.5px;width:16px;letter-spacing:0;font-weight:bold;font-size:8.5px;transform:scaleX(1.15)">M</div></div>
<div class="btn" style="left:29px;top:17px;width:18px;height:13px;border-color:#08080a;"><div class="px" style="left:0;top:1.5px;width:16px;letter-spacing:0;font-weight:bold;font-size:8.5px;transform:scaleX(1.15)">S</div></div>
<div style="left:5px;top:33px;width:44px;height:12px;background:#8085a0;border-top:1px solid #969bb2;"></div>
<div style="left:0px;top:44px;width:54px;height:15px;background:#8085a0;"></div>
<div style="left:0px;top:59px;width:54px;height:1px;background:#5e6276;"></div>
<svg style="left:0px;top:0px;" width="54" height="62" viewBox="0 0 54 62"><clipPath id="pc6"><rect x="0" y="30" width="54" height="26.8"/></clipPath><circle cx="27" cy="46" r="14.4" fill="#050505" clip-path="url(#pc6)"/><path d="M27.00 33.60A12.4 12.4 0 0 0 19.37 36.23" fill="none" stroke="#e3121c" stroke-width="2.8"/><circle cx="27" cy="46" r="10.3" fill="url(#ko)"/><circle cx="27" cy="46" r="7.62" fill="url(#ki)"/><path d="M26.24 45.03L22.57 40.33" stroke="#1a1a1a" stroke-width="1.5" stroke-linecap="round"/><rect x="25.3" y="31.6" width="3.6" height="2.2" fill="#d8dae4"/></svg>
<div style="left:5px;top:48px;width:9px;height:9px;background:#050505;"><div class="t" style="left:1.5px;top:0.5px;font-size:8.5px;font-weight:bold;color:#fff;transform:scaleX(1.1);transform-origin:0 0">L</div></div>
<div style="left:40px;top:48px;width:9px;height:9px;background:#050505;"><div class="t" style="left:1.5px;top:0.5px;font-size:8.5px;font-weight:bold;color:#fff;transform:scaleX(1.1);transform-origin:0 0">R</div></div>
<div style="left:0px;top:61px;width:54px;height:189px;background:#4b4f5d;box-shadow:inset 1px 1px 0 #5e6274,inset -1px -1px 0 #363944;"></div>
<svg style="left:0px;top:0px;" width="54" height="110" viewBox="0 0 54 110"><circle cx="16.8" cy="71.7" r="8.3" fill="url(#so)"/><circle cx="16.8" cy="71.7" r="7" fill="#474a54"/><circle cx="16.8" cy="71.7" r="6.2" fill="url(#si)"/><path d="M16.3 72.2L12.200000000000001 76.3" stroke="#33363e" stroke-width="1.4"/><circle cx="37.8" cy="71.7" r="8.3" fill="url(#so)"/><circle cx="37.8" cy="71.7" r="7" fill="#474a54"/><circle cx="37.8" cy="71.7" r="6.2" fill="url(#si)"/><path d="M37.3 72.2L33.199999999999996 76.3" stroke="#33363e" stroke-width="1.4"/><circle cx="16.8" cy="91.6" r="8.3" fill="url(#so)"/><circle cx="16.8" cy="91.6" r="7" fill="#474a54"/><circle cx="16.8" cy="91.6" r="6.2" fill="url(#si)"/><path d="M16.3 92.1L12.200000000000001 96.19999999999999" stroke="#33363e" stroke-width="1.4"/><circle cx="37.8" cy="91.6" r="8.3" fill="url(#so)"/><circle cx="37.8" cy="91.6" r="7" fill="#474a54"/><circle cx="37.8" cy="91.6" r="6.2" fill="url(#si)"/><path d="M37.3 92.1L33.199999999999996 96.19999999999999" stroke="#33363e" stroke-width="1.4"/></svg>
<div style="left:5px;top:103px;width:45px;height:146px;border:1px solid #30323c;box-shadow:inset 1px 1px 0 #3a3d48, 1px 1px 0 #686c7e;background:#4b4f5d;"></div>
<div style="left:9px;top:106px;width:37px;height:15px;background:#3a3d49;"></div>
<div style="left:11px;top:108px;width:33px;height:11px;background:#5ea0f2;overflow:hidden;background-image:linear-gradient(90deg,transparent 12px,rgba(160,205,255,.5) 12px 13px,transparent 13px);"><div class="lcd" style="left:0;width:33px;text-align:center;top:0.0px;font-size:11.5px;letter-spacing:1.1px;font-style:italic;color:#12306a">0,00</div></div>
<div style="left:10px;top:123px;width:35px;height:2px;background:repeating-linear-gradient(90deg,#8d91a3 0 1px,transparent 1px 3px);"></div>
<div style="left:22px;top:129px;width:8px;height:114px;background:#0c0d10;border-radius:2px;"></div>
<div style="left:23px;top:131px;width:6px;height:110px;background:repeating-linear-gradient(#42444c 0 1px,#2a2c33 1px 2px);"></div>
<div style="left:36px;top:129px;width:8px;height:114px;background:#0c0d10;border-radius:2px;"></div>
<div style="left:37px;top:131px;width:6px;height:110px;background:repeating-linear-gradient(#42444c 0 1px,#2a2c33 1px 2px);"></div>
<div style="left:31px;top:131px;width:1px;height:110px;background:#2a2c35;"></div>
<div style="left:34px;top:131px;width:1px;height:110px;background:#8a8ea0;"></div>
</div>
<svg style="left:620px;top:651px;" width="13" height="28" viewBox="0 0 13 28"><rect x="0" y="0" width="13" height="28" rx="1.5" fill="#8e919c"/><rect x="1" y="4" width="11" height="1" fill="#b2b5be"/><rect x="1" y="6" width="11" height="1" fill="#747782"/><rect x="1" y="8" width="11" height="1" fill="#b2b5be"/><rect x="1" y="10" width="11" height="1" fill="#747782"/><rect x="1" y="12" width="11" height="1" fill="#b2b5be"/><rect x="1" y="14" width="11" height="1" fill="#747782"/><rect x="1" y="16" width="11" height="1" fill="#b2b5be"/><rect x="1" y="18" width="11" height="1" fill="#747782"/><rect x="1" y="20" width="11" height="1" fill="#b2b5be"/><rect x="1" y="22" width="11" height="1" fill="#747782"/><rect x="1" y="24" width="11" height="1" fill="#b2b5be"/><rect x="1" y="1" width="11" height="2.5" fill="#bcbfc8"/><rect x="1" y="24.5" width="11" height="2.5" fill="#6c6f7a"/><rect x="0.5" y="0.5" width="12" height="27" rx="1.5" fill="none" stroke="#5c5f6a" stroke-width="1"/></svg>
<div style="left:593px;top:473px;width:54px;height:250px;overflow:hidden;pointer-events:none">
<div class="t" style="left:5px;top:240px;transform-origin:0 0;transform:rotate(-90deg);font-size:16px;color:#e6e6e6;letter-spacing:0.15px;">HH Shoulder</div>
<div style="left:5px;top:242px;width:13px;height:5px;background:#8085a0;border-radius:0 2px 0 0;"></div>
</div>
<div style="left:649px;top:473px;width:54px;height:250px;overflow:hidden;">
<div style="left:0px;top:0px;width:54px;height:60px;background:#585c6b;box-shadow:inset 1px 1px 0 #6c7084,inset -1px -1px 0 #3c3f4b;"></div>
<div class="btn" style="left:7px;top:2px;width:18px;height:13px;border-color:#08080a;"></div>
<svg style="left:7px;top:2px;" width="18" height="13" viewBox="0 0 18 13"><path d="M6.5 3L11.5 6.5L6.5 10z" fill="#000"/></svg>
<div style="left:24px;top:2px;width:6px;height:13px;background:linear-gradient(90deg,#5d6172,#a9adbd 55%,#6c7082);border:1px solid #08080a;border-radius:0 2px 2px 0;"></div>
<div style="left:37px;top:2px;width:12px;height:9px;background:#6a6e7e;border:1px solid #444854;border-radius:3px;box-shadow:inset 0 0 0 1px #7c8092;"></div>
<div style="left:41px;top:5px;width:5px;height:3px;background:#8c90a2;"></div>
<div class="btn" style="left:7px;top:17px;width:18px;height:13px;border-color:#08080a;"><div class="px" style="left:0;top:1.5px;width:16px;letter-spacing:0;font-weight:bold;font-size:8.5px;transform:scaleX(1.15)">M</div></div>
<div class="btn" style="left:29px;top:17px;width:18px;height:13px;border-color:#08080a;"><div class="px" style="left:0;top:1.5px;width:16px;letter-spacing:0;font-weight:bold;font-size:8.5px;transform:scaleX(1.15)">S</div></div>
<div style="left:5px;top:33px;width:44px;height:12px;background:#8085a0;border-top:1px solid #969bb2;"></div>
<div style="left:0px;top:44px;width:54px;height:15px;background:#8085a0;"></div>
<div style="left:0px;top:59px;width:54px;height:1px;background:#5e6276;"></div>
<svg style="left:0px;top:0px;" width="54" height="62" viewBox="0 0 54 62"><clipPath id="pc7"><rect x="0" y="30" width="54" height="26.8"/></clipPath><circle cx="27" cy="46" r="14.4" fill="#050505" clip-path="url(#pc7)"/><path d="M27.00 33.60A12.4 12.4 0 0 0 21.37 34.95" fill="none" stroke="#e3121c" stroke-width="2.8"/><circle cx="27" cy="46" r="10.3" fill="url(#ko)"/><circle cx="27" cy="46" r="7.62" fill="url(#ki)"/><path d="M26.44 44.90L23.73 39.58" stroke="#1a1a1a" stroke-width="1.5" stroke-linecap="round"/><rect x="25.3" y="31.6" width="3.6" height="2.2" fill="#d8dae4"/></svg>
<div style="left:5px;top:48px;width:9px;height:9px;background:#050505;"><div class="t" style="left:1.5px;top:0.5px;font-size:8.5px;font-weight:bold;color:#fff;transform:scaleX(1.1);transform-origin:0 0">L</div></div>
<div style="left:40px;top:48px;width:9px;height:9px;background:#050505;"><div class="t" style="left:1.5px;top:0.5px;font-size:8.5px;font-weight:bold;color:#fff;transform:scaleX(1.1);transform-origin:0 0">R</div></div>
<div style="left:0px;top:61px;width:54px;height:189px;background:#4b4f5d;box-shadow:inset 1px 1px 0 #5e6274,inset -1px -1px 0 #363944;"></div>
<svg style="left:0px;top:0px;" width="54" height="110" viewBox="0 0 54 110"><circle cx="16.8" cy="71.7" r="8.3" fill="url(#so)"/><circle cx="16.8" cy="71.7" r="7" fill="#474a54"/><circle cx="16.8" cy="71.7" r="6.2" fill="url(#si)"/><path d="M16.3 72.2L12.200000000000001 76.3" stroke="#33363e" stroke-width="1.4"/><circle cx="37.8" cy="71.7" r="8.3" fill="url(#so)"/><circle cx="37.8" cy="71.7" r="7" fill="#474a54"/><circle cx="37.8" cy="71.7" r="6.2" fill="url(#si)"/><path d="M37.3 72.2L33.199999999999996 76.3" stroke="#33363e" stroke-width="1.4"/><circle cx="16.8" cy="91.6" r="8.3" fill="url(#so)"/><circle cx="16.8" cy="91.6" r="7" fill="#474a54"/><circle cx="16.8" cy="91.6" r="6.2" fill="url(#si)"/><path d="M16.3 92.1L12.200000000000001 96.19999999999999" stroke="#33363e" stroke-width="1.4"/><circle cx="37.8" cy="91.6" r="8.3" fill="url(#so)"/><circle cx="37.8" cy="91.6" r="7" fill="#474a54"/><circle cx="37.8" cy="91.6" r="6.2" fill="url(#si)"/><path d="M37.3 92.1L33.199999999999996 96.19999999999999" stroke="#33363e" stroke-width="1.4"/></svg>
<div style="left:5px;top:103px;width:45px;height:146px;border:1px solid #30323c;box-shadow:inset 1px 1px 0 #3a3d48, 1px 1px 0 #686c7e;background:#4b4f5d;"></div>
<div style="left:9px;top:106px;width:37px;height:15px;background:#3a3d49;"></div>
<div style="left:11px;top:108px;width:33px;height:11px;background:#5ea0f2;overflow:hidden;background-image:linear-gradient(90deg,transparent 12px,rgba(160,205,255,.5) 12px 13px,transparent 13px);"><div class="lcd" style="left:0;width:33px;text-align:center;top:0.0px;font-size:11.5px;letter-spacing:1.1px;font-style:italic;color:#12306a">0,00</div></div>
<div style="left:10px;top:123px;width:35px;height:2px;background:repeating-linear-gradient(90deg,#8d91a3 0 1px,transparent 1px 3px);"></div>
<div style="left:22px;top:129px;width:8px;height:114px;background:#0c0d10;border-radius:2px;"></div>
<div style="left:23px;top:131px;width:6px;height:110px;background:repeating-linear-gradient(#42444c 0 1px,#2a2c33 1px 2px);"></div>
<div style="left:36px;top:129px;width:8px;height:114px;background:#0c0d10;border-radius:2px;"></div>
<div style="left:37px;top:131px;width:6px;height:110px;background:repeating-linear-gradient(#42444c 0 1px,#2a2c33 1px 2px);"></div>
<div style="left:31px;top:131px;width:1px;height:110px;background:#2a2c35;"></div>
<div style="left:34px;top:131px;width:1px;height:110px;background:#8a8ea0;"></div>
</div>
<svg style="left:676px;top:652px;" width="13" height="28" viewBox="0 0 13 28"><rect x="0" y="0" width="13" height="28" rx="1.5" fill="#8e919c"/><rect x="1" y="4" width="11" height="1" fill="#b2b5be"/><rect x="1" y="6" width="11" height="1" fill="#747782"/><rect x="1" y="8" width="11" height="1" fill="#b2b5be"/><rect x="1" y="10" width="11" height="1" fill="#747782"/><rect x="1" y="12" width="11" height="1" fill="#b2b5be"/><rect x="1" y="14" width="11" height="1" fill="#747782"/><rect x="1" y="16" width="11" height="1" fill="#b2b5be"/><rect x="1" y="18" width="11" height="1" fill="#747782"/><rect x="1" y="20" width="11" height="1" fill="#b2b5be"/><rect x="1" y="22" width="11" height="1" fill="#747782"/><rect x="1" y="24" width="11" height="1" fill="#b2b5be"/><rect x="1" y="1" width="11" height="2.5" fill="#bcbfc8"/><rect x="1" y="24.5" width="11" height="2.5" fill="#6c6f7a"/><rect x="0.5" y="0.5" width="12" height="27" rx="1.5" fill="none" stroke="#5c5f6a" stroke-width="1"/></svg>
<div style="left:649px;top:473px;width:54px;height:250px;overflow:hidden;pointer-events:none">
<div class="t" style="left:5px;top:240px;transform-origin:0 0;transform:rotate(-90deg);font-size:16px;color:#e6e6e6;letter-spacing:0.15px;">HH Closing</div>
<div style="left:5px;top:242px;width:13px;height:5px;background:#8085a0;border-radius:0 2px 0 0;"></div>
</div>
<div style="left:705px;top:473px;width:54px;height:250px;overflow:hidden;">
<div style="left:0px;top:0px;width:54px;height:60px;background:#585c6b;box-shadow:inset 1px 1px 0 #6c7084,inset -1px -1px 0 #3c3f4b;"></div>
<div class="btn" style="left:7px;top:2px;width:18px;height:13px;border-color:#08080a;"></div>
<svg style="left:7px;top:2px;" width="18" height="13" viewBox="0 0 18 13"><path d="M6.5 3L11.5 6.5L6.5 10z" fill="#000"/></svg>
<div style="left:24px;top:2px;width:6px;height:13px;background:linear-gradient(90deg,#5d6172,#a9adbd 55%,#6c7082);border:1px solid #08080a;border-radius:0 2px 2px 0;"></div>
<div style="left:37px;top:2px;width:12px;height:9px;background:#6a6e7e;border:1px solid #444854;border-radius:3px;box-shadow:inset 0 0 0 1px #7c8092;"></div>
<div style="left:41px;top:5px;width:5px;height:3px;background:#8c90a2;"></div>
<div class="btn" style="left:7px;top:17px;width:18px;height:13px;border-color:#08080a;"><div class="px" style="left:0;top:1.5px;width:16px;letter-spacing:0;font-weight:bold;font-size:8.5px;transform:scaleX(1.15)">M</div></div>
<div class="btn" style="left:29px;top:17px;width:18px;height:13px;border-color:#08080a;"><div class="px" style="left:0;top:1.5px;width:16px;letter-spacing:0;font-weight:bold;font-size:8.5px;transform:scaleX(1.15)">S</div></div>
<div style="left:5px;top:33px;width:44px;height:12px;background:#8085a0;border-top:1px solid #969bb2;"></div>
<div style="left:0px;top:44px;width:54px;height:15px;background:#8085a0;"></div>
<div style="left:0px;top:59px;width:54px;height:1px;background:#5e6276;"></div>
<svg style="left:0px;top:0px;" width="54" height="62" viewBox="0 0 54 62"><clipPath id="pc8"><rect x="0" y="30" width="54" height="26.8"/></clipPath><circle cx="27" cy="46" r="14.4" fill="#050505" clip-path="url(#pc8)"/><path d="M27.00 33.60A12.4 12.4 0 0 0 23.79 34.02" fill="none" stroke="#e3121c" stroke-width="2.8"/><circle cx="27" cy="46" r="10.3" fill="url(#ko)"/><circle cx="27" cy="46" r="7.62" fill="url(#ki)"/><path d="M26.68 44.81L25.14 39.05" stroke="#1a1a1a" stroke-width="1.5" stroke-linecap="round"/><rect x="25.3" y="31.6" width="3.6" height="2.2" fill="#d8dae4"/></svg>
<div style="left:5px;top:48px;width:9px;height:9px;background:#050505;"><div class="t" style="left:1.5px;top:0.5px;font-size:8.5px;font-weight:bold;color:#fff;transform:scaleX(1.1);transform-origin:0 0">L</div></div>
<div style="left:40px;top:48px;width:9px;height:9px;background:#050505;"><div class="t" style="left:1.5px;top:0.5px;font-size:8.5px;font-weight:bold;color:#fff;transform:scaleX(1.1);transform-origin:0 0">R</div></div>
<div style="left:0px;top:61px;width:54px;height:189px;background:#4b4f5d;box-shadow:inset 1px 1px 0 #5e6274,inset -1px -1px 0 #363944;"></div>
<svg style="left:0px;top:0px;" width="54" height="110" viewBox="0 0 54 110"><circle cx="16.8" cy="71.7" r="8.3" fill="url(#so)"/><circle cx="16.8" cy="71.7" r="7" fill="#474a54"/><circle cx="16.8" cy="71.7" r="6.2" fill="url(#si)"/><path d="M16.3 72.2L12.200000000000001 76.3" stroke="#33363e" stroke-width="1.4"/><circle cx="37.8" cy="71.7" r="8.3" fill="url(#so)"/><circle cx="37.8" cy="71.7" r="7" fill="#474a54"/><circle cx="37.8" cy="71.7" r="6.2" fill="url(#si)"/><path d="M37.3 72.2L33.199999999999996 76.3" stroke="#33363e" stroke-width="1.4"/><circle cx="16.8" cy="91.6" r="8.3" fill="url(#so)"/><circle cx="16.8" cy="91.6" r="7" fill="#474a54"/><circle cx="16.8" cy="91.6" r="6.2" fill="url(#si)"/><path d="M16.3 92.1L12.200000000000001 96.19999999999999" stroke="#33363e" stroke-width="1.4"/><circle cx="37.8" cy="91.6" r="8.3" fill="url(#so)"/><circle cx="37.8" cy="91.6" r="7" fill="#474a54"/><circle cx="37.8" cy="91.6" r="6.2" fill="url(#si)"/><path d="M37.3 92.1L33.199999999999996 96.19999999999999" stroke="#33363e" stroke-width="1.4"/></svg>
<div style="left:5px;top:103px;width:45px;height:146px;border:1px solid #30323c;box-shadow:inset 1px 1px 0 #3a3d48, 1px 1px 0 #686c7e;background:#4b4f5d;"></div>
<div style="left:9px;top:106px;width:37px;height:15px;background:#3a3d49;"></div>
<div style="left:11px;top:108px;width:33px;height:11px;background:#5ea0f2;overflow:hidden;background-image:linear-gradient(90deg,transparent 12px,rgba(160,205,255,.5) 12px 13px,transparent 13px);"><div class="lcd" style="left:0;width:33px;text-align:center;top:0.0px;font-size:11.5px;letter-spacing:1.1px;font-style:italic;color:#12306a">0,00</div></div>
<div style="left:10px;top:123px;width:35px;height:2px;background:repeating-linear-gradient(90deg,#8d91a3 0 1px,transparent 1px 3px);"></div>
<div style="left:22px;top:129px;width:8px;height:114px;background:#0c0d10;border-radius:2px;"></div>
<div style="left:23px;top:131px;width:6px;height:110px;background:repeating-linear-gradient(#42444c 0 1px,#2a2c33 1px 2px);"></div>
<div style="left:36px;top:129px;width:8px;height:114px;background:#0c0d10;border-radius:2px;"></div>
<div style="left:37px;top:131px;width:6px;height:110px;background:repeating-linear-gradient(#42444c 0 1px,#2a2c33 1px 2px);"></div>
<div style="left:31px;top:131px;width:1px;height:110px;background:#2a2c35;"></div>
<div style="left:34px;top:131px;width:1px;height:110px;background:#8a8ea0;"></div>
</div>
<svg style="left:732px;top:680px;" width="13" height="28" viewBox="0 0 13 28"><rect x="0" y="0" width="13" height="28" rx="1.5" fill="#8e919c"/><rect x="1" y="4" width="11" height="1" fill="#b2b5be"/><rect x="1" y="6" width="11" height="1" fill="#747782"/><rect x="1" y="8" width="11" height="1" fill="#b2b5be"/><rect x="1" y="10" width="11" height="1" fill="#747782"/><rect x="1" y="12" width="11" height="1" fill="#b2b5be"/><rect x="1" y="14" width="11" height="1" fill="#747782"/><rect x="1" y="16" width="11" height="1" fill="#b2b5be"/><rect x="1" y="18" width="11" height="1" fill="#747782"/><rect x="1" y="20" width="11" height="1" fill="#b2b5be"/><rect x="1" y="22" width="11" height="1" fill="#747782"/><rect x="1" y="24" width="11" height="1" fill="#b2b5be"/><rect x="1" y="1" width="11" height="2.5" fill="#bcbfc8"/><rect x="1" y="24.5" width="11" height="2.5" fill="#6c6f7a"/><rect x="0.5" y="0.5" width="12" height="27" rx="1.5" fill="none" stroke="#5c5f6a" stroke-width="1"/></svg>
<div style="left:705px;top:473px;width:54px;height:250px;overflow:hidden;pointer-events:none">
<div class="t" style="left:5px;top:240px;transform-origin:0 0;transform:rotate(-90deg);font-size:16px;color:#e6e6e6;letter-spacing:0.15px;">HH Opened</div>
<div style="left:5px;top:242px;width:13px;height:5px;background:#8085a0;border-radius:0 2px 0 0;"></div>
</div>
<div style="left:761px;top:473px;width:54px;height:250px;overflow:hidden;">
<div style="left:0px;top:0px;width:54px;height:60px;background:#585c6b;box-shadow:inset 1px 1px 0 #6c7084,inset -1px -1px 0 #3c3f4b;"></div>
<div class="btn" style="left:7px;top:2px;width:18px;height:13px;border-color:#08080a;"></div>
<svg style="left:7px;top:2px;" width="18" height="13" viewBox="0 0 18 13"><path d="M6.5 3L11.5 6.5L6.5 10z" fill="#000"/></svg>
<div style="left:24px;top:2px;width:6px;height:13px;background:linear-gradient(90deg,#5d6172,#a9adbd 55%,#6c7082);border:1px solid #08080a;border-radius:0 2px 2px 0;"></div>
<div style="left:37px;top:2px;width:12px;height:9px;background:#2f8fff;border:1px solid #3f7fd8;border-radius:3px;box-shadow:0 0 2px rgba(74,160,255,.8);"></div>
<div style="left:39px;top:4px;width:7px;height:4px;background:#d4eaff;border-radius:1.5px;"></div>
<div class="btn" style="left:7px;top:17px;width:18px;height:13px;border-color:#08080a;"><div class="px" style="left:0;top:1.5px;width:16px;letter-spacing:0;font-weight:bold;font-size:8.5px;transform:scaleX(1.15)">M</div></div>
<div class="btn" style="left:29px;top:17px;width:18px;height:13px;border-color:#08080a;"><div class="px" style="left:0;top:1.5px;width:16px;letter-spacing:0;font-weight:bold;font-size:8.5px;transform:scaleX(1.15)">S</div></div>
<div style="left:5px;top:33px;width:44px;height:12px;background:#8085a0;border-top:1px solid #969bb2;"></div>
<div style="left:0px;top:44px;width:54px;height:15px;background:#8085a0;"></div>
<div style="left:0px;top:59px;width:54px;height:1px;background:#5e6276;"></div>
<svg style="left:0px;top:0px;" width="54" height="62" viewBox="0 0 54 62"><clipPath id="pc9"><rect x="0" y="30" width="54" height="26.8"/></clipPath><circle cx="27" cy="46" r="14.4" fill="#050505" clip-path="url(#pc9)"/><path d="M27.00 33.60A12.4 12.4 0 0 0 15.21 42.17" fill="none" stroke="#e3121c" stroke-width="2.8"/><circle cx="27" cy="46" r="10.3" fill="url(#ko)"/><circle cx="27" cy="46" r="7.62" fill="url(#ki)"/><path d="M25.82 45.62L20.15 43.78" stroke="#1a1a1a" stroke-width="1.5" stroke-linecap="round"/><rect x="25.3" y="31.6" width="3.6" height="2.2" fill="#d8dae4"/></svg>
<div style="left:5px;top:48px;width:9px;height:9px;background:#050505;"><div class="t" style="left:1.5px;top:0.5px;font-size:8.5px;font-weight:bold;color:#fff;transform:scaleX(1.1);transform-origin:0 0">L</div></div>
<div style="left:40px;top:48px;width:9px;height:9px;background:#050505;"><div class="t" style="left:1.5px;top:0.5px;font-size:8.5px;font-weight:bold;color:#fff;transform:scaleX(1.1);transform-origin:0 0">R</div></div>
<div style="left:0px;top:61px;width:54px;height:189px;background:#4b4f5d;box-shadow:inset 1px 1px 0 #5e6274,inset -1px -1px 0 #363944;"></div>
<svg style="left:0px;top:0px;" width="54" height="110" viewBox="0 0 54 110"><circle cx="16.8" cy="71.7" r="8.3" fill="url(#so)"/><circle cx="16.8" cy="71.7" r="7" fill="#474a54"/><circle cx="16.8" cy="71.7" r="6.2" fill="url(#si)"/><path d="M16.3 72.2L12.200000000000001 76.3" stroke="#33363e" stroke-width="1.4"/><circle cx="37.8" cy="71.7" r="8.3" fill="url(#so)"/><circle cx="37.8" cy="71.7" r="7" fill="#474a54"/><circle cx="37.8" cy="71.7" r="6.2" fill="url(#si)"/><path d="M37.3 72.2L33.199999999999996 76.3" stroke="#33363e" stroke-width="1.4"/><circle cx="16.8" cy="91.6" r="8.3" fill="url(#so)"/><circle cx="16.8" cy="91.6" r="7" fill="#474a54"/><circle cx="16.8" cy="91.6" r="6.2" fill="url(#si)"/><path d="M16.3 92.1L12.200000000000001 96.19999999999999" stroke="#33363e" stroke-width="1.4"/><circle cx="37.8" cy="91.6" r="8.3" fill="url(#so)"/><circle cx="37.8" cy="91.6" r="7" fill="#474a54"/><circle cx="37.8" cy="91.6" r="6.2" fill="url(#si)"/><path d="M37.3 92.1L33.199999999999996 96.19999999999999" stroke="#33363e" stroke-width="1.4"/></svg>
<div style="left:5px;top:103px;width:45px;height:146px;border:1px solid #30323c;box-shadow:inset 1px 1px 0 #3a3d48, 1px 1px 0 #686c7e;background:#4b4f5d;"></div>
<div style="left:9px;top:106px;width:37px;height:15px;background:#3a3d49;"></div>
<div style="left:11px;top:108px;width:33px;height:11px;background:#5ea0f2;overflow:hidden;background-image:linear-gradient(90deg,transparent 12px,rgba(160,205,255,.5) 12px 13px,transparent 13px);"><div class="lcd" style="left:0;width:33px;text-align:center;top:0.0px;font-size:11.5px;letter-spacing:1.1px;font-style:italic;color:#12306a">0,00</div></div>
<div style="left:10px;top:123px;width:35px;height:2px;background:repeating-linear-gradient(90deg,#8d91a3 0 1px,transparent 1px 3px);"></div>
<div style="left:22px;top:129px;width:8px;height:114px;background:#0c0d10;border-radius:2px;"></div>
<div style="left:23px;top:131px;width:6px;height:110px;background:repeating-linear-gradient(#42444c 0 1px,#2a2c33 1px 2px);"></div>
<div style="left:36px;top:129px;width:8px;height:114px;background:#0c0d10;border-radius:2px;"></div>
<div style="left:37px;top:131px;width:6px;height:110px;background:repeating-linear-gradient(#42444c 0 1px,#2a2c33 1px 2px);"></div>
<div style="left:31px;top:131px;width:1px;height:110px;background:#2a2c35;"></div>
<div style="left:34px;top:131px;width:1px;height:110px;background:#8a8ea0;"></div>
</div>
<svg style="left:788px;top:646px;" width="13" height="28" viewBox="0 0 13 28"><rect x="0" y="0" width="13" height="28" rx="1.5" fill="#8e919c"/><rect x="1" y="4" width="11" height="1" fill="#b2b5be"/><rect x="1" y="6" width="11" height="1" fill="#747782"/><rect x="1" y="8" width="11" height="1" fill="#b2b5be"/><rect x="1" y="10" width="11" height="1" fill="#747782"/><rect x="1" y="12" width="11" height="1" fill="#b2b5be"/><rect x="1" y="14" width="11" height="1" fill="#747782"/><rect x="1" y="16" width="11" height="1" fill="#b2b5be"/><rect x="1" y="18" width="11" height="1" fill="#747782"/><rect x="1" y="20" width="11" height="1" fill="#b2b5be"/><rect x="1" y="22" width="11" height="1" fill="#747782"/><rect x="1" y="24" width="11" height="1" fill="#b2b5be"/><rect x="1" y="1" width="11" height="2.5" fill="#bcbfc8"/><rect x="1" y="24.5" width="11" height="2.5" fill="#6c6f7a"/><rect x="0.5" y="0.5" width="12" height="27" rx="1.5" fill="none" stroke="#5c5f6a" stroke-width="1"/></svg>
<div style="left:761px;top:473px;width:54px;height:250px;overflow:hidden;pointer-events:none">
<div class="t" style="left:5px;top:240px;transform-origin:0 0;transform:rotate(-90deg);font-size:16px;color:#e6e6e6;letter-spacing:0.15px;">Tom Low</div>
<div style="left:5px;top:242px;width:13px;height:5px;background:#8085a0;border-radius:0 2px 0 0;"></div>
</div>
<div style="left:817px;top:473px;width:54px;height:250px;overflow:hidden;">
<div style="left:0px;top:0px;width:54px;height:60px;background:#585c6b;box-shadow:inset 1px 1px 0 #6c7084,inset -1px -1px 0 #3c3f4b;"></div>
<div class="btn" style="left:7px;top:2px;width:18px;height:13px;border-color:#08080a;"></div>
<svg style="left:7px;top:2px;" width="18" height="13" viewBox="0 0 18 13"><path d="M6.5 3L11.5 6.5L6.5 10z" fill="#000"/></svg>
<div style="left:24px;top:2px;width:6px;height:13px;background:linear-gradient(90deg,#5d6172,#a9adbd 55%,#6c7082);border:1px solid #08080a;border-radius:0 2px 2px 0;"></div>
<div style="left:37px;top:2px;width:12px;height:9px;background:#6a6e7e;border:1px solid #444854;border-radius:3px;box-shadow:inset 0 0 0 1px #7c8092;"></div>
<div style="left:41px;top:5px;width:5px;height:3px;background:#8c90a2;"></div>
<div class="btn" style="left:7px;top:17px;width:18px;height:13px;border-color:#08080a;"><div class="px" style="left:0;top:1.5px;width:16px;letter-spacing:0;font-weight:bold;font-size:8.5px;transform:scaleX(1.15)">M</div></div>
<div class="btn" style="left:29px;top:17px;width:18px;height:13px;border-color:#08080a;"><div class="px" style="left:0;top:1.5px;width:16px;letter-spacing:0;font-weight:bold;font-size:8.5px;transform:scaleX(1.15)">S</div></div>
<div style="left:5px;top:33px;width:44px;height:12px;background:#8085a0;border-top:1px solid #969bb2;"></div>
<div style="left:0px;top:44px;width:54px;height:15px;background:#8085a0;"></div>
<div style="left:0px;top:59px;width:54px;height:1px;background:#5e6276;"></div>
<svg style="left:0px;top:0px;" width="54" height="62" viewBox="0 0 54 62"><clipPath id="pc10"><rect x="0" y="30" width="54" height="26.8"/></clipPath><circle cx="27" cy="46" r="14.4" fill="#050505" clip-path="url(#pc10)"/><path d="M27.00 33.60A12.4 12.4 0 0 1 29.15 33.79" fill="none" stroke="#e3121c" stroke-width="2.8"/><circle cx="27" cy="46" r="10.3" fill="url(#ko)"/><circle cx="27" cy="46" r="7.62" fill="url(#ki)"/><path d="M27.21 44.78L28.25 38.91" stroke="#1a1a1a" stroke-width="1.5" stroke-linecap="round"/><rect x="25.3" y="31.6" width="3.6" height="2.2" fill="#d8dae4"/></svg>
<div style="left:5px;top:48px;width:9px;height:9px;background:#050505;"><div class="t" style="left:1.5px;top:0.5px;font-size:8.5px;font-weight:bold;color:#fff;transform:scaleX(1.1);transform-origin:0 0">L</div></div>
<div style="left:40px;top:48px;width:9px;height:9px;background:#050505;"><div class="t" style="left:1.5px;top:0.5px;font-size:8.5px;font-weight:bold;color:#fff;transform:scaleX(1.1);transform-origin:0 0">R</div></div>
<div style="left:0px;top:61px;width:54px;height:189px;background:#4b4f5d;box-shadow:inset 1px 1px 0 #5e6274,inset -1px -1px 0 #363944;"></div>
<svg style="left:0px;top:0px;" width="54" height="110" viewBox="0 0 54 110"><circle cx="16.8" cy="71.7" r="8.3" fill="url(#so)"/><circle cx="16.8" cy="71.7" r="7" fill="#474a54"/><circle cx="16.8" cy="71.7" r="6.2" fill="url(#si)"/><path d="M16.3 72.2L12.200000000000001 76.3" stroke="#33363e" stroke-width="1.4"/><circle cx="37.8" cy="71.7" r="8.3" fill="url(#so)"/><circle cx="37.8" cy="71.7" r="7" fill="#474a54"/><circle cx="37.8" cy="71.7" r="6.2" fill="url(#si)"/><path d="M37.3 72.2L33.199999999999996 76.3" stroke="#33363e" stroke-width="1.4"/><circle cx="16.8" cy="91.6" r="8.3" fill="url(#so)"/><circle cx="16.8" cy="91.6" r="7" fill="#474a54"/><circle cx="16.8" cy="91.6" r="6.2" fill="url(#si)"/><path d="M16.3 92.1L12.200000000000001 96.19999999999999" stroke="#33363e" stroke-width="1.4"/><circle cx="37.8" cy="91.6" r="8.3" fill="url(#so)"/><circle cx="37.8" cy="91.6" r="7" fill="#474a54"/><circle cx="37.8" cy="91.6" r="6.2" fill="url(#si)"/><path d="M37.3 92.1L33.199999999999996 96.19999999999999" stroke="#33363e" stroke-width="1.4"/></svg>
<div style="left:5px;top:103px;width:45px;height:146px;border:1px solid #30323c;box-shadow:inset 1px 1px 0 #3a3d48, 1px 1px 0 #686c7e;background:#4b4f5d;"></div>
<div style="left:9px;top:106px;width:37px;height:15px;background:#3a3d49;"></div>
<div style="left:11px;top:108px;width:33px;height:11px;background:#5ea0f2;overflow:hidden;background-image:linear-gradient(90deg,transparent 12px,rgba(160,205,255,.5) 12px 13px,transparent 13px);"><div class="lcd" style="left:0;width:33px;text-align:center;top:0.0px;font-size:11.5px;letter-spacing:1.1px;font-style:italic;color:#12306a">0,00</div></div>
<div style="left:10px;top:123px;width:35px;height:2px;background:repeating-linear-gradient(90deg,#8d91a3 0 1px,transparent 1px 3px);"></div>
<div style="left:22px;top:129px;width:8px;height:114px;background:#0c0d10;border-radius:2px;"></div>
<div style="left:23px;top:131px;width:6px;height:110px;background:repeating-linear-gradient(#42444c 0 1px,#2a2c33 1px 2px);"></div>
<div style="left:36px;top:129px;width:8px;height:114px;background:#0c0d10;border-radius:2px;"></div>
<div style="left:37px;top:131px;width:6px;height:110px;background:repeating-linear-gradient(#42444c 0 1px,#2a2c33 1px 2px);"></div>
<div style="left:31px;top:131px;width:1px;height:110px;background:#2a2c35;"></div>
<div style="left:34px;top:131px;width:1px;height:110px;background:#8a8ea0;"></div>
</div>
<svg style="left:844px;top:646px;" width="13" height="28" viewBox="0 0 13 28"><rect x="0" y="0" width="13" height="28" rx="1.5" fill="#8e919c"/><rect x="1" y="4" width="11" height="1" fill="#b2b5be"/><rect x="1" y="6" width="11" height="1" fill="#747782"/><rect x="1" y="8" width="11" height="1" fill="#b2b5be"/><rect x="1" y="10" width="11" height="1" fill="#747782"/><rect x="1" y="12" width="11" height="1" fill="#b2b5be"/><rect x="1" y="14" width="11" height="1" fill="#747782"/><rect x="1" y="16" width="11" height="1" fill="#b2b5be"/><rect x="1" y="18" width="11" height="1" fill="#747782"/><rect x="1" y="20" width="11" height="1" fill="#b2b5be"/><rect x="1" y="22" width="11" height="1" fill="#747782"/><rect x="1" y="24" width="11" height="1" fill="#b2b5be"/><rect x="1" y="1" width="11" height="2.5" fill="#bcbfc8"/><rect x="1" y="24.5" width="11" height="2.5" fill="#6c6f7a"/><rect x="0.5" y="0.5" width="12" height="27" rx="1.5" fill="none" stroke="#5c5f6a" stroke-width="1"/></svg>
<div style="left:817px;top:473px;width:54px;height:250px;overflow:hidden;pointer-events:none">
<div class="t" style="left:5px;top:240px;transform-origin:0 0;transform:rotate(-90deg);font-size:16px;color:#e6e6e6;letter-spacing:0.15px;">Tom Mid</div>
<div style="left:5px;top:242px;width:13px;height:5px;background:#8085a0;border-radius:0 2px 0 0;"></div>
</div>
<div style="left:873px;top:473px;width:54px;height:250px;overflow:hidden;">
<div style="left:0px;top:0px;width:54px;height:60px;background:#585c6b;box-shadow:inset 1px 1px 0 #6c7084,inset -1px -1px 0 #3c3f4b;"></div>
<div class="btn" style="left:7px;top:2px;width:18px;height:13px;border-color:#08080a;"></div>
<svg style="left:7px;top:2px;" width="18" height="13" viewBox="0 0 18 13"><path d="M6.5 3L11.5 6.5L6.5 10z" fill="#000"/></svg>
<div style="left:24px;top:2px;width:6px;height:13px;background:linear-gradient(90deg,#5d6172,#a9adbd 55%,#6c7082);border:1px solid #08080a;border-radius:0 2px 2px 0;"></div>
<div style="left:37px;top:2px;width:12px;height:9px;background:#6a6e7e;border:1px solid #444854;border-radius:3px;box-shadow:inset 0 0 0 1px #7c8092;"></div>
<div style="left:41px;top:5px;width:5px;height:3px;background:#8c90a2;"></div>
<div class="btn" style="left:7px;top:17px;width:18px;height:13px;border-color:#08080a;"><div class="px" style="left:0;top:1.5px;width:16px;letter-spacing:0;font-weight:bold;font-size:8.5px;transform:scaleX(1.15)">M</div></div>
<div class="btn" style="left:29px;top:17px;width:18px;height:13px;border-color:#08080a;"><div class="px" style="left:0;top:1.5px;width:16px;letter-spacing:0;font-weight:bold;font-size:8.5px;transform:scaleX(1.15)">S</div></div>
<div style="left:5px;top:33px;width:44px;height:12px;background:#8085a0;border-top:1px solid #969bb2;"></div>
<div style="left:0px;top:44px;width:54px;height:15px;background:#8085a0;"></div>
<div style="left:0px;top:59px;width:54px;height:1px;background:#5e6276;"></div>
<svg style="left:0px;top:0px;" width="54" height="62" viewBox="0 0 54 62"><clipPath id="pc11"><rect x="0" y="30" width="54" height="26.8"/></clipPath><circle cx="27" cy="46" r="14.4" fill="#050505" clip-path="url(#pc11)"/><path d="M27.00 33.60A12.4 12.4 0 0 1 38.98 42.79" fill="none" stroke="#e3121c" stroke-width="2.8"/><circle cx="27" cy="46" r="10.3" fill="url(#ko)"/><circle cx="27" cy="46" r="7.62" fill="url(#ki)"/><path d="M28.19 45.68L33.95 44.14" stroke="#1a1a1a" stroke-width="1.5" stroke-linecap="round"/><rect x="25.3" y="31.6" width="3.6" height="2.2" fill="#d8dae4"/></svg>
<div style="left:5px;top:48px;width:9px;height:9px;background:#050505;"><div class="t" style="left:1.5px;top:0.5px;font-size:8.5px;font-weight:bold;color:#fff;transform:scaleX(1.1);transform-origin:0 0">L</div></div>
<div style="left:40px;top:48px;width:9px;height:9px;background:#050505;"><div class="t" style="left:1.5px;top:0.5px;font-size:8.5px;font-weight:bold;color:#fff;transform:scaleX(1.1);transform-origin:0 0">R</div></div>
<div style="left:0px;top:61px;width:54px;height:189px;background:#4b4f5d;box-shadow:inset 1px 1px 0 #5e6274,inset -1px -1px 0 #363944;"></div>
<svg style="left:0px;top:0px;" width="54" height="110" viewBox="0 0 54 110"><circle cx="16.8" cy="71.7" r="8.3" fill="url(#so)"/><circle cx="16.8" cy="71.7" r="7" fill="#474a54"/><circle cx="16.8" cy="71.7" r="6.2" fill="url(#si)"/><path d="M16.3 72.2L12.200000000000001 76.3" stroke="#33363e" stroke-width="1.4"/><circle cx="37.8" cy="71.7" r="8.3" fill="url(#so)"/><circle cx="37.8" cy="71.7" r="7" fill="#474a54"/><circle cx="37.8" cy="71.7" r="6.2" fill="url(#si)"/><path d="M37.3 72.2L33.199999999999996 76.3" stroke="#33363e" stroke-width="1.4"/><circle cx="16.8" cy="91.6" r="8.3" fill="url(#so)"/><circle cx="16.8" cy="91.6" r="7" fill="#474a54"/><circle cx="16.8" cy="91.6" r="6.2" fill="url(#si)"/><path d="M16.3 92.1L12.200000000000001 96.19999999999999" stroke="#33363e" stroke-width="1.4"/><circle cx="37.8" cy="91.6" r="8.3" fill="url(#so)"/><circle cx="37.8" cy="91.6" r="7" fill="#474a54"/><circle cx="37.8" cy="91.6" r="6.2" fill="url(#si)"/><path d="M37.3 92.1L33.199999999999996 96.19999999999999" stroke="#33363e" stroke-width="1.4"/></svg>
<div style="left:5px;top:103px;width:45px;height:146px;border:1px solid #30323c;box-shadow:inset 1px 1px 0 #3a3d48, 1px 1px 0 #686c7e;background:#4b4f5d;"></div>
<div style="left:9px;top:106px;width:37px;height:15px;background:#3a3d49;"></div>
<div style="left:11px;top:108px;width:33px;height:11px;background:#5ea0f2;overflow:hidden;background-image:linear-gradient(90deg,transparent 12px,rgba(160,205,255,.5) 12px 13px,transparent 13px);"><div class="lcd" style="left:0;width:33px;text-align:center;top:0.0px;font-size:11.5px;letter-spacing:1.1px;font-style:italic;color:#12306a">0,00</div></div>
<div style="left:10px;top:123px;width:35px;height:2px;background:repeating-linear-gradient(90deg,#8d91a3 0 1px,transparent 1px 3px);"></div>
<div style="left:22px;top:129px;width:8px;height:114px;background:#0c0d10;border-radius:2px;"></div>
<div style="left:23px;top:131px;width:6px;height:110px;background:repeating-linear-gradient(#42444c 0 1px,#2a2c33 1px 2px);"></div>
<div style="left:36px;top:129px;width:8px;height:114px;background:#0c0d10;border-radius:2px;"></div>
<div style="left:37px;top:131px;width:6px;height:110px;background:repeating-linear-gradient(#42444c 0 1px,#2a2c33 1px 2px);"></div>
<div style="left:31px;top:131px;width:1px;height:110px;background:#2a2c35;"></div>
<div style="left:34px;top:131px;width:1px;height:110px;background:#8a8ea0;"></div>
</div>
<svg style="left:900px;top:644px;" width="13" height="28" viewBox="0 0 13 28"><rect x="0" y="0" width="13" height="28" rx="1.5" fill="#8e919c"/><rect x="1" y="4" width="11" height="1" fill="#b2b5be"/><rect x="1" y="6" width="11" height="1" fill="#747782"/><rect x="1" y="8" width="11" height="1" fill="#b2b5be"/><rect x="1" y="10" width="11" height="1" fill="#747782"/><rect x="1" y="12" width="11" height="1" fill="#b2b5be"/><rect x="1" y="14" width="11" height="1" fill="#747782"/><rect x="1" y="16" width="11" height="1" fill="#b2b5be"/><rect x="1" y="18" width="11" height="1" fill="#747782"/><rect x="1" y="20" width="11" height="1" fill="#b2b5be"/><rect x="1" y="22" width="11" height="1" fill="#747782"/><rect x="1" y="24" width="11" height="1" fill="#b2b5be"/><rect x="1" y="1" width="11" height="2.5" fill="#bcbfc8"/><rect x="1" y="24.5" width="11" height="2.5" fill="#6c6f7a"/><rect x="0.5" y="0.5" width="12" height="27" rx="1.5" fill="none" stroke="#5c5f6a" stroke-width="1"/></svg>
<div style="left:873px;top:473px;width:54px;height:250px;overflow:hidden;pointer-events:none">
<div class="t" style="left:5px;top:240px;transform-origin:0 0;transform:rotate(-90deg);font-size:16px;color:#e6e6e6;letter-spacing:0.15px;">Tom Hi</div>
<div style="left:5px;top:242px;width:13px;height:5px;background:#8085a0;border-radius:0 2px 0 0;"></div>
</div>
<div style="left:929px;top:473px;width:31px;height:250px;overflow:hidden;">
<div style="left:0px;top:0px;width:54px;height:60px;background:#585c6b;box-shadow:inset 1px 1px 0 #6c7084,inset -1px -1px 0 #3c3f4b;"></div>
<div class="btn" style="left:7px;top:2px;width:18px;height:13px;border-color:#08080a;"></div>
<svg style="left:7px;top:2px;" width="18" height="13" viewBox="0 0 18 13"><path d="M6.5 3L11.5 6.5L6.5 10z" fill="#000"/></svg>
<div style="left:24px;top:2px;width:6px;height:13px;background:linear-gradient(90deg,#5d6172,#a9adbd 55%,#6c7082);border:1px solid #08080a;border-radius:0 2px 2px 0;"></div>
<div style="left:37px;top:2px;width:12px;height:9px;background:#6a6e7e;border:1px solid #444854;border-radius:3px;box-shadow:inset 0 0 0 1px #7c8092;"></div>
<div style="left:41px;top:5px;width:5px;height:3px;background:#8c90a2;"></div>
<div class="btn" style="left:7px;top:17px;width:18px;height:13px;border-color:#08080a;"><div class="px" style="left:0;top:1.5px;width:16px;letter-spacing:0;font-weight:bold;font-size:8.5px;transform:scaleX(1.15)">M</div></div>
<div class="btn" style="left:29px;top:17px;width:18px;height:13px;border-color:#08080a;"><div class="px" style="left:0;top:1.5px;width:16px;letter-spacing:0;font-weight:bold;font-size:8.5px;transform:scaleX(1.15)">S</div></div>
<div style="left:5px;top:33px;width:44px;height:12px;background:#8085a0;border-top:1px solid #969bb2;"></div>
<div style="left:0px;top:44px;width:54px;height:15px;background:#8085a0;"></div>
<div style="left:0px;top:59px;width:54px;height:1px;background:#5e6276;"></div>
<svg style="left:0px;top:0px;" width="54" height="62" viewBox="0 0 54 62"><clipPath id="pc12"><rect x="0" y="30" width="54" height="26.8"/></clipPath><circle cx="27" cy="46" r="14.4" fill="#050505" clip-path="url(#pc12)"/><path d="M27.00 33.60A12.4 12.4 0 0 1 38.65 41.76" fill="none" stroke="#e3121c" stroke-width="2.8"/><circle cx="27" cy="46" r="10.3" fill="url(#ko)"/><circle cx="27" cy="46" r="7.62" fill="url(#ki)"/><path d="M28.16 45.58L33.77 43.54" stroke="#1a1a1a" stroke-width="1.5" stroke-linecap="round"/><rect x="25.3" y="31.6" width="3.6" height="2.2" fill="#d8dae4"/></svg>
<div style="left:5px;top:48px;width:9px;height:9px;background:#050505;"><div class="t" style="left:1.5px;top:0.5px;font-size:8.5px;font-weight:bold;color:#fff;transform:scaleX(1.1);transform-origin:0 0">L</div></div>
<div style="left:40px;top:48px;width:9px;height:9px;background:#050505;"><div class="t" style="left:1.5px;top:0.5px;font-size:8.5px;font-weight:bold;color:#fff;transform:scaleX(1.1);transform-origin:0 0">R</div></div>
<div style="left:0px;top:61px;width:54px;height:189px;background:#4b4f5d;box-shadow:inset 1px 1px 0 #5e6274,inset -1px -1px 0 #363944;"></div>
<svg style="left:0px;top:0px;" width="54" height="110" viewBox="0 0 54 110"><circle cx="16.8" cy="71.7" r="8.3" fill="url(#so)"/><circle cx="16.8" cy="71.7" r="7" fill="#474a54"/><circle cx="16.8" cy="71.7" r="6.2" fill="url(#si)"/><path d="M16.3 72.2L12.200000000000001 76.3" stroke="#33363e" stroke-width="1.4"/><circle cx="37.8" cy="71.7" r="8.3" fill="url(#so)"/><circle cx="37.8" cy="71.7" r="7" fill="#474a54"/><circle cx="37.8" cy="71.7" r="6.2" fill="url(#si)"/><path d="M37.3 72.2L33.199999999999996 76.3" stroke="#33363e" stroke-width="1.4"/><circle cx="16.8" cy="91.6" r="8.3" fill="url(#so)"/><circle cx="16.8" cy="91.6" r="7" fill="#474a54"/><circle cx="16.8" cy="91.6" r="6.2" fill="url(#si)"/><path d="M16.3 92.1L12.200000000000001 96.19999999999999" stroke="#33363e" stroke-width="1.4"/><circle cx="37.8" cy="91.6" r="8.3" fill="url(#so)"/><circle cx="37.8" cy="91.6" r="7" fill="#474a54"/><circle cx="37.8" cy="91.6" r="6.2" fill="url(#si)"/><path d="M37.3 92.1L33.199999999999996 96.19999999999999" stroke="#33363e" stroke-width="1.4"/></svg>
<div style="left:5px;top:103px;width:45px;height:146px;border:1px solid #30323c;box-shadow:inset 1px 1px 0 #3a3d48, 1px 1px 0 #686c7e;background:#4b4f5d;"></div>
<div style="left:9px;top:106px;width:37px;height:15px;background:#3a3d49;"></div>
<div style="left:11px;top:108px;width:33px;height:11px;background:#5ea0f2;overflow:hidden;background-image:linear-gradient(90deg,transparent 12px,rgba(160,205,255,.5) 12px 13px,transparent 13px);"><div class="lcd" style="left:0;width:33px;text-align:center;top:0.0px;font-size:11.5px;letter-spacing:1.1px;font-style:italic;color:#12306a">0,00</div></div>
<div style="left:10px;top:123px;width:35px;height:2px;background:repeating-linear-gradient(90deg,#8d91a3 0 1px,transparent 1px 3px);"></div>
<div style="left:22px;top:129px;width:8px;height:114px;background:#0c0d10;border-radius:2px;"></div>
<div style="left:23px;top:131px;width:6px;height:110px;background:repeating-linear-gradient(#42444c 0 1px,#2a2c33 1px 2px);"></div>
<div style="left:36px;top:129px;width:8px;height:114px;background:#0c0d10;border-radius:2px;"></div>
<div style="left:37px;top:131px;width:6px;height:110px;background:repeating-linear-gradient(#42444c 0 1px,#2a2c33 1px 2px);"></div>
<div style="left:31px;top:131px;width:1px;height:110px;background:#2a2c35;"></div>
<div style="left:34px;top:131px;width:1px;height:110px;background:#8a8ea0;"></div>
</div>
<div style="left:957px;top:651px;width:3px;height:27px;overflow:hidden;">
<svg style="left:0px;top:0px;" width="13" height="28" viewBox="0 0 13 28"><rect x="0" y="0" width="13" height="28" rx="1.5" fill="#8e919c"/><rect x="1" y="4" width="11" height="1" fill="#b2b5be"/><rect x="1" y="6" width="11" height="1" fill="#747782"/><rect x="1" y="8" width="11" height="1" fill="#b2b5be"/><rect x="1" y="10" width="11" height="1" fill="#747782"/><rect x="1" y="12" width="11" height="1" fill="#b2b5be"/><rect x="1" y="14" width="11" height="1" fill="#747782"/><rect x="1" y="16" width="11" height="1" fill="#b2b5be"/><rect x="1" y="18" width="11" height="1" fill="#747782"/><rect x="1" y="20" width="11" height="1" fill="#b2b5be"/><rect x="1" y="22" width="11" height="1" fill="#747782"/><rect x="1" y="24" width="11" height="1" fill="#b2b5be"/><rect x="1" y="1" width="11" height="2.5" fill="#bcbfc8"/><rect x="1" y="24.5" width="11" height="2.5" fill="#6c6f7a"/><rect x="0.5" y="0.5" width="12" height="27" rx="1.5" fill="none" stroke="#5c5f6a" stroke-width="1"/></svg>
</div>
<div style="left:929px;top:473px;width:31px;height:250px;overflow:hidden;pointer-events:none">
<div class="t" style="left:5px;top:240px;transform-origin:0 0;transform:rotate(-90deg);font-size:16px;color:#e6e6e6;letter-spacing:0.15px;">Crash Right</div>
<div style="left:5px;top:242px;width:13px;height:5px;background:#8085a0;border-radius:0 2px 0 0;"></div>
</div>
<div style="left:257px;top:726px;width:703px;height:16px;background-color:#4c505e;background-image:repeating-conic-gradient(#5a5e6e 0 25%,#454956 0 50%);background-size:2px 2px;"></div>
<div style="left:257px;top:726px;width:14px;height:15px;background:linear-gradient(#666b7d,#4d5161);border:1px solid #2a2c36;border-radius:2px;box-shadow:inset 1px 1px 0 #8a8fa2;"></div>
<svg style="left:257px;top:726px;" width="14" height="15" viewBox="0 0 14 15"><path d="M9.5 3.5 L9.5 11.5 L4.0 7.5z" fill="#fff"/></svg>
<div style="left:272px;top:726px;width:455px;height:15px;background:linear-gradient(#6d7286,#545869);border:1px solid #2a2c36;border-radius:2px;box-shadow:inset 1px 1px 0 #8a8fa2;"></div>
<svg style="left:492px;top:730px;" width="18" height="9" viewBox="0 0 18 9"><rect x="0" y="0" width="1.3" height="1.3" fill="#2b2d38"/><rect x="3" y="0" width="1.3" height="1.3" fill="#2b2d38"/><rect x="6" y="0" width="1.3" height="1.3" fill="#2b2d38"/><rect x="9" y="0" width="1.3" height="1.3" fill="#2b2d38"/><rect x="12" y="0" width="1.3" height="1.3" fill="#2b2d38"/><rect x="15" y="0" width="1.3" height="1.3" fill="#2b2d38"/><rect x="0" y="3" width="1.3" height="1.3" fill="#2b2d38"/><rect x="3" y="3" width="1.3" height="1.3" fill="#2b2d38"/><rect x="6" y="3" width="1.3" height="1.3" fill="#2b2d38"/><rect x="9" y="3" width="1.3" height="1.3" fill="#2b2d38"/><rect x="12" y="3" width="1.3" height="1.3" fill="#2b2d38"/><rect x="15" y="3" width="1.3" height="1.3" fill="#2b2d38"/><rect x="0" y="6" width="1.3" height="1.3" fill="#2b2d38"/><rect x="3" y="6" width="1.3" height="1.3" fill="#2b2d38"/><rect x="6" y="6" width="1.3" height="1.3" fill="#2b2d38"/><rect x="9" y="6" width="1.3" height="1.3" fill="#2b2d38"/><rect x="12" y="6" width="1.3" height="1.3" fill="#2b2d38"/><rect x="15" y="6" width="1.3" height="1.3" fill="#2b2d38"/></svg>
<div style="left:928px;top:726px;width:15px;height:15px;background:linear-gradient(#666b7d,#4d5161);border:1px solid #2a2c36;border-radius:2px;box-shadow:inset 1px 1px 0 #8a8fa2;"></div>
<svg style="left:928px;top:726px;" width="15" height="15" viewBox="0 0 15 15"><path d="M10.0 3.5 L10.0 11.5 L4.5 7.5z" fill="#fff"/></svg>
<div style="left:944px;top:726px;width:15px;height:15px;background:linear-gradient(#666b7d,#4d5161);border:1px solid #2a2c36;border-radius:2px;box-shadow:inset 1px 1px 0 #8a8fa2;"></div>
<svg style="left:944px;top:726px;" width="15" height="15" viewBox="0 0 15 15"><path d="M5.0 3.5 L5.0 11.5 L10.5 7.5z" fill="#fff"/></svg>
<div style="left:960px;top:458px;width:219px;height:284px;background:#3a3d4a;"></div>
<div style="left:960px;top:458px;width:219px;height:277px;background:#555a68;"></div>
<div style="left:960px;top:458px;width:1px;height:277px;background:#2b2d37;"></div>
<div style="left:965px;top:463px;width:1px;height:272px;background:#3a3d49;"></div>
<div style="left:966px;top:463px;width:1px;height:272px;background:#6c7084;"></div>
<div style="left:1171px;top:463px;width:1px;height:272px;background:#3a3d49;"></div>
<div style="left:1172px;top:463px;width:1px;height:272px;background:#6c7084;"></div>
<div style="left:966px;top:463px;width:206px;height:1px;background:#3a3d49;"></div>
<div style="left:966px;top:464px;width:206px;height:1px;background:#6c7084;"></div>
<div style="left:971px;top:468px;width:197px;height:15px;background:linear-gradient(#4a4e5b,#525664);border:1px solid #3d404c;border-right-color:#767a8e;border-bottom-color:#767a8e;"></div>
<div style="left:960px;top:509px;width:219px;height:1px;background:#2b2d37;"></div>
<div style="left:960px;top:510px;width:219px;height:15px;background:#8085a0;"></div>
<div style="left:960px;top:525px;width:219px;height:1px;background:#2b2d37;"></div>
<div style="left:966px;top:535px;width:206px;height:1px;background:#2b2d37;"></div>
<div style="left:966px;top:536px;width:206px;height:1px;background:#6c7084;"></div>
<div style="left:971px;top:540px;width:196px;height:174px;background:#4b4f5d;border:1px solid #2b2d37;"></div>
<div style="left:976px;top:544px;width:186px;height:39px;background:#8085a0;border:1px solid #c0c4d4;border-radius:2px;box-shadow:inset 1px 1px 0 #2b2d37,inset -1px -1px 0 #2b2d37;"></div>
<div style="left:980px;top:546px;width:177px;height:35px;border:1px solid #a4a8bc;border-radius:2px;"></div>
<div style="left:981px;top:549px;width:112px;height:19px;background:#8085a0;border:1.5px solid #0a0a0c;"></div>
<div style="left:981px;top:566.5px;width:41.5px;height:14.5px;background:#8085a0;border-right:1.5px solid #0a0a0c;border-top:1.5px solid #0a0a0c;"></div>
<div style="left:1091.5px;top:549px;width:1.5px;height:32px;background:#0a0a0c;"></div>
<div style="left:985px;top:553px;width:104px;height:11px;background:#5e9ff0;background-image:repeating-linear-gradient(90deg,rgba(150,195,255,0.6) 0 1px,transparent 1px 8px);background-position:-0.5px 0;overflow:hidden;"><div class="lcd" style="left:0px;right:-0.8px;top:0.0px;font-size:12px;letter-spacing:0.8px;text-align:right">No&nbsp;plugin</div></div>
<div style="left:1028px;top:568px;width:28px;height:11px;background:linear-gradient(#ffa4ac,#f5636f 50%,#ee4a5a);border:1px solid #fbd0d4;box-shadow:0 0 0 1px #4a1018;"><div class="px" style="left:0;top:0.5px;width:26px;letter-spacing:0.8px;font-weight:normal;font-size:8.5px">BYP</div></div>
<div class="btn" style="left:1060px;top:568px;width:28px;height:11px;box-shadow:0 0 0 1px #23252e;border-color:#e8eaf2;"><div class="px" style="left:0;top:0.5px;width:26px;letter-spacing:0.6px;font-weight:bold;font-size:8px">EDIT</div></div>
<svg style="left:1096px;top:544px;" width="44" height="34" viewBox="0 0 44 34"><clipPath id="bk1"><rect x="0" y="0" width="44" height="28"/></clipPath><circle cx="22" cy="16" r="14.3" fill="#050505" clip-path="url(#bk1)"/><rect x="0" y="19" width="44" height="9" rx="1" fill="#050505"/><g clip-path="url(#bk1)"><circle cx="22" cy="17" r="10.4" fill="url(#ko)"/><circle cx="22" cy="17" r="7.70" fill="url(#ki)"/><path d="M21.12 17.88L17.05 21.95" stroke="#1a1a1a" stroke-width="1.5" stroke-linecap="round"/></g><circle cx="4.5" cy="23.5" r="2.2" fill="none" stroke="#fff" stroke-width="1.1"/><path d="M36.5 23.5h5.5M39.2 20.8v5.5" stroke="#fff" stroke-width="1.3"/></svg>
<div class="t" style="left:1098px;top:573px;font-size:7.5px;color:#050505;letter-spacing:1.7px;font-weight:bold;">RETURN</div>
<div style="left:972px;top:584px;width:195px;height:1px;background:#2b2d37;"></div>
<div style="left:976px;top:587px;width:186px;height:39px;background:#8085a0;border:1px solid #c0c4d4;border-radius:2px;box-shadow:inset 1px 1px 0 #2b2d37,inset -1px -1px 0 #2b2d37;"></div>
<div style="left:980px;top:589px;width:177px;height:35px;border:1px solid #a4a8bc;border-radius:2px;"></div>
<div style="left:981px;top:592px;width:112px;height:19px;background:#8085a0;border:1.5px solid #0a0a0c;"></div>
<div style="left:981px;top:609.5px;width:41.5px;height:14.5px;background:#8085a0;border-right:1.5px solid #0a0a0c;border-top:1.5px solid #0a0a0c;"></div>
<div style="left:1091.5px;top:592px;width:1.5px;height:32px;background:#0a0a0c;"></div>
<div style="left:985px;top:596px;width:104px;height:11px;background:#5e9ff0;background-image:repeating-linear-gradient(90deg,rgba(150,195,255,0.6) 0 1px,transparent 1px 8px);background-position:-0.5px 0;overflow:hidden;"><div class="lcd" style="left:0px;right:-0.8px;top:0.0px;font-size:12px;letter-spacing:0.8px;text-align:right">No&nbsp;plugin</div></div>
<div style="left:1028px;top:611px;width:28px;height:11px;background:linear-gradient(#ffa4ac,#f5636f 50%,#ee4a5a);border:1px solid #fbd0d4;box-shadow:0 0 0 1px #4a1018;"><div class="px" style="left:0;top:0.5px;width:26px;letter-spacing:0.8px;font-weight:normal;font-size:8.5px">BYP</div></div>
<div class="btn" style="left:1060px;top:611px;width:28px;height:11px;box-shadow:0 0 0 1px #23252e;border-color:#e8eaf2;"><div class="px" style="left:0;top:0.5px;width:26px;letter-spacing:0.6px;font-weight:bold;font-size:8px">EDIT</div></div>
<svg style="left:1096px;top:587px;" width="44" height="34" viewBox="0 0 44 34"><clipPath id="bk2"><rect x="0" y="0" width="44" height="28"/></clipPath><circle cx="22" cy="16" r="14.3" fill="#050505" clip-path="url(#bk2)"/><rect x="0" y="19" width="44" height="9" rx="1" fill="#050505"/><g clip-path="url(#bk2)"><circle cx="22" cy="17" r="10.4" fill="url(#ko)"/><circle cx="22" cy="17" r="7.70" fill="url(#ki)"/><path d="M21.12 17.88L17.05 21.95" stroke="#1a1a1a" stroke-width="1.5" stroke-linecap="round"/></g><circle cx="4.5" cy="23.5" r="2.2" fill="none" stroke="#fff" stroke-width="1.1"/><path d="M36.5 23.5h5.5M39.2 20.8v5.5" stroke="#fff" stroke-width="1.3"/></svg>
<div class="t" style="left:1098px;top:616px;font-size:7.5px;color:#050505;letter-spacing:1.7px;font-weight:bold;">RETURN</div>
<div style="left:972px;top:627px;width:195px;height:1px;background:#2b2d37;"></div>
<div style="left:976px;top:630px;width:186px;height:39px;background:#8085a0;border:1px solid #c0c4d4;border-radius:2px;box-shadow:inset 1px 1px 0 #2b2d37,inset -1px -1px 0 #2b2d37;"></div>
<div style="left:980px;top:632px;width:177px;height:35px;border:1px solid #a4a8bc;border-radius:2px;"></div>
<div style="left:981px;top:635px;width:112px;height:19px;background:#8085a0;border:1.5px solid #0a0a0c;"></div>
<div style="left:981px;top:652.5px;width:41.5px;height:14.5px;background:#8085a0;border-right:1.5px solid #0a0a0c;border-top:1.5px solid #0a0a0c;"></div>
<div style="left:1091.5px;top:635px;width:1.5px;height:32px;background:#0a0a0c;"></div>
<div style="left:985px;top:639px;width:104px;height:11px;background:#5e9ff0;background-image:repeating-linear-gradient(90deg,rgba(150,195,255,0.6) 0 1px,transparent 1px 8px);background-position:-0.5px 0;overflow:hidden;"><div class="lcd" style="left:0px;right:-0.8px;top:0.0px;font-size:12px;letter-spacing:0.8px;text-align:right">No&nbsp;plugin</div></div>
<div style="left:1028px;top:654px;width:28px;height:11px;background:linear-gradient(#ffa4ac,#f5636f 50%,#ee4a5a);border:1px solid #fbd0d4;box-shadow:0 0 0 1px #4a1018;"><div class="px" style="left:0;top:0.5px;width:26px;letter-spacing:0.8px;font-weight:normal;font-size:8.5px">BYP</div></div>
<div class="btn" style="left:1060px;top:654px;width:28px;height:11px;box-shadow:0 0 0 1px #23252e;border-color:#e8eaf2;"><div class="px" style="left:0;top:0.5px;width:26px;letter-spacing:0.6px;font-weight:bold;font-size:8px">EDIT</div></div>
<svg style="left:1096px;top:630px;" width="44" height="34" viewBox="0 0 44 34"><clipPath id="bk3"><rect x="0" y="0" width="44" height="28"/></clipPath><circle cx="22" cy="16" r="14.3" fill="#050505" clip-path="url(#bk3)"/><rect x="0" y="19" width="44" height="9" rx="1" fill="#050505"/><g clip-path="url(#bk3)"><circle cx="22" cy="17" r="10.4" fill="url(#ko)"/><circle cx="22" cy="17" r="7.70" fill="url(#ki)"/><path d="M21.12 17.88L17.05 21.95" stroke="#1a1a1a" stroke-width="1.5" stroke-linecap="round"/></g><circle cx="4.5" cy="23.5" r="2.2" fill="none" stroke="#fff" stroke-width="1.1"/><path d="M36.5 23.5h5.5M39.2 20.8v5.5" stroke="#fff" stroke-width="1.3"/></svg>
<div class="t" style="left:1098px;top:659px;font-size:7.5px;color:#050505;letter-spacing:1.7px;font-weight:bold;">RETURN</div>
<div style="left:972px;top:670px;width:195px;height:1px;background:#2b2d37;"></div>
<div style="left:976px;top:673px;width:186px;height:39px;background:#8085a0;border:1px solid #c0c4d4;border-radius:2px;box-shadow:inset 1px 1px 0 #2b2d37,inset -1px -1px 0 #2b2d37;"></div>
<div style="left:980px;top:675px;width:177px;height:35px;border:1px solid #a4a8bc;border-radius:2px;"></div>
<div style="left:981px;top:678px;width:112px;height:19px;background:#8085a0;border:1.5px solid #0a0a0c;"></div>
<div style="left:981px;top:695.5px;width:41.5px;height:14.5px;background:#8085a0;border-right:1.5px solid #0a0a0c;border-top:1.5px solid #0a0a0c;"></div>
<div style="left:1091.5px;top:678px;width:1.5px;height:32px;background:#0a0a0c;"></div>
<div style="left:985px;top:682px;width:104px;height:11px;background:#5e9ff0;background-image:repeating-linear-gradient(90deg,rgba(150,195,255,0.6) 0 1px,transparent 1px 8px);background-position:-0.5px 0;overflow:hidden;"><div class="lcd" style="left:0px;right:-0.8px;top:0.0px;font-size:12px;letter-spacing:0.8px;text-align:right">No&nbsp;plugin</div></div>
<div style="left:1028px;top:697px;width:28px;height:11px;background:linear-gradient(#ffa4ac,#f5636f 50%,#ee4a5a);border:1px solid #fbd0d4;box-shadow:0 0 0 1px #4a1018;"><div class="px" style="left:0;top:0.5px;width:26px;letter-spacing:0.8px;font-weight:normal;font-size:8.5px">BYP</div></div>
<div class="btn" style="left:1060px;top:697px;width:28px;height:11px;box-shadow:0 0 0 1px #23252e;border-color:#e8eaf2;"><div class="px" style="left:0;top:0.5px;width:26px;letter-spacing:0.6px;font-weight:bold;font-size:8px">EDIT</div></div>
<svg style="left:1096px;top:673px;" width="44" height="34" viewBox="0 0 44 34"><clipPath id="bk4"><rect x="0" y="0" width="44" height="28"/></clipPath><circle cx="22" cy="16" r="14.3" fill="#050505" clip-path="url(#bk4)"/><rect x="0" y="19" width="44" height="9" rx="1" fill="#050505"/><g clip-path="url(#bk4)"><circle cx="22" cy="17" r="10.4" fill="url(#ko)"/><circle cx="22" cy="17" r="7.70" fill="url(#ki)"/><path d="M21.12 17.88L17.05 21.95" stroke="#1a1a1a" stroke-width="1.5" stroke-linecap="round"/></g><circle cx="4.5" cy="23.5" r="2.2" fill="none" stroke="#fff" stroke-width="1.1"/><path d="M36.5 23.5h5.5M39.2 20.8v5.5" stroke="#fff" stroke-width="1.3"/></svg>
<div class="t" style="left:1098px;top:702px;font-size:7.5px;color:#050505;letter-spacing:1.7px;font-weight:bold;">RETURN</div>
<div style="left:960px;top:735px;width:219px;height:6px;background:#555a68;"></div>
<div style="left:960px;top:741px;width:219px;height:1px;background:#3a3d4a;"></div>
<div style="left:960px;top:734px;width:219px;height:1px;background:#2b2d37;"></div>
<div style="left:1179px;top:458px;width:119px;height:284px;background:#555a68;"></div>
<div style="left:1179px;top:463px;width:1px;height:272px;background:#2b2d37;"></div>
<div style="left:1180px;top:463px;width:106px;height:271px;background:#8085a0;"></div>
<div style="left:1180px;top:464px;width:4px;height:45px;background:#6a6e82;"></div>
<div style="left:1184px;top:464px;width:1px;height:45px;background:#3a3d49;"></div>
<div style="left:1286px;top:463px;width:1px;height:272px;background:#2b2d37;"></div>
<div style="left:1287px;top:463px;width:3px;height:272px;background:#62667a;"></div>
<div style="left:1290px;top:463px;width:1px;height:272px;background:#2b2d37;"></div>
<div style="left:1180px;top:463px;width:118px;height:1px;background:#2b2d37;"></div>
<div style="left:1179px;top:734px;width:119px;height:1px;background:#2b2d37;"></div>
<div style="left:1179px;top:735px;width:119px;height:6px;background:#555a68;"></div>
<div style="left:1179px;top:741px;width:119px;height:1px;background:#3a3d4a;"></div>
<div style="left:1185px;top:465px;width:101px;height:17px;background:#8085a0;border:1px solid #3a3d49;box-shadow:inset 1px 1px 0 #9ca1b8;"></div>
<div class="t" style="left:1192px;top:466px;font-weight:bold;font-size:14px;color:#5a5e70;letter-spacing:-0.2px;">Master</div>
<div style="left:1185px;top:484px;width:101px;height:1px;background:#3a3d49;"></div>
<div style="left:1185px;top:485px;width:101px;height:1px;background:#9ca1b8;"></div>
<div class="btn" style="left:1193px;top:490.5px;width:41px;height:12px;box-shadow:0 0 0 1px #3c3f4b;"><div class="px" style="left:0;top:1.5px;width:39px;letter-spacing:1px;font-size:8px">MUTE</div></div>
<div style="left:1192px;top:507px;width:42px;height:217px;background:#555a68;border:1px solid #c0c4d4;border-top-color:#3a3d49;border-left-color:#3a3d49;"></div>
<div style="left:1212px;top:723px;width:22px;height:6px;background:#555a68;border:1px solid #c0c4d4;border-top:none;border-left-color:#c0c4d4;"></div>
<div style="left:1196px;top:513px;width:35px;height:13px;background:#5ea0f2;overflow:hidden;background-image:linear-gradient(90deg,transparent 12px,rgba(160,205,255,.5) 12px 13px,transparent 13px);"><div class="lcd" style="left:0;width:35px;text-align:center;top:1.0px;font-size:11.5px;letter-spacing:1.1px;font-style:italic;color:#12306a">0,00</div></div>
<div style="left:1197px;top:528px;width:34px;height:4px;background:repeating-linear-gradient(90deg,#9296a8 0 1px,transparent 1px 3px);"></div>
<div style="left:1198px;top:537px;width:15px;height:181px;background:#0c0d10;border-radius:2px;"></div>
<div style="left:1199px;top:539px;width:13px;height:177px;background:repeating-linear-gradient(#42444c 0 1px,#2a2c33 1px 2px);"></div>
<div style="left:1205px;top:539px;width:1px;height:177px;background:#000;"></div>
<div style="left:1221px;top:538px;width:2px;height:178px;background:#2b2d37;"></div>
<div style="left:1223px;top:538px;width:1px;height:178px;background:#7a7e92;"></div>
<svg style="left:1216px;top:590px;" width="14" height="28" viewBox="0 0 14 28"><rect x="0" y="0" width="14" height="28" rx="1.5" fill="#8e919c"/><rect x="1" y="4" width="12" height="1" fill="#b2b5be"/><rect x="1" y="6" width="12" height="1" fill="#747782"/><rect x="1" y="8" width="12" height="1" fill="#b2b5be"/><rect x="1" y="10" width="12" height="1" fill="#747782"/><rect x="1" y="12" width="12" height="1" fill="#b2b5be"/><rect x="1" y="14" width="12" height="1" fill="#747782"/><rect x="1" y="16" width="12" height="1" fill="#b2b5be"/><rect x="1" y="18" width="12" height="1" fill="#747782"/><rect x="1" y="20" width="12" height="1" fill="#b2b5be"/><rect x="1" y="22" width="12" height="1" fill="#747782"/><rect x="1" y="24" width="12" height="1" fill="#b2b5be"/><rect x="1" y="1" width="12" height="2.5" fill="#bcbfc8"/><rect x="1" y="24.5" width="12" height="2.5" fill="#6c6f7a"/><rect x="0.5" y="0.5" width="13" height="27" rx="1.5" fill="none" stroke="#5c5f6a" stroke-width="1"/></svg>
<div style="left:1237px;top:535px;width:46px;height:1px;background:#16171c;"></div>
<div class="t" style="left:1237px;width:46px;top:538px;text-align:center;font-size:7.5px;font-weight:bold;color:#050505;letter-spacing:0.9px;">HUMANIZE</div>
<div style="left:1237px;top:546px;width:46px;height:1px;background:#16171c;"></div>
<svg style="left:1238px;top:542px;" width="44" height="34" viewBox="0 0 44 34"><clipPath id="bk5"><rect x="0" y="0" width="44" height="28"/></clipPath><circle cx="22" cy="16" r="14.3" fill="#050505" clip-path="url(#bk5)"/><rect x="0" y="19" width="44" height="9" rx="1" fill="#050505"/><g clip-path="url(#bk5)"><circle cx="22" cy="17" r="10.4" fill="url(#ko)"/><circle cx="22" cy="17" r="7.70" fill="url(#ki)"/><path d="M21.12 17.88L17.05 21.95" stroke="#1a1a1a" stroke-width="1.5" stroke-linecap="round"/></g><circle cx="4.5" cy="23.5" r="2.2" fill="none" stroke="#fff" stroke-width="1.1"/><path d="M36.5 23.5h5.5M39.2 20.8v5.5" stroke="#fff" stroke-width="1.3"/></svg>
<div class="t" style="left:1237px;width:46px;top:575px;text-align:center;font-size:7.5px;font-weight:bold;color:#050505;letter-spacing:1.0px;">VELOCITY</div>
<div style="left:1237px;top:583px;width:46px;height:1px;background:#16171c;"></div>
<svg style="left:1238px;top:579px;" width="44" height="34" viewBox="0 0 44 34"><clipPath id="bk6"><rect x="0" y="0" width="44" height="28"/></clipPath><circle cx="22" cy="16" r="14.3" fill="#050505" clip-path="url(#bk6)"/><rect x="0" y="19" width="44" height="9" rx="1" fill="#050505"/><g clip-path="url(#bk6)"><circle cx="22" cy="17" r="10.4" fill="url(#ko)"/><circle cx="22" cy="17" r="7.70" fill="url(#ki)"/><path d="M21.12 17.88L17.05 21.95" stroke="#1a1a1a" stroke-width="1.5" stroke-linecap="round"/></g><circle cx="4.5" cy="23.5" r="2.2" fill="none" stroke="#fff" stroke-width="1.1"/><path d="M36.5 23.5h5.5M39.2 20.8v5.5" stroke="#fff" stroke-width="1.3"/></svg>
<div class="t" style="left:1237px;width:46px;top:612px;text-align:center;font-size:7.5px;font-weight:bold;color:#050505;letter-spacing:1.6px;">TIMING</div>
<div style="left:1237px;top:620px;width:46px;height:1px;background:#16171c;"></div>
<svg style="left:1238px;top:616px;" width="44" height="34" viewBox="0 0 44 34"><clipPath id="bk7"><rect x="0" y="0" width="44" height="28"/></clipPath><circle cx="22" cy="16" r="14.3" fill="#050505" clip-path="url(#bk7)"/><rect x="0" y="19" width="44" height="9" rx="1" fill="#050505"/><g clip-path="url(#bk7)"><circle cx="22" cy="17" r="10.4" fill="url(#ko)"/><circle cx="22" cy="17" r="7.70" fill="url(#ki)"/><path d="M21.12 17.88L17.05 21.95" stroke="#1a1a1a" stroke-width="1.5" stroke-linecap="round"/></g><circle cx="4.5" cy="23.5" r="2.2" fill="none" stroke="#fff" stroke-width="1.1"/><path d="M36.5 23.5h5.5M39.2 20.8v5.5" stroke="#fff" stroke-width="1.3"/></svg>
<div class="t" style="left:1237px;width:46px;top:649px;text-align:center;font-size:7.5px;font-weight:bold;color:#050505;letter-spacing:1.8px;">SWING</div>
<div style="left:1237px;top:657px;width:46px;height:1px;background:#16171c;"></div>
<div class="bbtn" style="left:1239.5px;top:700px;width:41px;height:12.5px;border-color:#0a0a10;"><div class="px" style="left:0;top:1.5px;width:39px;letter-spacing:1.4px;font-size:8px;font-weight:bold">FX</div></div>
<div class="bbtn" style="left:1239.5px;top:716.5px;width:41px;height:12.5px;border-color:#0a0a10;"><div class="px" style="left:0;top:1.5px;width:39px;letter-spacing:1.2px;font-size:8px;font-weight:bold">PEAK</div></div>
</div>
</body></html>
